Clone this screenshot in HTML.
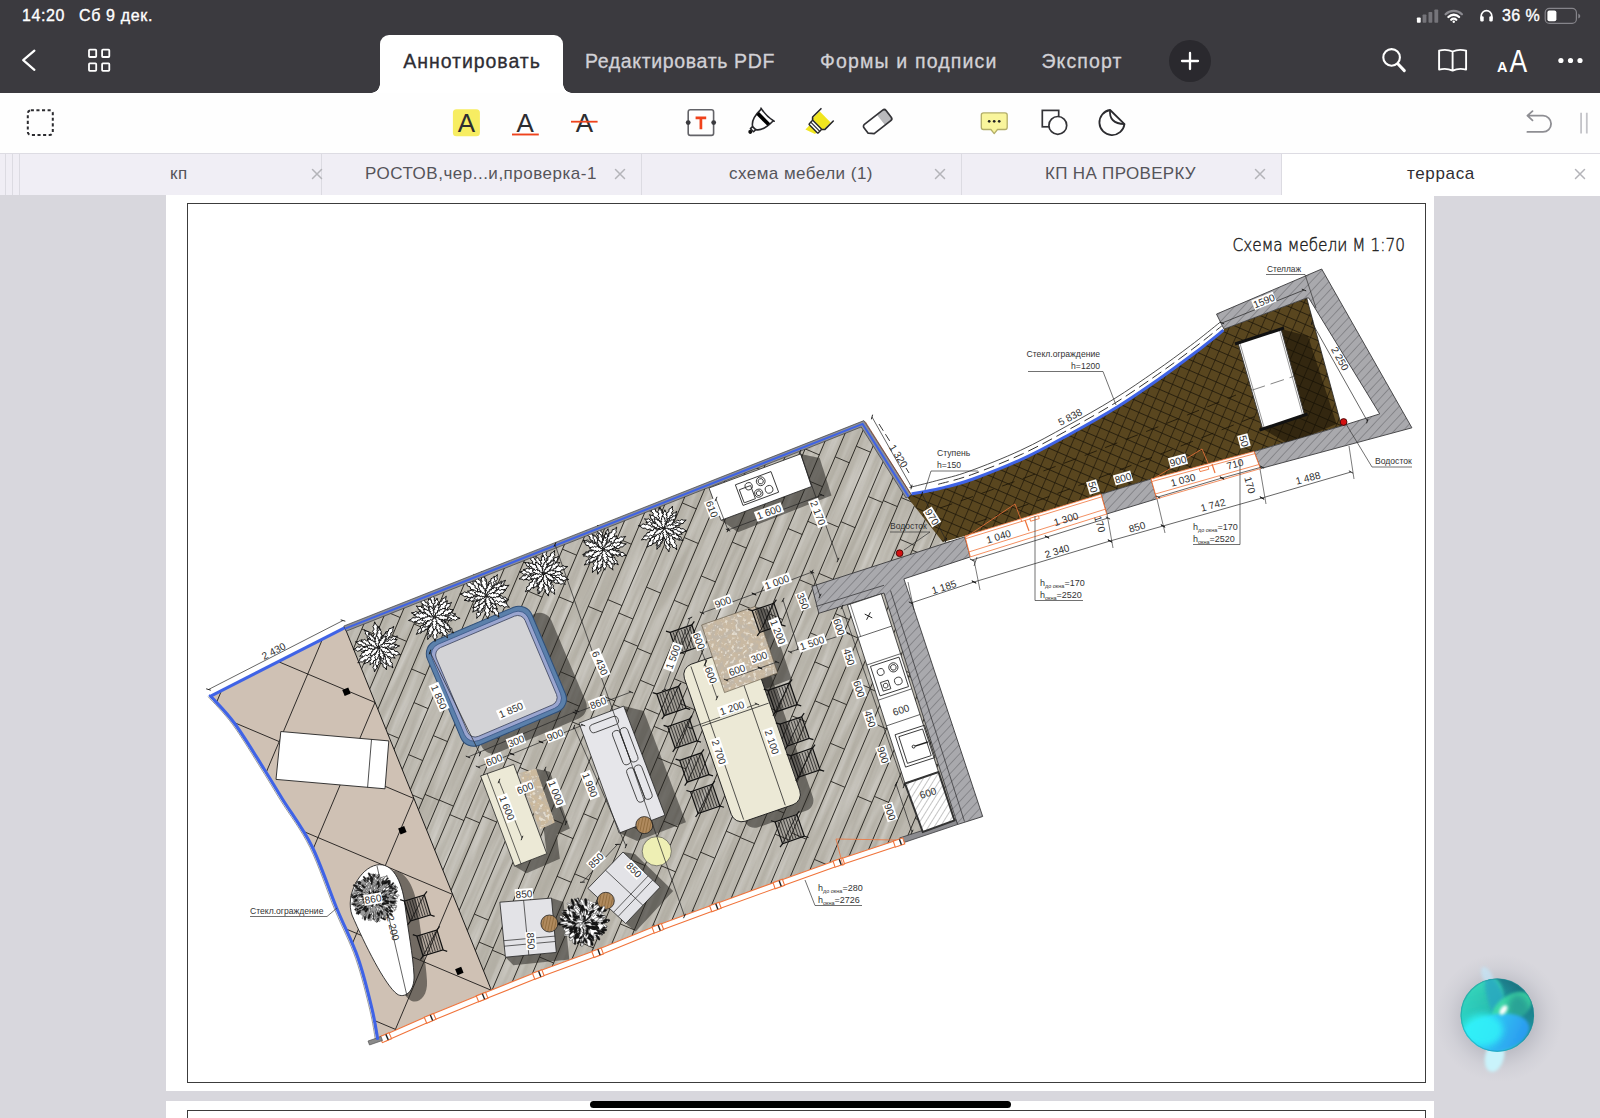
<!DOCTYPE html>
<html lang="ru">
<head>
<meta charset="utf-8">
<title>терраса</title>
<style>
html,body{margin:0;padding:0;}
body{width:1600px;height:1118px;overflow:hidden;position:relative;background:#d8d7dd;font-family:"Liberation Sans",sans-serif;}
.abs{position:absolute;}
#topbar{left:0;top:0;width:1600px;height:93px;background:#3b3a3f;}
#status{left:0;top:0;width:1600px;height:32px;color:#fff;font-size:16px;font-weight:400;}
#status span{-webkit-text-stroke:0.35px #fff;position:absolute;top:7px;white-space:nowrap}
.navt{-webkit-text-stroke:0.3px #d2d1d6;top:50px;font-size:19.5px;color:#d2d1d6;white-space:nowrap;line-height:22px}
#acttab{left:380px;top:35px;width:183px;height:58px;background:#fff;border-radius:9px 9px 0 0;}
#acttab:before,#acttab:after{content:"";position:absolute;bottom:0;width:9px;height:9px;}
#acttab:before{left:-9px;background:radial-gradient(circle at 0 0,rgba(255,255,255,0) 8.5px,#fff 9px);}
#acttab:after{right:-9px;background:radial-gradient(circle at 100% 0,rgba(255,255,255,0) 8.5px,#fff 9px);}
#acttab span{-webkit-text-stroke:0.3px #2e2d33;position:absolute;left:0;width:183px;text-align:center;top:15px;font-size:19.5px;line-height:22px;color:#2e2d33;letter-spacing:0.95px;text-indent:1px}
#toolbar{left:0;top:93px;width:1600px;height:60px;background:#fefefe;}
#tabs{left:0;top:153px;width:1600px;height:42px;background:#f0eef5;border-top:1px solid #dddce3;box-sizing:border-box;}
.tab{position:absolute;top:0;height:41px;border-right:1px solid #dcdbe2;box-sizing:border-box;}
.tab .t{position:absolute;top:10px;font-size:17px;line-height:20px;color:#55545a;white-space:nowrap;}
.tab .x{position:absolute;top:12px;width:14px;height:14px}
#page1{left:166px;top:195px;width:1268px;height:895.5px;background:#fff;}
#page2{left:166px;top:1100.5px;width:1268px;height:40px;background:#fff;}
.frame{position:absolute;border:1.3px solid #3c3c3c;box-sizing:border-box;}
#homebar{left:590px;top:1101px;width:421px;height:7px;border-radius:4px;background:#000;}
svg{position:absolute;left:0;top:0;overflow:visible}
</style>
</head>
<body>
<div id="page1" class="abs"><div class="frame" style="left:21px;top:7.5px;width:1239px;height:880.5px"></div></div>
<div id="page2" class="abs"><div class="frame" style="left:21px;top:9.5px;width:1239px;height:100px"></div></div>
<svg id="plan" width="1600" height="1118" viewBox="0 0 1600 1118" font-family="Liberation Sans, sans-serif">
<defs>
<clipPath id="cBeige"><polygon points="210.3,695.8 344.7,627.2 491.5,990.5 481.0,994.2 428.9,1015.5 384.5,1034.9 380.7,1036.5 377.5,1038.4 372.0,1009.0 358.0,958.0 337.0,909.0 312.0,846.5 283.0,800.0 264.0,769.0 235.0,724.0"/></clipPath>
<clipPath id="cWood"><polygon points="344.7,627.2 863.3,422.5 911.0,495.2 944.0,541.9 960.0,540.0 898.0,578.0 955.0,822.0 899.7,839.5 898.1,839.7 837.8,859.7 777.8,881.2 714.4,904.2 656.7,925.5 596.5,949.9 537.2,971.7 491.5,990.5"/></clipPath>
<clipPath id="cBrown"><polygon points="907.5,497.5 911.5,494.0 940.0,488.5 973.0,479.0 1024.2,458.1 1070.7,433.7 1117.2,407.0 1159.0,379.0 1194.0,353.5 1223.5,330.2 1224.0,329.1 1306.7,298.0 1341.5,426.0 1254.0,451.5 1151.0,479.0 1101.0,494.2 964.9,536.0 942.8,541.9"/></clipPath>
<pattern id="pBrown" width="9.8" height="9.8" patternUnits="userSpaceOnUse" patternTransform="rotate(23.5) translate(3 2)"><rect width="9.8" height="9.8" fill="#59461f"/><path d="M0 0H9.8M0 0V9.8" stroke="#1a1408" stroke-width="1.3" fill="none"/></pattern>
<pattern id="pWall" width="6.5" height="6.5" patternUnits="userSpaceOnUse" patternTransform="rotate(-47)"><rect width="6.5" height="6.5" fill="#a9a9ad"/><path d="M0 0H6.5" stroke="#5c5c60" stroke-width="0.9"/></pattern>
<pattern id="pCab" width="5" height="5" patternUnits="userSpaceOnUse" patternTransform="rotate(-58)"><rect width="5" height="5" fill="#fff"/><path d="M0 0H5" stroke="#555" stroke-width="0.7"/></pattern>
<filter id="grain" x="0" y="0" width="100%" height="100%"><feTurbulence type="fractalNoise" baseFrequency="0.01 0.16" numOctaves="3" seed="3" result="n"/><feColorMatrix type="matrix" values="0 0 0 0 1  0 0 0 0 1  0 0 0 0 1  1.5 0 0 0 -0.5"/></filter>
<filter id="grainD" x="0" y="0" width="100%" height="100%"><feTurbulence type="fractalNoise" baseFrequency="0.012 0.2" numOctaves="2" seed="9" result="n"/><feColorMatrix type="matrix" values="0 0 0 0 0.25  0 0 0 0 0.24  0 0 0 0 0.2  1.4 0 0 0 -0.55"/></filter>
<filter id="speck" x="0" y="0" width="100%" height="100%"><feTurbulence type="fractalNoise" baseFrequency="0.17" numOctaves="2" seed="5"/><feColorMatrix type="matrix" values="0 0 0 0 0.52  0 0 0 0 0.47  0 0 0 0 0.40  0 0 0 6 -2.7"/><feComposite operator="in" in2="SourceGraphic"/></filter>
<filter id="speck2" x="0" y="0" width="100%" height="100%"><feTurbulence type="fractalNoise" baseFrequency="0.28" numOctaves="2" seed="11"/><feColorMatrix type="matrix" values="0 0 0 0 0.86  0 0 0 0 0.82  0 0 0 0 0.74  0 6 0 0 -3.3"/><feComposite operator="in" in2="SourceGraphic"/></filter>
<filter id="blur1"><feGaussianBlur stdDeviation="0.8"/></filter>
</defs>
<polygon points="210.3,695.8 344.7,627.2 491.5,990.5 481.0,994.2 428.9,1015.5 384.5,1034.9 380.7,1036.5 377.5,1038.4 372.0,1009.0 358.0,958.0 337.0,909.0 312.0,846.5 283.0,800.0 264.0,769.0 235.0,724.0" fill="#cfc1b4" stroke="none" stroke-width="1" />
<polygon points="344.7,627.2 863.3,422.5 911.0,495.2 944.0,541.9 960.0,540.0 898.0,578.0 955.0,822.0 899.7,839.5 898.1,839.7 837.8,859.7 777.8,881.2 714.4,904.2 656.7,925.5 596.5,949.9 537.2,971.7 491.5,990.5" fill="#b7b3a9" stroke="none" stroke-width="1" />
<g clip-path="url(#cWood)"><g transform="rotate(-67 620 730)"><rect x="250" y="330" width="760" height="800" fill="#fff" filter="url(#grain)" opacity="0.42"/><rect x="250" y="330" width="760" height="800" fill="#000" filter="url(#grainD)" opacity="0.22"/></g>
<line x1="-104.6" y1="1060.0" x2="175.6" y2="400.0" stroke="#26241f" stroke-width="0.95" />
<line x1="-73.2" y1="986.1" x2="-59.1" y2="992.1" stroke="#26241f" stroke-width="0.9" />
<line x1="-28.9" y1="881.8" x2="-14.8" y2="887.8" stroke="#26241f" stroke-width="0.9" />
<line x1="-8.4" y1="833.4" x2="5.7" y2="839.3" stroke="#26241f" stroke-width="0.9" />
<line x1="31.2" y1="740.1" x2="45.3" y2="746.1" stroke="#26241f" stroke-width="0.9" />
<line x1="63.8" y1="663.4" x2="77.9" y2="669.4" stroke="#26241f" stroke-width="0.9" />
<line x1="83.7" y1="616.3" x2="97.9" y2="622.3" stroke="#26241f" stroke-width="0.9" />
<line x1="122.1" y1="525.9" x2="136.3" y2="531.9" stroke="#26241f" stroke-width="0.9" />
<line x1="141.3" y1="480.8" x2="155.4" y2="486.8" stroke="#26241f" stroke-width="0.9" />
<line x1="176.6" y1="397.5" x2="190.8" y2="403.5" stroke="#26241f" stroke-width="0.9" />
<line x1="-87.9" y1="1060.0" x2="192.2" y2="400.0" stroke="#26241f" stroke-width="0.95" />
<line x1="-65.0" y1="1006.0" x2="-50.8" y2="1011.9" stroke="#26241f" stroke-width="0.9" />
<line x1="-30.0" y1="923.5" x2="-15.8" y2="929.5" stroke="#26241f" stroke-width="0.9" />
<line x1="21.5" y1="802.2" x2="35.7" y2="808.2" stroke="#26241f" stroke-width="0.9" />
<line x1="44.2" y1="748.8" x2="58.3" y2="754.8" stroke="#26241f" stroke-width="0.9" />
<line x1="70.9" y1="685.8" x2="85.1" y2="691.8" stroke="#26241f" stroke-width="0.9" />
<line x1="114.3" y1="583.7" x2="128.4" y2="589.7" stroke="#26241f" stroke-width="0.9" />
<line x1="170.7" y1="450.7" x2="184.9" y2="456.7" stroke="#26241f" stroke-width="0.9" />
<line x1="212.0" y1="353.5" x2="226.1" y2="359.5" stroke="#26241f" stroke-width="0.9" />
<line x1="-71.2" y1="1060.0" x2="208.9" y2="400.0" stroke="#26241f" stroke-width="0.95" />
<line x1="-4.3" y1="902.3" x2="9.8" y2="908.3" stroke="#26241f" stroke-width="0.9" />
<line x1="15.2" y1="856.4" x2="29.3" y2="862.4" stroke="#26241f" stroke-width="0.9" />
<line x1="68.0" y1="732.0" x2="82.1" y2="738.0" stroke="#26241f" stroke-width="0.9" />
<line x1="97.5" y1="662.6" x2="111.6" y2="668.6" stroke="#26241f" stroke-width="0.9" />
<line x1="121.0" y1="607.2" x2="135.1" y2="613.2" stroke="#26241f" stroke-width="0.9" />
<line x1="143.4" y1="554.4" x2="157.5" y2="560.4" stroke="#26241f" stroke-width="0.9" />
<line x1="173.6" y1="483.2" x2="187.7" y2="489.2" stroke="#26241f" stroke-width="0.9" />
<line x1="224.7" y1="362.9" x2="238.8" y2="368.9" stroke="#26241f" stroke-width="0.9" />
<line x1="-54.6" y1="1060.0" x2="225.6" y2="400.0" stroke="#26241f" stroke-width="0.95" />
<line x1="-8.9" y1="952.4" x2="5.2" y2="958.4" stroke="#26241f" stroke-width="0.9" />
<line x1="34.9" y1="849.2" x2="49.0" y2="855.2" stroke="#26241f" stroke-width="0.9" />
<line x1="67.8" y1="771.8" x2="81.9" y2="777.8" stroke="#26241f" stroke-width="0.9" />
<line x1="107.8" y1="677.4" x2="122.0" y2="683.4" stroke="#26241f" stroke-width="0.9" />
<line x1="128.0" y1="629.9" x2="142.1" y2="635.9" stroke="#26241f" stroke-width="0.9" />
<line x1="148.0" y1="582.8" x2="162.1" y2="588.7" stroke="#26241f" stroke-width="0.9" />
<line x1="174.1" y1="521.4" x2="188.2" y2="527.4" stroke="#26241f" stroke-width="0.9" />
<line x1="219.5" y1="414.2" x2="233.7" y2="420.2" stroke="#26241f" stroke-width="0.9" />
<line x1="254.7" y1="331.5" x2="268.8" y2="337.5" stroke="#26241f" stroke-width="0.9" />
<line x1="-37.9" y1="1060.0" x2="242.3" y2="400.0" stroke="#26241f" stroke-width="0.95" />
<line x1="11.1" y1="944.6" x2="25.2" y2="950.6" stroke="#26241f" stroke-width="0.9" />
<line x1="47.3" y1="859.4" x2="61.4" y2="865.4" stroke="#26241f" stroke-width="0.9" />
<line x1="77.1" y1="789.0" x2="91.3" y2="795.0" stroke="#26241f" stroke-width="0.9" />
<line x1="127.3" y1="670.8" x2="141.4" y2="676.8" stroke="#26241f" stroke-width="0.9" />
<line x1="173.6" y1="561.8" x2="187.7" y2="567.8" stroke="#26241f" stroke-width="0.9" />
<line x1="201.2" y1="496.8" x2="215.3" y2="502.8" stroke="#26241f" stroke-width="0.9" />
<line x1="242.3" y1="399.9" x2="256.5" y2="405.9" stroke="#26241f" stroke-width="0.9" />
<line x1="-21.2" y1="1060.0" x2="258.9" y2="400.0" stroke="#26241f" stroke-width="0.95" />
<line x1="44.6" y1="905.0" x2="58.7" y2="911.0" stroke="#26241f" stroke-width="0.9" />
<line x1="92.1" y1="793.1" x2="106.2" y2="799.1" stroke="#26241f" stroke-width="0.9" />
<line x1="121.5" y1="723.8" x2="135.6" y2="729.8" stroke="#26241f" stroke-width="0.9" />
<line x1="179.3" y1="587.6" x2="193.4" y2="593.6" stroke="#26241f" stroke-width="0.9" />
<line x1="201.7" y1="534.8" x2="215.8" y2="540.8" stroke="#26241f" stroke-width="0.9" />
<line x1="236.5" y1="453.0" x2="250.6" y2="459.0" stroke="#26241f" stroke-width="0.9" />
<line x1="285.1" y1="338.4" x2="299.2" y2="344.4" stroke="#26241f" stroke-width="0.9" />
<line x1="-4.5" y1="1060.0" x2="275.6" y2="400.0" stroke="#26241f" stroke-width="0.95" />
<line x1="36.7" y1="962.9" x2="50.8" y2="968.9" stroke="#26241f" stroke-width="0.9" />
<line x1="55.9" y1="917.7" x2="70.0" y2="923.7" stroke="#26241f" stroke-width="0.9" />
<line x1="100.9" y1="811.7" x2="115.0" y2="817.7" stroke="#26241f" stroke-width="0.9" />
<line x1="149.8" y1="696.4" x2="163.9" y2="702.4" stroke="#26241f" stroke-width="0.9" />
<line x1="190.9" y1="599.6" x2="205.0" y2="605.6" stroke="#26241f" stroke-width="0.9" />
<line x1="244.4" y1="473.5" x2="258.5" y2="479.5" stroke="#26241f" stroke-width="0.9" />
<line x1="274.9" y1="401.8" x2="289.0" y2="407.8" stroke="#26241f" stroke-width="0.9" />
<line x1="321.0" y1="293.2" x2="335.1" y2="299.2" stroke="#26241f" stroke-width="0.9" />
<line x1="12.1" y1="1060.0" x2="292.3" y2="400.0" stroke="#26241f" stroke-width="0.95" />
<line x1="67.4" y1="929.7" x2="81.6" y2="935.7" stroke="#26241f" stroke-width="0.9" />
<line x1="103.7" y1="844.2" x2="117.9" y2="850.2" stroke="#26241f" stroke-width="0.9" />
<line x1="155.8" y1="721.6" x2="169.9" y2="727.6" stroke="#26241f" stroke-width="0.9" />
<line x1="212.1" y1="588.8" x2="226.3" y2="594.8" stroke="#26241f" stroke-width="0.9" />
<line x1="249.2" y1="501.6" x2="263.3" y2="507.6" stroke="#26241f" stroke-width="0.9" />
<line x1="294.0" y1="396.0" x2="308.1" y2="402.0" stroke="#26241f" stroke-width="0.9" />
<line x1="28.8" y1="1060.0" x2="309.0" y2="400.0" stroke="#26241f" stroke-width="0.95" />
<line x1="76.6" y1="947.4" x2="90.7" y2="953.4" stroke="#26241f" stroke-width="0.9" />
<line x1="120.7" y1="843.5" x2="134.9" y2="849.5" stroke="#26241f" stroke-width="0.9" />
<line x1="179.1" y1="706.0" x2="193.2" y2="712.0" stroke="#26241f" stroke-width="0.9" />
<line x1="230.4" y1="585.2" x2="244.5" y2="591.2" stroke="#26241f" stroke-width="0.9" />
<line x1="259.6" y1="516.3" x2="273.8" y2="522.3" stroke="#26241f" stroke-width="0.9" />
<line x1="293.0" y1="437.5" x2="307.2" y2="443.5" stroke="#26241f" stroke-width="0.9" />
<line x1="338.0" y1="331.5" x2="352.2" y2="337.5" stroke="#26241f" stroke-width="0.9" />
<line x1="45.5" y1="1060.0" x2="325.6" y2="400.0" stroke="#26241f" stroke-width="0.95" />
<line x1="82.5" y1="972.7" x2="96.7" y2="978.7" stroke="#26241f" stroke-width="0.9" />
<line x1="107.0" y1="915.0" x2="121.2" y2="921.0" stroke="#26241f" stroke-width="0.9" />
<line x1="129.4" y1="862.3" x2="143.5" y2="868.3" stroke="#26241f" stroke-width="0.9" />
<line x1="149.4" y1="815.2" x2="163.5" y2="821.2" stroke="#26241f" stroke-width="0.9" />
<line x1="198.5" y1="699.5" x2="212.6" y2="705.5" stroke="#26241f" stroke-width="0.9" />
<line x1="221.4" y1="645.6" x2="235.5" y2="651.6" stroke="#26241f" stroke-width="0.9" />
<line x1="249.1" y1="580.2" x2="263.3" y2="586.2" stroke="#26241f" stroke-width="0.9" />
<line x1="282.8" y1="501.0" x2="296.9" y2="507.0" stroke="#26241f" stroke-width="0.9" />
<line x1="336.1" y1="375.4" x2="350.2" y2="381.4" stroke="#26241f" stroke-width="0.9" />
<line x1="62.2" y1="1060.0" x2="342.3" y2="400.0" stroke="#26241f" stroke-width="0.95" />
<line x1="100.1" y1="970.7" x2="114.2" y2="976.7" stroke="#26241f" stroke-width="0.9" />
<line x1="140.2" y1="876.2" x2="154.3" y2="882.2" stroke="#26241f" stroke-width="0.9" />
<line x1="194.0" y1="749.4" x2="208.1" y2="755.4" stroke="#26241f" stroke-width="0.9" />
<line x1="245.2" y1="628.8" x2="259.3" y2="634.8" stroke="#26241f" stroke-width="0.9" />
<line x1="298.2" y1="503.8" x2="312.4" y2="509.8" stroke="#26241f" stroke-width="0.9" />
<line x1="327.2" y1="435.5" x2="341.4" y2="441.5" stroke="#26241f" stroke-width="0.9" />
<line x1="361.9" y1="353.9" x2="376.0" y2="359.9" stroke="#26241f" stroke-width="0.9" />
<line x1="78.8" y1="1060.0" x2="359.0" y2="400.0" stroke="#26241f" stroke-width="0.95" />
<line x1="141.1" y1="913.3" x2="155.2" y2="919.3" stroke="#26241f" stroke-width="0.9" />
<line x1="198.0" y1="779.3" x2="212.1" y2="785.3" stroke="#26241f" stroke-width="0.9" />
<line x1="221.8" y1="723.3" x2="235.9" y2="729.3" stroke="#26241f" stroke-width="0.9" />
<line x1="246.6" y1="664.8" x2="260.7" y2="670.8" stroke="#26241f" stroke-width="0.9" />
<line x1="273.7" y1="601.0" x2="287.8" y2="607.0" stroke="#26241f" stroke-width="0.9" />
<line x1="300.8" y1="537.0" x2="315.0" y2="543.0" stroke="#26241f" stroke-width="0.9" />
<line x1="338.3" y1="448.7" x2="352.4" y2="454.7" stroke="#26241f" stroke-width="0.9" />
<line x1="380.1" y1="350.4" x2="394.2" y2="356.4" stroke="#26241f" stroke-width="0.9" />
<line x1="95.5" y1="1060.0" x2="375.7" y2="400.0" stroke="#26241f" stroke-width="0.95" />
<line x1="119.4" y1="1003.7" x2="133.6" y2="1009.7" stroke="#26241f" stroke-width="0.9" />
<line x1="154.2" y1="921.8" x2="168.3" y2="927.8" stroke="#26241f" stroke-width="0.9" />
<line x1="186.9" y1="844.6" x2="201.1" y2="850.6" stroke="#26241f" stroke-width="0.9" />
<line x1="227.8" y1="748.5" x2="241.9" y2="754.5" stroke="#26241f" stroke-width="0.9" />
<line x1="284.4" y1="614.9" x2="298.6" y2="620.9" stroke="#26241f" stroke-width="0.9" />
<line x1="330.3" y1="506.8" x2="344.5" y2="512.8" stroke="#26241f" stroke-width="0.9" />
<line x1="369.1" y1="415.5" x2="383.2" y2="421.5" stroke="#26241f" stroke-width="0.9" />
<line x1="412.0" y1="314.4" x2="426.1" y2="320.4" stroke="#26241f" stroke-width="0.9" />
<line x1="112.2" y1="1060.0" x2="392.3" y2="400.0" stroke="#26241f" stroke-width="0.95" />
<line x1="147.8" y1="976.0" x2="162.0" y2="982.0" stroke="#26241f" stroke-width="0.9" />
<line x1="202.3" y1="847.6" x2="216.5" y2="853.6" stroke="#26241f" stroke-width="0.9" />
<line x1="251.9" y1="730.8" x2="266.0" y2="736.8" stroke="#26241f" stroke-width="0.9" />
<line x1="305.4" y1="604.9" x2="319.5" y2="610.9" stroke="#26241f" stroke-width="0.9" />
<line x1="355.7" y1="486.4" x2="369.8" y2="492.3" stroke="#26241f" stroke-width="0.9" />
<line x1="389.4" y1="407.0" x2="403.5" y2="413.0" stroke="#26241f" stroke-width="0.9" />
<line x1="423.3" y1="327.0" x2="437.5" y2="333.0" stroke="#26241f" stroke-width="0.9" />
<line x1="128.9" y1="1060.0" x2="409.0" y2="400.0" stroke="#26241f" stroke-width="0.95" />
<line x1="174.9" y1="951.6" x2="189.0" y2="957.6" stroke="#26241f" stroke-width="0.9" />
<line x1="195.0" y1="904.1" x2="209.2" y2="910.1" stroke="#26241f" stroke-width="0.9" />
<line x1="215.4" y1="856.2" x2="229.5" y2="862.2" stroke="#26241f" stroke-width="0.9" />
<line x1="241.5" y1="794.6" x2="255.7" y2="800.6" stroke="#26241f" stroke-width="0.9" />
<line x1="265.8" y1="737.5" x2="279.9" y2="743.5" stroke="#26241f" stroke-width="0.9" />
<line x1="297.3" y1="663.2" x2="311.4" y2="669.2" stroke="#26241f" stroke-width="0.9" />
<line x1="317.0" y1="616.7" x2="331.2" y2="622.7" stroke="#26241f" stroke-width="0.9" />
<line x1="334.6" y1="575.2" x2="348.8" y2="581.2" stroke="#26241f" stroke-width="0.9" />
<line x1="358.4" y1="519.2" x2="372.6" y2="525.2" stroke="#26241f" stroke-width="0.9" />
<line x1="380.2" y1="468.0" x2="394.3" y2="474.0" stroke="#26241f" stroke-width="0.9" />
<line x1="412.7" y1="391.4" x2="426.8" y2="397.4" stroke="#26241f" stroke-width="0.9" />
<line x1="145.5" y1="1060.0" x2="425.7" y2="400.0" stroke="#26241f" stroke-width="0.95" />
<line x1="199.6" y1="932.7" x2="213.7" y2="938.7" stroke="#26241f" stroke-width="0.9" />
<line x1="242.4" y1="831.9" x2="256.5" y2="837.9" stroke="#26241f" stroke-width="0.9" />
<line x1="266.1" y1="776.1" x2="280.2" y2="782.1" stroke="#26241f" stroke-width="0.9" />
<line x1="294.0" y1="710.3" x2="308.1" y2="716.3" stroke="#26241f" stroke-width="0.9" />
<line x1="325.8" y1="635.3" x2="339.9" y2="641.3" stroke="#26241f" stroke-width="0.9" />
<line x1="358.3" y1="558.7" x2="372.5" y2="564.7" stroke="#26241f" stroke-width="0.9" />
<line x1="381.0" y1="505.4" x2="395.1" y2="511.4" stroke="#26241f" stroke-width="0.9" />
<line x1="433.4" y1="381.9" x2="447.5" y2="387.9" stroke="#26241f" stroke-width="0.9" />
<line x1="162.2" y1="1060.0" x2="442.4" y2="400.0" stroke="#26241f" stroke-width="0.95" />
<line x1="222.2" y1="918.7" x2="236.3" y2="924.7" stroke="#26241f" stroke-width="0.9" />
<line x1="259.6" y1="830.5" x2="273.8" y2="836.5" stroke="#26241f" stroke-width="0.9" />
<line x1="280.7" y1="780.8" x2="294.9" y2="786.8" stroke="#26241f" stroke-width="0.9" />
<line x1="302.5" y1="729.5" x2="316.6" y2="735.5" stroke="#26241f" stroke-width="0.9" />
<line x1="334.2" y1="654.9" x2="348.3" y2="660.9" stroke="#26241f" stroke-width="0.9" />
<line x1="362.6" y1="587.9" x2="376.7" y2="593.9" stroke="#26241f" stroke-width="0.9" />
<line x1="414.2" y1="466.4" x2="428.3" y2="472.4" stroke="#26241f" stroke-width="0.9" />
<line x1="438.4" y1="409.4" x2="452.5" y2="415.4" stroke="#26241f" stroke-width="0.9" />
<line x1="456.9" y1="365.7" x2="471.1" y2="371.7" stroke="#26241f" stroke-width="0.9" />
<line x1="178.9" y1="1060.0" x2="459.0" y2="400.0" stroke="#26241f" stroke-width="0.95" />
<line x1="240.4" y1="915.0" x2="254.6" y2="921.0" stroke="#26241f" stroke-width="0.9" />
<line x1="264.0" y1="859.4" x2="278.2" y2="865.4" stroke="#26241f" stroke-width="0.9" />
<line x1="303.9" y1="765.5" x2="318.0" y2="771.5" stroke="#26241f" stroke-width="0.9" />
<line x1="322.6" y1="721.4" x2="336.7" y2="727.4" stroke="#26241f" stroke-width="0.9" />
<line x1="361.9" y1="629.0" x2="376.0" y2="635.0" stroke="#26241f" stroke-width="0.9" />
<line x1="419.6" y1="493.0" x2="433.7" y2="499.0" stroke="#26241f" stroke-width="0.9" />
<line x1="472.6" y1="368.1" x2="486.7" y2="374.1" stroke="#26241f" stroke-width="0.9" />
<line x1="195.6" y1="1060.0" x2="475.7" y2="400.0" stroke="#26241f" stroke-width="0.95" />
<line x1="240.2" y1="954.9" x2="254.3" y2="960.9" stroke="#26241f" stroke-width="0.9" />
<line x1="272.8" y1="878.0" x2="286.9" y2="884.0" stroke="#26241f" stroke-width="0.9" />
<line x1="297.3" y1="820.5" x2="311.4" y2="826.5" stroke="#26241f" stroke-width="0.9" />
<line x1="346.5" y1="704.4" x2="360.6" y2="710.4" stroke="#26241f" stroke-width="0.9" />
<line x1="385.9" y1="611.5" x2="400.1" y2="617.5" stroke="#26241f" stroke-width="0.9" />
<line x1="435.5" y1="494.8" x2="449.6" y2="500.8" stroke="#26241f" stroke-width="0.9" />
<line x1="466.6" y1="421.5" x2="480.7" y2="427.5" stroke="#26241f" stroke-width="0.9" />
<line x1="493.3" y1="358.5" x2="507.5" y2="364.5" stroke="#26241f" stroke-width="0.9" />
<line x1="212.2" y1="1060.0" x2="492.4" y2="400.0" stroke="#26241f" stroke-width="0.95" />
<line x1="289.3" y1="878.6" x2="303.4" y2="884.6" stroke="#26241f" stroke-width="0.9" />
<line x1="341.8" y1="754.7" x2="356.0" y2="760.7" stroke="#26241f" stroke-width="0.9" />
<line x1="392.5" y1="635.4" x2="406.6" y2="641.4" stroke="#26241f" stroke-width="0.9" />
<line x1="443.6" y1="514.9" x2="457.8" y2="520.9" stroke="#26241f" stroke-width="0.9" />
<line x1="491.6" y1="401.9" x2="505.7" y2="407.9" stroke="#26241f" stroke-width="0.9" />
<line x1="518.5" y1="338.6" x2="532.6" y2="344.6" stroke="#26241f" stroke-width="0.9" />
<line x1="228.9" y1="1060.0" x2="509.1" y2="400.0" stroke="#26241f" stroke-width="0.95" />
<line x1="273.2" y1="955.6" x2="287.4" y2="961.6" stroke="#26241f" stroke-width="0.9" />
<line x1="292.0" y1="911.4" x2="306.1" y2="917.4" stroke="#26241f" stroke-width="0.9" />
<line x1="310.7" y1="867.3" x2="324.9" y2="873.3" stroke="#26241f" stroke-width="0.9" />
<line x1="339.8" y1="798.8" x2="353.9" y2="804.8" stroke="#26241f" stroke-width="0.9" />
<line x1="368.0" y1="732.4" x2="382.1" y2="738.4" stroke="#26241f" stroke-width="0.9" />
<line x1="414.0" y1="624.0" x2="428.1" y2="630.0" stroke="#26241f" stroke-width="0.9" />
<line x1="470.8" y1="490.1" x2="484.9" y2="496.1" stroke="#26241f" stroke-width="0.9" />
<line x1="506.7" y1="405.5" x2="520.9" y2="411.5" stroke="#26241f" stroke-width="0.9" />
<line x1="562.8" y1="273.5" x2="576.9" y2="279.5" stroke="#26241f" stroke-width="0.9" />
<line x1="245.6" y1="1060.0" x2="525.8" y2="400.0" stroke="#26241f" stroke-width="0.95" />
<line x1="325.5" y1="871.7" x2="339.7" y2="877.7" stroke="#26241f" stroke-width="0.9" />
<line x1="358.1" y1="795.0" x2="372.2" y2="801.0" stroke="#26241f" stroke-width="0.9" />
<line x1="384.7" y1="732.3" x2="398.8" y2="738.3" stroke="#26241f" stroke-width="0.9" />
<line x1="411.6" y1="669.0" x2="425.7" y2="675.0" stroke="#26241f" stroke-width="0.9" />
<line x1="437.2" y1="608.5" x2="451.4" y2="614.5" stroke="#26241f" stroke-width="0.9" />
<line x1="463.2" y1="547.3" x2="477.3" y2="553.3" stroke="#26241f" stroke-width="0.9" />
<line x1="506.4" y1="445.6" x2="520.5" y2="451.6" stroke="#26241f" stroke-width="0.9" />
<line x1="560.9" y1="317.2" x2="575.0" y2="323.2" stroke="#26241f" stroke-width="0.9" />
<line x1="262.3" y1="1060.0" x2="542.4" y2="400.0" stroke="#26241f" stroke-width="0.95" />
<line x1="319.2" y1="925.8" x2="333.4" y2="931.8" stroke="#26241f" stroke-width="0.9" />
<line x1="363.6" y1="821.3" x2="377.7" y2="827.3" stroke="#26241f" stroke-width="0.9" />
<line x1="414.0" y1="702.6" x2="428.1" y2="708.6" stroke="#26241f" stroke-width="0.9" />
<line x1="435.1" y1="653.0" x2="449.2" y2="659.0" stroke="#26241f" stroke-width="0.9" />
<line x1="479.7" y1="547.7" x2="493.9" y2="553.7" stroke="#26241f" stroke-width="0.9" />
<line x1="534.6" y1="418.3" x2="548.8" y2="424.3" stroke="#26241f" stroke-width="0.9" />
<line x1="584.3" y1="301.3" x2="598.5" y2="307.3" stroke="#26241f" stroke-width="0.9" />
<line x1="279.0" y1="1060.0" x2="559.1" y2="400.0" stroke="#26241f" stroke-width="0.95" />
<line x1="333.7" y1="930.9" x2="347.9" y2="936.9" stroke="#26241f" stroke-width="0.9" />
<line x1="358.6" y1="872.3" x2="372.8" y2="878.3" stroke="#26241f" stroke-width="0.9" />
<line x1="408.6" y1="754.6" x2="422.7" y2="760.6" stroke="#26241f" stroke-width="0.9" />
<line x1="439.8" y1="681.0" x2="454.0" y2="687.0" stroke="#26241f" stroke-width="0.9" />
<line x1="490.3" y1="562.2" x2="504.4" y2="568.2" stroke="#26241f" stroke-width="0.9" />
<line x1="547.7" y1="426.8" x2="561.8" y2="432.8" stroke="#26241f" stroke-width="0.9" />
<line x1="581.5" y1="347.2" x2="595.7" y2="353.2" stroke="#26241f" stroke-width="0.9" />
<line x1="295.6" y1="1060.0" x2="575.8" y2="400.0" stroke="#26241f" stroke-width="0.95" />
<line x1="361.5" y1="904.9" x2="375.6" y2="910.9" stroke="#26241f" stroke-width="0.9" />
<line x1="408.8" y1="793.4" x2="422.9" y2="799.4" stroke="#26241f" stroke-width="0.9" />
<line x1="433.3" y1="735.6" x2="447.5" y2="741.6" stroke="#26241f" stroke-width="0.9" />
<line x1="456.1" y1="681.9" x2="470.3" y2="687.9" stroke="#26241f" stroke-width="0.9" />
<line x1="479.9" y1="625.8" x2="494.0" y2="631.8" stroke="#26241f" stroke-width="0.9" />
<line x1="534.6" y1="497.0" x2="548.8" y2="503.0" stroke="#26241f" stroke-width="0.9" />
<line x1="585.3" y1="377.6" x2="599.4" y2="383.6" stroke="#26241f" stroke-width="0.9" />
<line x1="312.3" y1="1060.0" x2="592.5" y2="400.0" stroke="#26241f" stroke-width="0.95" />
<line x1="367.2" y1="930.6" x2="381.4" y2="936.6" stroke="#26241f" stroke-width="0.9" />
<line x1="425.0" y1="794.4" x2="439.2" y2="800.4" stroke="#26241f" stroke-width="0.9" />
<line x1="469.6" y1="689.5" x2="483.7" y2="695.5" stroke="#26241f" stroke-width="0.9" />
<line x1="501.5" y1="614.2" x2="515.7" y2="620.2" stroke="#26241f" stroke-width="0.9" />
<line x1="541.6" y1="519.8" x2="555.8" y2="525.8" stroke="#26241f" stroke-width="0.9" />
<line x1="564.6" y1="465.7" x2="578.7" y2="471.7" stroke="#26241f" stroke-width="0.9" />
<line x1="582.7" y1="422.9" x2="596.9" y2="428.9" stroke="#26241f" stroke-width="0.9" />
<line x1="640.2" y1="287.6" x2="654.3" y2="293.6" stroke="#26241f" stroke-width="0.9" />
<line x1="329.0" y1="1060.0" x2="609.1" y2="400.0" stroke="#26241f" stroke-width="0.95" />
<line x1="383.4" y1="931.8" x2="397.5" y2="937.8" stroke="#26241f" stroke-width="0.9" />
<line x1="439.3" y1="800.1" x2="453.4" y2="806.1" stroke="#26241f" stroke-width="0.9" />
<line x1="474.7" y1="716.8" x2="488.8" y2="722.8" stroke="#26241f" stroke-width="0.9" />
<line x1="528.0" y1="591.1" x2="542.1" y2="597.1" stroke="#26241f" stroke-width="0.9" />
<line x1="579.5" y1="469.8" x2="593.6" y2="475.8" stroke="#26241f" stroke-width="0.9" />
<line x1="605.7" y1="408.0" x2="619.9" y2="414.0" stroke="#26241f" stroke-width="0.9" />
<line x1="633.6" y1="342.3" x2="647.8" y2="348.2" stroke="#26241f" stroke-width="0.9" />
<line x1="345.7" y1="1060.0" x2="625.8" y2="400.0" stroke="#26241f" stroke-width="0.95" />
<line x1="380.0" y1="979.1" x2="394.1" y2="985.1" stroke="#26241f" stroke-width="0.9" />
<line x1="421.6" y1="881.0" x2="435.7" y2="887.0" stroke="#26241f" stroke-width="0.9" />
<line x1="449.8" y1="814.6" x2="464.0" y2="820.6" stroke="#26241f" stroke-width="0.9" />
<line x1="484.6" y1="732.6" x2="498.7" y2="738.6" stroke="#26241f" stroke-width="0.9" />
<line x1="507.6" y1="678.5" x2="521.7" y2="684.5" stroke="#26241f" stroke-width="0.9" />
<line x1="562.5" y1="549.2" x2="576.6" y2="555.2" stroke="#26241f" stroke-width="0.9" />
<line x1="594.6" y1="473.5" x2="608.7" y2="479.5" stroke="#26241f" stroke-width="0.9" />
<line x1="631.0" y1="387.8" x2="645.1" y2="393.8" stroke="#26241f" stroke-width="0.9" />
<line x1="362.3" y1="1060.0" x2="642.5" y2="400.0" stroke="#26241f" stroke-width="0.95" />
<line x1="430.7" y1="899.0" x2="444.8" y2="905.0" stroke="#26241f" stroke-width="0.9" />
<line x1="465.5" y1="816.9" x2="479.7" y2="822.9" stroke="#26241f" stroke-width="0.9" />
<line x1="520.8" y1="686.8" x2="534.9" y2="692.8" stroke="#26241f" stroke-width="0.9" />
<line x1="558.9" y1="596.8" x2="573.1" y2="602.8" stroke="#26241f" stroke-width="0.9" />
<line x1="598.3" y1="504.0" x2="612.5" y2="510.0" stroke="#26241f" stroke-width="0.9" />
<line x1="637.4" y1="412.0" x2="651.5" y2="418.0" stroke="#26241f" stroke-width="0.9" />
<line x1="655.7" y1="368.8" x2="669.9" y2="374.8" stroke="#26241f" stroke-width="0.9" />
<line x1="379.0" y1="1060.0" x2="659.2" y2="400.0" stroke="#26241f" stroke-width="0.95" />
<line x1="414.4" y1="976.6" x2="428.5" y2="982.6" stroke="#26241f" stroke-width="0.9" />
<line x1="432.2" y1="934.8" x2="446.3" y2="940.8" stroke="#26241f" stroke-width="0.9" />
<line x1="482.5" y1="816.1" x2="496.7" y2="822.1" stroke="#26241f" stroke-width="0.9" />
<line x1="507.2" y1="758.0" x2="521.3" y2="764.0" stroke="#26241f" stroke-width="0.9" />
<line x1="544.2" y1="670.8" x2="558.3" y2="676.8" stroke="#26241f" stroke-width="0.9" />
<line x1="591.5" y1="559.3" x2="605.7" y2="565.3" stroke="#26241f" stroke-width="0.9" />
<line x1="631.9" y1="464.1" x2="646.1" y2="470.1" stroke="#26241f" stroke-width="0.9" />
<line x1="662.9" y1="391.2" x2="677.0" y2="397.2" stroke="#26241f" stroke-width="0.9" />
<line x1="395.7" y1="1060.0" x2="675.8" y2="400.0" stroke="#26241f" stroke-width="0.95" />
<line x1="448.2" y1="936.3" x2="462.3" y2="942.3" stroke="#26241f" stroke-width="0.9" />
<line x1="498.0" y1="819.0" x2="512.1" y2="825.0" stroke="#26241f" stroke-width="0.9" />
<line x1="519.9" y1="767.4" x2="534.0" y2="773.4" stroke="#26241f" stroke-width="0.9" />
<line x1="560.5" y1="671.8" x2="574.6" y2="677.8" stroke="#26241f" stroke-width="0.9" />
<line x1="588.2" y1="606.3" x2="602.4" y2="612.3" stroke="#26241f" stroke-width="0.9" />
<line x1="617.2" y1="538.2" x2="631.3" y2="544.2" stroke="#26241f" stroke-width="0.9" />
<line x1="666.5" y1="422.1" x2="680.6" y2="428.1" stroke="#26241f" stroke-width="0.9" />
<line x1="704.9" y1="331.6" x2="719.0" y2="337.6" stroke="#26241f" stroke-width="0.9" />
<line x1="412.4" y1="1060.0" x2="692.5" y2="400.0" stroke="#26241f" stroke-width="0.95" />
<line x1="474.3" y1="914.1" x2="488.4" y2="920.1" stroke="#26241f" stroke-width="0.9" />
<line x1="529.3" y1="784.5" x2="543.4" y2="790.5" stroke="#26241f" stroke-width="0.9" />
<line x1="565.1" y1="700.2" x2="579.2" y2="706.2" stroke="#26241f" stroke-width="0.9" />
<line x1="607.8" y1="599.6" x2="621.9" y2="605.6" stroke="#26241f" stroke-width="0.9" />
<line x1="646.1" y1="509.3" x2="660.2" y2="515.3" stroke="#26241f" stroke-width="0.9" />
<line x1="684.7" y1="418.4" x2="698.8" y2="424.4" stroke="#26241f" stroke-width="0.9" />
<line x1="730.7" y1="310.0" x2="744.8" y2="316.0" stroke="#26241f" stroke-width="0.9" />
<line x1="429.0" y1="1060.0" x2="709.2" y2="400.0" stroke="#26241f" stroke-width="0.95" />
<line x1="479.1" y1="942.1" x2="493.2" y2="948.0" stroke="#26241f" stroke-width="0.9" />
<line x1="516.3" y1="854.4" x2="530.4" y2="860.4" stroke="#26241f" stroke-width="0.9" />
<line x1="572.5" y1="722.0" x2="586.6" y2="728.0" stroke="#26241f" stroke-width="0.9" />
<line x1="618.8" y1="613.0" x2="632.9" y2="619.0" stroke="#26241f" stroke-width="0.9" />
<line x1="672.3" y1="486.9" x2="686.4" y2="492.9" stroke="#26241f" stroke-width="0.9" />
<line x1="728.6" y1="354.4" x2="742.7" y2="360.4" stroke="#26241f" stroke-width="0.9" />
<line x1="445.7" y1="1060.0" x2="725.9" y2="400.0" stroke="#26241f" stroke-width="0.95" />
<line x1="492.3" y1="950.2" x2="506.5" y2="956.2" stroke="#26241f" stroke-width="0.9" />
<line x1="548.6" y1="817.6" x2="562.7" y2="823.6" stroke="#26241f" stroke-width="0.9" />
<line x1="600.7" y1="695.0" x2="614.8" y2="701.0" stroke="#26241f" stroke-width="0.9" />
<line x1="623.9" y1="640.3" x2="638.0" y2="646.3" stroke="#26241f" stroke-width="0.9" />
<line x1="646.4" y1="587.1" x2="660.6" y2="593.1" stroke="#26241f" stroke-width="0.9" />
<line x1="682.2" y1="502.9" x2="696.3" y2="508.9" stroke="#26241f" stroke-width="0.9" />
<line x1="702.7" y1="454.5" x2="716.9" y2="460.5" stroke="#26241f" stroke-width="0.9" />
<line x1="730.2" y1="389.8" x2="744.3" y2="395.8" stroke="#26241f" stroke-width="0.9" />
<line x1="462.4" y1="1060.0" x2="742.5" y2="400.0" stroke="#26241f" stroke-width="0.95" />
<line x1="509.1" y1="949.8" x2="523.3" y2="955.8" stroke="#26241f" stroke-width="0.9" />
<line x1="558.9" y1="832.6" x2="573.0" y2="838.6" stroke="#26241f" stroke-width="0.9" />
<line x1="613.3" y1="704.5" x2="627.4" y2="710.5" stroke="#26241f" stroke-width="0.9" />
<line x1="637.2" y1="648.2" x2="651.3" y2="654.2" stroke="#26241f" stroke-width="0.9" />
<line x1="684.2" y1="537.5" x2="698.3" y2="543.5" stroke="#26241f" stroke-width="0.9" />
<line x1="728.8" y1="432.3" x2="743.0" y2="438.3" stroke="#26241f" stroke-width="0.9" />
<line x1="752.3" y1="377.0" x2="766.4" y2="383.0" stroke="#26241f" stroke-width="0.9" />
<line x1="479.1" y1="1060.0" x2="759.2" y2="400.0" stroke="#26241f" stroke-width="0.95" />
<line x1="557.0" y1="876.3" x2="571.2" y2="882.3" stroke="#26241f" stroke-width="0.9" />
<line x1="583.6" y1="813.7" x2="597.8" y2="819.7" stroke="#26241f" stroke-width="0.9" />
<line x1="640.3" y1="680.2" x2="654.4" y2="686.2" stroke="#26241f" stroke-width="0.9" />
<line x1="674.2" y1="600.3" x2="688.3" y2="606.3" stroke="#26241f" stroke-width="0.9" />
<line x1="711.8" y1="511.7" x2="725.9" y2="517.7" stroke="#26241f" stroke-width="0.9" />
<line x1="770.0" y1="374.6" x2="784.1" y2="380.6" stroke="#26241f" stroke-width="0.9" />
<line x1="495.7" y1="1060.0" x2="775.9" y2="400.0" stroke="#26241f" stroke-width="0.95" />
<line x1="539.5" y1="957.0" x2="553.6" y2="963.0" stroke="#26241f" stroke-width="0.9" />
<line x1="574.7" y1="873.9" x2="588.9" y2="879.9" stroke="#26241f" stroke-width="0.9" />
<line x1="613.5" y1="782.6" x2="627.6" y2="788.6" stroke="#26241f" stroke-width="0.9" />
<line x1="645.0" y1="708.4" x2="659.1" y2="714.4" stroke="#26241f" stroke-width="0.9" />
<line x1="670.6" y1="648.1" x2="684.7" y2="654.1" stroke="#26241f" stroke-width="0.9" />
<line x1="701.2" y1="575.9" x2="715.4" y2="581.9" stroke="#26241f" stroke-width="0.9" />
<line x1="748.5" y1="464.6" x2="762.6" y2="470.6" stroke="#26241f" stroke-width="0.9" />
<line x1="766.8" y1="421.3" x2="781.0" y2="427.3" stroke="#26241f" stroke-width="0.9" />
<line x1="807.1" y1="326.4" x2="821.3" y2="332.4" stroke="#26241f" stroke-width="0.9" />
<line x1="512.4" y1="1060.0" x2="792.6" y2="400.0" stroke="#26241f" stroke-width="0.95" />
<line x1="541.1" y1="992.5" x2="555.2" y2="998.5" stroke="#26241f" stroke-width="0.9" />
<line x1="572.2" y1="919.0" x2="586.4" y2="925.0" stroke="#26241f" stroke-width="0.9" />
<line x1="615.4" y1="817.3" x2="629.6" y2="823.3" stroke="#26241f" stroke-width="0.9" />
<line x1="654.0" y1="726.4" x2="668.2" y2="732.4" stroke="#26241f" stroke-width="0.9" />
<line x1="674.2" y1="678.7" x2="688.4" y2="684.7" stroke="#26241f" stroke-width="0.9" />
<line x1="732.2" y1="542.1" x2="746.4" y2="548.1" stroke="#26241f" stroke-width="0.9" />
<line x1="782.2" y1="424.5" x2="796.3" y2="430.5" stroke="#26241f" stroke-width="0.9" />
<line x1="839.6" y1="289.1" x2="853.7" y2="295.1" stroke="#26241f" stroke-width="0.9" />
<line x1="529.1" y1="1060.0" x2="809.2" y2="400.0" stroke="#26241f" stroke-width="0.95" />
<line x1="560.0" y1="987.1" x2="574.1" y2="993.1" stroke="#26241f" stroke-width="0.9" />
<line x1="579.2" y1="941.9" x2="593.4" y2="947.9" stroke="#26241f" stroke-width="0.9" />
<line x1="628.8" y1="825.2" x2="642.9" y2="831.2" stroke="#26241f" stroke-width="0.9" />
<line x1="657.4" y1="757.6" x2="671.6" y2="763.6" stroke="#26241f" stroke-width="0.9" />
<line x1="680.3" y1="703.7" x2="694.5" y2="709.6" stroke="#26241f" stroke-width="0.9" />
<line x1="715.3" y1="621.4" x2="729.4" y2="627.4" stroke="#26241f" stroke-width="0.9" />
<line x1="770.2" y1="491.9" x2="784.4" y2="497.9" stroke="#26241f" stroke-width="0.9" />
<line x1="821.4" y1="371.3" x2="835.5" y2="377.3" stroke="#26241f" stroke-width="0.9" />
<line x1="545.8" y1="1060.0" x2="825.9" y2="400.0" stroke="#26241f" stroke-width="0.95" />
<line x1="575.5" y1="989.9" x2="589.7" y2="995.9" stroke="#26241f" stroke-width="0.9" />
<line x1="630.8" y1="859.6" x2="645.0" y2="865.6" stroke="#26241f" stroke-width="0.9" />
<line x1="671.8" y1="763.0" x2="685.9" y2="769.0" stroke="#26241f" stroke-width="0.9" />
<line x1="718.1" y1="653.9" x2="732.3" y2="659.9" stroke="#26241f" stroke-width="0.9" />
<line x1="739.4" y1="603.8" x2="753.5" y2="609.8" stroke="#26241f" stroke-width="0.9" />
<line x1="759.3" y1="556.8" x2="773.5" y2="562.8" stroke="#26241f" stroke-width="0.9" />
<line x1="805.2" y1="448.9" x2="819.3" y2="454.9" stroke="#26241f" stroke-width="0.9" />
<line x1="840.2" y1="366.4" x2="854.3" y2="372.4" stroke="#26241f" stroke-width="0.9" />
<line x1="562.4" y1="1060.0" x2="842.6" y2="400.0" stroke="#26241f" stroke-width="0.95" />
<line x1="620.2" y1="923.9" x2="634.3" y2="929.9" stroke="#26241f" stroke-width="0.9" />
<line x1="663.8" y1="821.1" x2="678.0" y2="827.1" stroke="#26241f" stroke-width="0.9" />
<line x1="714.3" y1="702.2" x2="728.4" y2="708.2" stroke="#26241f" stroke-width="0.9" />
<line x1="735.3" y1="652.7" x2="749.4" y2="658.7" stroke="#26241f" stroke-width="0.9" />
<line x1="788.0" y1="528.5" x2="802.2" y2="534.5" stroke="#26241f" stroke-width="0.9" />
<line x1="808.3" y1="480.7" x2="822.5" y2="486.7" stroke="#26241f" stroke-width="0.9" />
<line x1="861.3" y1="355.9" x2="875.5" y2="361.9" stroke="#26241f" stroke-width="0.9" />
<line x1="579.1" y1="1060.0" x2="859.3" y2="400.0" stroke="#26241f" stroke-width="0.95" />
<line x1="621.2" y1="960.7" x2="635.4" y2="966.7" stroke="#26241f" stroke-width="0.9" />
<line x1="661.5" y1="865.9" x2="675.7" y2="871.9" stroke="#26241f" stroke-width="0.9" />
<line x1="717.1" y1="734.9" x2="731.3" y2="740.9" stroke="#26241f" stroke-width="0.9" />
<line x1="745.7" y1="667.6" x2="759.8" y2="673.6" stroke="#26241f" stroke-width="0.9" />
<line x1="768.6" y1="613.6" x2="782.7" y2="619.6" stroke="#26241f" stroke-width="0.9" />
<line x1="807.8" y1="521.3" x2="821.9" y2="527.3" stroke="#26241f" stroke-width="0.9" />
<line x1="835.1" y1="456.8" x2="849.3" y2="462.8" stroke="#26241f" stroke-width="0.9" />
<line x1="857.2" y1="404.8" x2="871.3" y2="410.8" stroke="#26241f" stroke-width="0.9" />
<line x1="881.4" y1="347.8" x2="895.6" y2="353.8" stroke="#26241f" stroke-width="0.9" />
<line x1="595.8" y1="1060.0" x2="875.9" y2="400.0" stroke="#26241f" stroke-width="0.95" />
<line x1="622.8" y1="996.3" x2="637.0" y2="1002.3" stroke="#26241f" stroke-width="0.9" />
<line x1="653.2" y1="924.7" x2="667.3" y2="930.7" stroke="#26241f" stroke-width="0.9" />
<line x1="683.3" y1="853.8" x2="697.4" y2="859.8" stroke="#26241f" stroke-width="0.9" />
<line x1="732.1" y1="739.0" x2="746.2" y2="745.0" stroke="#26241f" stroke-width="0.9" />
<line x1="761.5" y1="669.5" x2="775.7" y2="675.5" stroke="#26241f" stroke-width="0.9" />
<line x1="799.6" y1="579.8" x2="813.8" y2="585.8" stroke="#26241f" stroke-width="0.9" />
<line x1="824.5" y1="521.2" x2="838.6" y2="527.2" stroke="#26241f" stroke-width="0.9" />
<line x1="856.3" y1="446.2" x2="870.5" y2="452.2" stroke="#26241f" stroke-width="0.9" />
<line x1="874.7" y1="403.0" x2="888.8" y2="409.0" stroke="#26241f" stroke-width="0.9" />
<line x1="902.5" y1="337.4" x2="916.6" y2="343.4" stroke="#26241f" stroke-width="0.9" />
<line x1="612.5" y1="1060.0" x2="892.6" y2="400.0" stroke="#26241f" stroke-width="0.95" />
<line x1="660.5" y1="946.9" x2="674.6" y2="952.9" stroke="#26241f" stroke-width="0.9" />
<line x1="700.7" y1="852.2" x2="714.8" y2="858.2" stroke="#26241f" stroke-width="0.9" />
<line x1="726.0" y1="792.5" x2="740.2" y2="798.5" stroke="#26241f" stroke-width="0.9" />
<line x1="763.1" y1="705.1" x2="777.2" y2="711.1" stroke="#26241f" stroke-width="0.9" />
<line x1="819.0" y1="573.4" x2="833.1" y2="579.4" stroke="#26241f" stroke-width="0.9" />
<line x1="841.0" y1="521.7" x2="855.1" y2="527.7" stroke="#26241f" stroke-width="0.9" />
<line x1="892.1" y1="401.1" x2="906.3" y2="407.1" stroke="#26241f" stroke-width="0.9" />
<line x1="927.5" y1="317.9" x2="941.6" y2="323.9" stroke="#26241f" stroke-width="0.9" />
<line x1="629.1" y1="1060.0" x2="909.3" y2="400.0" stroke="#26241f" stroke-width="0.95" />
<line x1="692.6" y1="910.6" x2="706.7" y2="916.6" stroke="#26241f" stroke-width="0.9" />
<line x1="726.3" y1="831.2" x2="740.4" y2="837.2" stroke="#26241f" stroke-width="0.9" />
<line x1="764.6" y1="740.8" x2="778.8" y2="746.8" stroke="#26241f" stroke-width="0.9" />
<line x1="810.4" y1="632.9" x2="824.6" y2="638.9" stroke="#26241f" stroke-width="0.9" />
<line x1="868.3" y1="496.5" x2="882.5" y2="502.5" stroke="#26241f" stroke-width="0.9" />
<line x1="900.0" y1="421.9" x2="914.1" y2="427.9" stroke="#26241f" stroke-width="0.9" />
<line x1="951.7" y1="300.1" x2="965.8" y2="306.1" stroke="#26241f" stroke-width="0.9" />
<line x1="645.8" y1="1060.0" x2="926.0" y2="400.0" stroke="#26241f" stroke-width="0.95" />
<line x1="706.1" y1="918.1" x2="720.2" y2="924.1" stroke="#26241f" stroke-width="0.9" />
<line x1="740.2" y1="837.5" x2="754.4" y2="843.5" stroke="#26241f" stroke-width="0.9" />
<line x1="772.1" y1="762.5" x2="786.2" y2="768.5" stroke="#26241f" stroke-width="0.9" />
<line x1="791.9" y1="715.8" x2="806.0" y2="721.8" stroke="#26241f" stroke-width="0.9" />
<line x1="814.8" y1="661.9" x2="828.9" y2="667.9" stroke="#26241f" stroke-width="0.9" />
<line x1="835.3" y1="613.6" x2="849.4" y2="619.6" stroke="#26241f" stroke-width="0.9" />
<line x1="883.3" y1="500.6" x2="897.4" y2="506.6" stroke="#26241f" stroke-width="0.9" />
<line x1="911.3" y1="434.5" x2="925.5" y2="440.5" stroke="#26241f" stroke-width="0.9" />
<line x1="935.6" y1="377.3" x2="949.8" y2="383.3" stroke="#26241f" stroke-width="0.9" />
<line x1="662.5" y1="1060.0" x2="942.6" y2="400.0" stroke="#26241f" stroke-width="0.95" />
<line x1="716.6" y1="932.6" x2="730.7" y2="938.6" stroke="#26241f" stroke-width="0.9" />
<line x1="769.9" y1="807.0" x2="784.0" y2="813.0" stroke="#26241f" stroke-width="0.9" />
<line x1="815.0" y1="700.8" x2="829.1" y2="706.8" stroke="#26241f" stroke-width="0.9" />
<line x1="844.1" y1="632.1" x2="858.2" y2="638.1" stroke="#26241f" stroke-width="0.9" />
<line x1="871.6" y1="567.3" x2="885.8" y2="573.3" stroke="#26241f" stroke-width="0.9" />
<line x1="901.2" y1="497.6" x2="915.4" y2="503.5" stroke="#26241f" stroke-width="0.9" />
<line x1="937.7" y1="411.7" x2="951.8" y2="417.7" stroke="#26241f" stroke-width="0.9" />
<line x1="961.7" y1="355.1" x2="975.8" y2="361.1" stroke="#26241f" stroke-width="0.9" />
<line x1="679.2" y1="1060.0" x2="959.3" y2="400.0" stroke="#26241f" stroke-width="0.95" />
<line x1="718.0" y1="968.5" x2="732.1" y2="974.5" stroke="#26241f" stroke-width="0.9" />
<line x1="775.0" y1="834.1" x2="789.2" y2="840.1" stroke="#26241f" stroke-width="0.9" />
<line x1="832.5" y1="698.7" x2="846.7" y2="704.7" stroke="#26241f" stroke-width="0.9" />
<line x1="872.6" y1="604.4" x2="886.7" y2="610.4" stroke="#26241f" stroke-width="0.9" />
<line x1="900.2" y1="539.4" x2="914.3" y2="545.3" stroke="#26241f" stroke-width="0.9" />
<line x1="957.4" y1="404.6" x2="971.5" y2="410.6" stroke="#26241f" stroke-width="0.9" />
<line x1="987.7" y1="333.3" x2="1001.8" y2="339.2" stroke="#26241f" stroke-width="0.9" />
<line x1="695.8" y1="1060.0" x2="976.0" y2="400.0" stroke="#26241f" stroke-width="0.95" />
<line x1="721.8" y1="998.8" x2="736.0" y2="1004.8" stroke="#26241f" stroke-width="0.9" />
<line x1="755.1" y1="920.5" x2="769.2" y2="926.5" stroke="#26241f" stroke-width="0.9" />
<line x1="792.1" y1="833.2" x2="806.3" y2="839.2" stroke="#26241f" stroke-width="0.9" />
<line x1="830.3" y1="743.2" x2="844.5" y2="749.2" stroke="#26241f" stroke-width="0.9" />
<line x1="856.2" y1="682.3" x2="870.3" y2="688.3" stroke="#26241f" stroke-width="0.9" />
<line x1="894.5" y1="592.1" x2="908.6" y2="598.1" stroke="#26241f" stroke-width="0.9" />
<line x1="912.2" y1="550.2" x2="926.4" y2="556.2" stroke="#26241f" stroke-width="0.9" />
<line x1="940.7" y1="483.2" x2="954.8" y2="489.2" stroke="#26241f" stroke-width="0.9" />
<line x1="961.9" y1="433.1" x2="976.1" y2="439.1" stroke="#26241f" stroke-width="0.9" />
<line x1="995.9" y1="353.1" x2="1010.0" y2="359.1" stroke="#26241f" stroke-width="0.9" />
<line x1="712.5" y1="1060.0" x2="992.7" y2="400.0" stroke="#26241f" stroke-width="0.95" />
<line x1="732.0" y1="1014.1" x2="746.1" y2="1020.1" stroke="#26241f" stroke-width="0.9" />
<line x1="762.1" y1="943.3" x2="776.2" y2="949.3" stroke="#26241f" stroke-width="0.9" />
<line x1="789.2" y1="879.3" x2="803.3" y2="885.3" stroke="#26241f" stroke-width="0.9" />
<line x1="830.8" y1="781.3" x2="844.9" y2="787.3" stroke="#26241f" stroke-width="0.9" />
<line x1="870.1" y1="688.8" x2="884.2" y2="694.8" stroke="#26241f" stroke-width="0.9" />
<line x1="918.5" y1="574.8" x2="932.6" y2="580.8" stroke="#26241f" stroke-width="0.9" />
<line x1="963.0" y1="469.8" x2="977.2" y2="475.8" stroke="#26241f" stroke-width="0.9" />
<line x1="1010.0" y1="359.2" x2="1024.1" y2="365.2" stroke="#26241f" stroke-width="0.9" />
<line x1="729.2" y1="1060.0" x2="1009.3" y2="400.0" stroke="#26241f" stroke-width="0.95" />
<line x1="783.4" y1="932.4" x2="797.5" y2="938.4" stroke="#26241f" stroke-width="0.9" />
<line x1="814.3" y1="859.4" x2="828.5" y2="865.4" stroke="#26241f" stroke-width="0.9" />
<line x1="872.3" y1="722.8" x2="886.4" y2="728.8" stroke="#26241f" stroke-width="0.9" />
<line x1="896.0" y1="667.0" x2="910.2" y2="673.0" stroke="#26241f" stroke-width="0.9" />
<line x1="943.3" y1="555.5" x2="957.4" y2="561.5" stroke="#26241f" stroke-width="0.9" />
<line x1="987.3" y1="452.0" x2="1001.4" y2="458.0" stroke="#26241f" stroke-width="0.9" />
<line x1="1006.7" y1="406.3" x2="1020.8" y2="412.3" stroke="#26241f" stroke-width="0.9" />
<line x1="1058.5" y1="284.1" x2="1072.7" y2="290.1" stroke="#26241f" stroke-width="0.9" />
<line x1="745.9" y1="1060.0" x2="1026.0" y2="400.0" stroke="#26241f" stroke-width="0.95" />
<line x1="810.1" y1="908.7" x2="824.2" y2="914.7" stroke="#26241f" stroke-width="0.9" />
<line x1="857.8" y1="796.3" x2="871.9" y2="802.3" stroke="#26241f" stroke-width="0.9" />
<line x1="908.7" y1="676.4" x2="922.8" y2="682.4" stroke="#26241f" stroke-width="0.9" />
<line x1="932.0" y1="621.5" x2="946.1" y2="627.5" stroke="#26241f" stroke-width="0.9" />
<line x1="971.1" y1="529.5" x2="985.2" y2="535.5" stroke="#26241f" stroke-width="0.9" />
<line x1="1009.3" y1="439.3" x2="1023.5" y2="445.3" stroke="#26241f" stroke-width="0.9" />
<line x1="1061.2" y1="317.2" x2="1075.3" y2="323.2" stroke="#26241f" stroke-width="0.9" />
<line x1="762.5" y1="1060.0" x2="1042.7" y2="400.0" stroke="#26241f" stroke-width="0.95" />
<line x1="832.9" y1="894.3" x2="847.0" y2="900.3" stroke="#26241f" stroke-width="0.9" />
<line x1="874.4" y1="796.4" x2="888.6" y2="802.4" stroke="#26241f" stroke-width="0.9" />
<line x1="928.7" y1="668.7" x2="942.8" y2="674.7" stroke="#26241f" stroke-width="0.9" />
<line x1="974.3" y1="561.2" x2="988.4" y2="567.2" stroke="#26241f" stroke-width="0.9" />
<line x1="1020.3" y1="452.8" x2="1034.4" y2="458.8" stroke="#26241f" stroke-width="0.9" />
<line x1="1047.3" y1="389.2" x2="1061.4" y2="395.2" stroke="#26241f" stroke-width="0.9" />
<line x1="779.2" y1="1060.0" x2="1059.4" y2="400.0" stroke="#26241f" stroke-width="0.95" />
<line x1="803.0" y1="1004.0" x2="817.1" y2="1010.0" stroke="#26241f" stroke-width="0.9" />
<line x1="835.4" y1="927.7" x2="849.5" y2="933.7" stroke="#26241f" stroke-width="0.9" />
<line x1="857.3" y1="876.1" x2="871.4" y2="882.1" stroke="#26241f" stroke-width="0.9" />
<line x1="909.1" y1="753.9" x2="923.3" y2="759.9" stroke="#26241f" stroke-width="0.9" />
<line x1="949.6" y1="658.5" x2="963.8" y2="664.5" stroke="#26241f" stroke-width="0.9" />
<line x1="993.0" y1="556.4" x2="1007.1" y2="562.4" stroke="#26241f" stroke-width="0.9" />
<line x1="1036.2" y1="454.5" x2="1050.4" y2="460.5" stroke="#26241f" stroke-width="0.9" />
<line x1="1081.8" y1="347.3" x2="1095.9" y2="353.3" stroke="#26241f" stroke-width="0.9" />
<line x1="795.9" y1="1060.0" x2="1076.0" y2="400.0" stroke="#26241f" stroke-width="0.95" />
<line x1="825.1" y1="991.2" x2="839.2" y2="997.2" stroke="#26241f" stroke-width="0.9" />
<line x1="875.4" y1="872.7" x2="889.5" y2="878.7" stroke="#26241f" stroke-width="0.9" />
<line x1="923.7" y1="759.0" x2="937.8" y2="765.0" stroke="#26241f" stroke-width="0.9" />
<line x1="961.9" y1="668.9" x2="976.0" y2="674.9" stroke="#26241f" stroke-width="0.9" />
<line x1="1001.4" y1="575.8" x2="1015.6" y2="581.8" stroke="#26241f" stroke-width="0.9" />
<line x1="1046.1" y1="470.6" x2="1060.2" y2="476.6" stroke="#26241f" stroke-width="0.9" />
<line x1="1066.4" y1="422.8" x2="1080.5" y2="428.8" stroke="#26241f" stroke-width="0.9" />
<line x1="1114.2" y1="310.2" x2="1128.3" y2="316.2" stroke="#26241f" stroke-width="0.9" />
<line x1="812.6" y1="1060.0" x2="1092.7" y2="400.0" stroke="#26241f" stroke-width="0.95" />
<line x1="839.1" y1="997.5" x2="853.2" y2="1003.5" stroke="#26241f" stroke-width="0.9" />
<line x1="867.6" y1="930.4" x2="881.7" y2="936.4" stroke="#26241f" stroke-width="0.9" />
<line x1="915.1" y1="818.4" x2="929.2" y2="824.4" stroke="#26241f" stroke-width="0.9" />
<line x1="941.1" y1="757.2" x2="955.2" y2="763.2" stroke="#26241f" stroke-width="0.9" />
<line x1="989.0" y1="644.3" x2="1003.2" y2="650.3" stroke="#26241f" stroke-width="0.9" />
<line x1="1046.7" y1="508.5" x2="1060.8" y2="514.5" stroke="#26241f" stroke-width="0.9" />
<line x1="1084.5" y1="419.4" x2="1098.6" y2="425.4" stroke="#26241f" stroke-width="0.9" />
<line x1="1117.8" y1="341.0" x2="1131.9" y2="347.0" stroke="#26241f" stroke-width="0.9" />
<line x1="829.2" y1="1060.0" x2="1109.4" y2="400.0" stroke="#26241f" stroke-width="0.95" />
<line x1="886.1" y1="926.0" x2="900.2" y2="932.0" stroke="#26241f" stroke-width="0.9" />
<line x1="935.2" y1="810.5" x2="949.3" y2="816.5" stroke="#26241f" stroke-width="0.9" />
<line x1="978.1" y1="709.4" x2="992.2" y2="715.4" stroke="#26241f" stroke-width="0.9" />
<line x1="1022.0" y1="605.9" x2="1036.1" y2="611.9" stroke="#26241f" stroke-width="0.9" />
<line x1="1042.8" y1="557.0" x2="1056.9" y2="563.0" stroke="#26241f" stroke-width="0.9" />
<line x1="1066.4" y1="501.3" x2="1080.5" y2="507.3" stroke="#26241f" stroke-width="0.9" />
<line x1="1094.4" y1="435.3" x2="1108.5" y2="441.3" stroke="#26241f" stroke-width="0.9" />
<line x1="1142.5" y1="322.1" x2="1156.6" y2="328.1" stroke="#26241f" stroke-width="0.9" />
<line x1="845.9" y1="1060.0" x2="1126.1" y2="400.0" stroke="#26241f" stroke-width="0.95" />
<line x1="893.9" y1="946.9" x2="908.1" y2="952.9" stroke="#26241f" stroke-width="0.9" />
<line x1="912.0" y1="904.3" x2="926.2" y2="910.3" stroke="#26241f" stroke-width="0.9" />
<line x1="932.1" y1="857.0" x2="946.2" y2="863.0" stroke="#26241f" stroke-width="0.9" />
<line x1="960.7" y1="789.6" x2="974.8" y2="795.6" stroke="#26241f" stroke-width="0.9" />
<line x1="1005.9" y1="683.2" x2="1020.0" y2="689.2" stroke="#26241f" stroke-width="0.9" />
<line x1="1051.8" y1="574.9" x2="1066.0" y2="580.9" stroke="#26241f" stroke-width="0.9" />
<line x1="1097.1" y1="468.1" x2="1111.3" y2="474.1" stroke="#26241f" stroke-width="0.9" />
<line x1="1126.7" y1="398.6" x2="1140.8" y2="404.6" stroke="#26241f" stroke-width="0.9" />
</g>
<g clip-path="url(#cBeige)" stroke="#1c1a18" stroke-width="0.9">
<line x1="150.0" y1="448.3" x2="560.0" y2="621.5" stroke="#1c1a18" stroke-width="0.9" />
<line x1="150.0" y1="527.9" x2="560.0" y2="701.1" stroke="#1c1a18" stroke-width="0.9" />
<line x1="150.0" y1="607.4" x2="560.0" y2="780.6" stroke="#1c1a18" stroke-width="0.9" />
<line x1="150.0" y1="687.0" x2="560.0" y2="860.2" stroke="#1c1a18" stroke-width="0.9" />
<line x1="150.0" y1="766.6" x2="560.0" y2="939.8" stroke="#1c1a18" stroke-width="0.9" />
<line x1="150.0" y1="846.2" x2="560.0" y2="1019.3" stroke="#1c1a18" stroke-width="0.9" />
<line x1="150.0" y1="925.7" x2="560.0" y2="1098.9" stroke="#1c1a18" stroke-width="0.9" />
<line x1="150.0" y1="1005.3" x2="560.0" y2="1178.5" stroke="#1c1a18" stroke-width="0.9" />
<line x1="150.0" y1="1084.9" x2="560.0" y2="1258.1" stroke="#1c1a18" stroke-width="0.9" />
<line x1="150.0" y1="1164.4" x2="560.0" y2="1337.6" stroke="#1c1a18" stroke-width="0.9" />
<line x1="101.3" y1="600.0" x2="-93.0" y2="1060.0" stroke="#1c1a18" stroke-width="0.9" />
<line x1="180.6" y1="600.0" x2="-13.8" y2="1060.0" stroke="#1c1a18" stroke-width="0.9" />
<line x1="259.8" y1="600.0" x2="65.5" y2="1060.0" stroke="#1c1a18" stroke-width="0.9" />
<line x1="339.0" y1="600.0" x2="144.7" y2="1060.0" stroke="#1c1a18" stroke-width="0.9" />
<line x1="418.3" y1="600.0" x2="224.0" y2="1060.0" stroke="#1c1a18" stroke-width="0.9" />
<line x1="497.5" y1="600.0" x2="303.2" y2="1060.0" stroke="#1c1a18" stroke-width="0.9" />
<line x1="576.8" y1="600.0" x2="382.5" y2="1060.0" stroke="#1c1a18" stroke-width="0.9" />
<line x1="656.0" y1="600.0" x2="461.7" y2="1060.0" stroke="#1c1a18" stroke-width="0.9" />
<line x1="735.3" y1="600.0" x2="541.0" y2="1060.0" stroke="#1c1a18" stroke-width="0.9" />
</g>
<line x1="344.7" y1="627.2" x2="491.5" y2="990.5" stroke="#1c1a18" stroke-width="1" />
<polygon points="907.5,497.5 911.5,494.0 940.0,488.5 973.0,479.0 1024.2,458.1 1070.7,433.7 1117.2,407.0 1159.0,379.0 1194.0,353.5 1223.5,330.2 1224.0,329.1 1306.7,298.0 1341.5,426.0 1254.0,451.5 1151.0,479.0 1101.0,494.2 964.9,536.0 942.8,541.9" fill="url(#pBrown)" stroke="none" stroke-width="1" />
<g clip-path="url(#cBrown)" fill="none" stroke="#1a1408" stroke-width="0.8" stroke-dasharray="13 9"><path d="M940 508 Q1085 458 1236 395"/><path d="M975 523 Q1100 480 1300 398"/></g>
<polygon points="811.9,586.4 964.7,536.9 970.3,556.9 903.9,578.9 982.7,816.5 957.5,824.5 884.0,593.0 818.8,613.3" fill="url(#pWall)" stroke="#3a3a3c" stroke-width="0.9" />
<line x1="816.3" y1="606.4" x2="884.0" y2="585.3" stroke="#3a3a3c" stroke-width="0.8" />
<line x1="890.5" y1="590.5" x2="964.5" y2="821.5" stroke="#3a3a3c" stroke-width="0.8" />
<polygon points="899.5,838.0 956.0,819.5 957.5,824.5 901.0,843.5" fill="#8c8c90" stroke="#3a3a3c" stroke-width="0.8" />
<polygon points="1101.0,494.2 1151.0,479.0 1156.7,498.8 1106.7,514.0" fill="url(#pWall)" stroke="#3a3a3c" stroke-width="0.9" />
<polygon points="1216.5,314.1 1321.7,269.0 1411.9,427.8 1260.5,468.6 1254.0,451.5 1341.5,426.0 1379.7,413.9 1308.8,298.0 1306.7,298.0 1224.0,329.1" fill="url(#pWall)" stroke="#3a3a3c" stroke-width="0.9" />
<polyline points="1306.7,298.0 1341.5,426.0" fill="none" stroke="#222" stroke-width="0.8" />
<polygon points="964.9,536.0 1101.0,494.2 1106.7,514.0 970.3,556.9" fill="#fff" stroke="none" stroke-width="1" />
<line x1="964.9" y1="536.0" x2="1101.0" y2="494.2" stroke="#f0733a" stroke-width="0.8" />
<line x1="965.6" y1="538.7" x2="1101.7" y2="496.8" stroke="#f0733a" stroke-width="0.8" />
<line x1="969.0" y1="551.9" x2="1105.3" y2="509.2" stroke="#f0733a" stroke-width="0.8" />
<line x1="970.3" y1="556.9" x2="1106.7" y2="514.0" stroke="#f0733a" stroke-width="0.8" />
<line x1="964.9" y1="536.0" x2="970.3" y2="556.9" stroke="#f0733a" stroke-width="1" />
<line x1="1101.0" y1="494.2" x2="1106.7" y2="514.0" stroke="#f0733a" stroke-width="1" />
<polygon points="1151.0,479.0 1254.0,451.5 1260.5,468.6 1156.7,498.8" fill="#fff" stroke="none" stroke-width="1" />
<line x1="1151.0" y1="479.0" x2="1254.0" y2="451.5" stroke="#f0733a" stroke-width="0.8" />
<line x1="1151.7" y1="481.6" x2="1254.8" y2="453.7" stroke="#f0733a" stroke-width="0.8" />
<line x1="1155.3" y1="494.0" x2="1258.9" y2="464.5" stroke="#f0733a" stroke-width="0.8" />
<line x1="1156.7" y1="498.8" x2="1260.5" y2="468.6" stroke="#f0733a" stroke-width="0.8" />
<line x1="1151.0" y1="479.0" x2="1156.7" y2="498.8" stroke="#f0733a" stroke-width="1" />
<line x1="1254.0" y1="451.5" x2="1260.5" y2="468.6" stroke="#f0733a" stroke-width="1" />
<rect x="-4.5" y="-1.5" width="9" height="3" fill="#fff" stroke="#f0733a" stroke-width="0.8" transform="translate(1034.5 518.5) rotate(-17)"/>
<rect x="-4.5" y="-1.5" width="9" height="3" fill="#fff" stroke="#f0733a" stroke-width="0.8" transform="translate(1204 469) rotate(-15)"/>
<line x1="1025.0" y1="520.0" x2="1029.0" y2="531.0" stroke="#f0733a" stroke-width="1.2" />
<line x1="1212.0" y1="464.0" x2="1215.0" y2="473.0" stroke="#f0733a" stroke-width="1.2" />
<polygon points="380.7,1036.5 384.5,1034.9 428.9,1015.5 481.0,994.2 537.2,971.7 596.5,949.9 656.7,925.5 714.4,904.2 777.8,881.2 837.8,859.7 898.1,839.7 899.9,845.3 839.8,865.3 779.8,886.8 716.4,909.8 658.9,931.1 598.7,955.5 539.4,977.3 483.2,999.8 431.3,1021.1 386.9,1040.5 383.1,1042.1" fill="#fff" stroke="none" stroke-width="1" />
<polyline points="380.7,1036.5 384.5,1034.9 428.9,1015.5 481.0,994.2 537.2,971.7 596.5,949.9 656.7,925.5 714.4,904.2 777.8,881.2 837.8,859.7 898.1,839.7" fill="none" stroke="#f0733a" stroke-width="1.1" />
<polyline points="383.1,1042.1 386.9,1040.5 431.3,1021.1 483.2,999.8 539.4,977.3 598.7,955.5 658.9,931.1 716.4,909.8 779.8,886.8 839.8,865.3 899.9,845.3" fill="none" stroke="#f0733a" stroke-width="1.1" />
<g transform="translate(385.7 1037.7) rotate(-23.5)"><rect x="-5" y="-3.2" width="10" height="6.4" fill="#fff" stroke="#f0733a" stroke-width="1.1"/><line x1="1.5" y1="-3" x2="1.5" y2="3" stroke="#222" stroke-width="1.4"/></g>
<g transform="translate(430.1 1018.3) rotate(-22.9)"><rect x="-5" y="-3.2" width="10" height="6.4" fill="#fff" stroke="#f0733a" stroke-width="1.1"/><line x1="1.5" y1="-3" x2="1.5" y2="3" stroke="#222" stroke-width="1.4"/></g>
<g transform="translate(482.1 997.0) rotate(-22.0)"><rect x="-5" y="-3.2" width="10" height="6.4" fill="#fff" stroke="#f0733a" stroke-width="1.1"/><line x1="1.5" y1="-3" x2="1.5" y2="3" stroke="#222" stroke-width="1.4"/></g>
<g transform="translate(538.3 974.5) rotate(-21.0)"><rect x="-5" y="-3.2" width="10" height="6.4" fill="#fff" stroke="#f0733a" stroke-width="1.1"/><line x1="1.5" y1="-3" x2="1.5" y2="3" stroke="#222" stroke-width="1.4"/></g>
<g transform="translate(597.6 952.7) rotate(-21.1)"><rect x="-5" y="-3.2" width="10" height="6.4" fill="#fff" stroke="#f0733a" stroke-width="1.1"/><line x1="1.5" y1="-3" x2="1.5" y2="3" stroke="#222" stroke-width="1.4"/></g>
<g transform="translate(657.8 928.3) rotate(-21.2)"><rect x="-5" y="-3.2" width="10" height="6.4" fill="#fff" stroke="#f0733a" stroke-width="1.1"/><line x1="1.5" y1="-3" x2="1.5" y2="3" stroke="#222" stroke-width="1.4"/></g>
<g transform="translate(715.4 907.0) rotate(-20.1)"><rect x="-5" y="-3.2" width="10" height="6.4" fill="#fff" stroke="#f0733a" stroke-width="1.1"/><line x1="1.5" y1="-3" x2="1.5" y2="3" stroke="#222" stroke-width="1.4"/></g>
<g transform="translate(778.8 884.0) rotate(-19.8)"><rect x="-5" y="-3.2" width="10" height="6.4" fill="#fff" stroke="#f0733a" stroke-width="1.1"/><line x1="1.5" y1="-3" x2="1.5" y2="3" stroke="#222" stroke-width="1.4"/></g>
<g transform="translate(838.8 862.5) rotate(-19.0)"><rect x="-5" y="-3.2" width="10" height="6.4" fill="#fff" stroke="#f0733a" stroke-width="1.1"/><line x1="1.5" y1="-3" x2="1.5" y2="3" stroke="#222" stroke-width="1.4"/></g>
<g transform="translate(899.0 842.5) rotate(-19.0)"><rect x="-5" y="-3.2" width="10" height="6.4" fill="#fff" stroke="#f0733a" stroke-width="1.1"/><line x1="1.5" y1="-3" x2="1.5" y2="3" stroke="#222" stroke-width="1.4"/></g>
<polygon points="368.0,1041.0 381.0,1036.5 382.5,1040.5 369.5,1045.0" fill="#8a8a8a" stroke="#444" stroke-width="0.6" />
<polyline points="836.0,839.0 843.0,866.0" fill="none" stroke="#f0733a" stroke-width="0.8" />
<polyline points="836.0,839.0 896.0,840.0" fill="none" stroke="#f0733a" stroke-width="0.8" />
<polyline points="966.0,537.0 1015.0,504.0 1022.0,522.0" fill="none" stroke="#f0733a" stroke-width="0.8" />
<polyline points="1153.0,479.0 1202.0,449.0 1208.0,463.0" fill="none" stroke="#f0733a" stroke-width="0.8" />
<rect x="459.6" y="626.5" width="113.5" height="113.5" rx="13" fill="rgba(38,36,32,0.55)" transform="rotate(-23.0 516.4 683.2)"/>
<polygon points="623.7,706.1 643.7,711.1 685.9,822.2 637.2,841.1 619.2,833.1" fill="rgba(38,36,32,0.55)" stroke="none" stroke-width="1" />
<polygon points="800.7,453.9 819.7,457.9 831.5,495.5 738.0,532.3 721.0,520.3" fill="rgba(38,36,32,0.55)" stroke="none" stroke-width="1" />
<polygon points="536.0,768.7 550.0,771.7 569.8,828.4 556.8,834.4 559.8,858.7 526.6,873.2 514.6,866.2 546.8,853.7" fill="rgba(38,36,32,0.55)" stroke="none" stroke-width="1" />
<rect x="0" y="0" width="72.5" height="166" rx="11" fill="rgba(38,36,32,0.55)" transform="translate(693.8 673.8) rotate(-19.0)"/>
<polygon points="755.2,606.4 768.2,609.4 791.6,679.0 734.5,700.6 724.5,692.6" fill="rgba(38,36,32,0.55)" stroke="none" stroke-width="1" />
<polygon points="551.5,898.1 563.5,902.1 569.3,959.4 513.4,965.2 505.4,957.2" fill="rgba(38,36,32,0.55)" stroke="none" stroke-width="1" />
<polygon points="623.0,852.0 635.0,854.0 673.1,891.1 635.7,931.5 625.7,923.5 660.1,887.1" fill="rgba(38,36,32,0.55)" stroke="none" stroke-width="1" />
<path d="M376.7 865 C392 862 402 880 405 905 C408 930 413 955 414 975 C415 992 404 999 397 994 C385 985 365 945 352 915 C345 895 360 868 376.7 865 Z" fill="rgba(38,36,32,0.55)" transform="translate(13 6)"/>
<polygon points="1281.0,329.0 1308.0,336.0 1336.5,424.0 1288.7,444.0 1262.7,429.0 1304.5,415.0" fill="rgba(20,14,4,0.55)" stroke="none" stroke-width="1" clip-path="url(#cBrown)"/>
<polygon points="280.8,731.5 388.8,740.9 385.0,788.8 276.0,779.4" fill="#fff" stroke="#222" stroke-width="0.9" />
<line x1="371.5" y1="739.4" x2="367.6" y2="787.3" stroke="#222" stroke-width="0.8" />
<rect x="343.2" y="688.5" width="6.5" height="6.5" rx="0.0" fill="#000" stroke="none" stroke-width="1" transform="rotate(-22.00 346.5 691.7)" />
<rect x="399.1" y="827.0" width="6.5" height="6.5" rx="0.0" fill="#000" stroke="none" stroke-width="1" transform="rotate(-22.00 402.3 830.2)" />
<rect x="456.1" y="967.8" width="6.5" height="6.5" rx="0.0" fill="#000" stroke="none" stroke-width="1" transform="rotate(-22.00 459.3 971.0)" />
<path d="M376.7 865 C392 862 402 880 405 905 C408 930 413 955 414 975 C415 992 404 999 397 994 C385 985 365 945 352 915 C345 895 360 868 376.7 865 Z" fill="#fff" stroke="#222" stroke-width="0.9"/>
<line x1="377.0" y1="866.0" x2="407.0" y2="996.0" stroke="#222" stroke-width="0.7" />
<rect x="439.6" y="619.5" width="113.5" height="113.5" rx="14.0" fill="#5b80ab" stroke="#2f4f78" stroke-width="1" transform="rotate(-23.00 496.4 676.2)" />
<rect x="444.1" y="624.0" width="104.5" height="104.5" rx="11.0" fill="#9aa5cf" stroke="#3d5a8a" stroke-width="0.8" transform="rotate(-23.00 496.4 676.2)" />
<rect x="448.1" y="628.0" width="96.5" height="96.5" rx="8.0" fill="#d3d3d6" stroke="#444c66" stroke-width="0.8" transform="rotate(-23.00 496.4 676.2)" />
<polygon points="709.0,488.0 800.7,453.9 811.5,486.5 721.0,520.3" fill="#fff" stroke="#222" stroke-width="0.8" />
<g transform="translate(757 488.5) rotate(-20.4)" fill="none" stroke="#222" stroke-width="0.8"><rect x="-19" y="-11" width="38" height="22"/><rect x="-17" y="-5" width="12" height="14"/><circle cx="-7" cy="-5" r="3.6"/><circle cx="6" cy="-5.5" r="4.4"/><circle cx="6" cy="-5.5" r="2.6"/><circle cx="0" cy="5" r="4"/><circle cx="0" cy="5" r="2.4"/><circle cx="11" cy="5" r="3.8"/></g>
<polygon points="579.0,723.1 623.7,706.1 664.9,815.2 619.2,833.1" fill="#e6e6ea" stroke="#222" stroke-width="0.8" stroke-linejoin="round"/>
<g transform="translate(579 723.1) rotate(-20.8)" fill="none" stroke="#333" stroke-width="0.8"><rect x="8" y="6" width="30" height="8.5" rx="4"/><rect x="27" y="20" width="8" height="36" rx="4"/><rect x="35" y="20" width="8" height="36" rx="4"/><rect x="27" y="60" width="8" height="36" rx="4"/><rect x="35" y="60" width="8" height="36" rx="4"/></g>
<polygon points="519.0,773.2 536.0,768.7 554.8,822.4 539.6,829.6" fill="#cbb99d" stroke="none" stroke-width="1" />
<polygon points="519.0,773.2 536.0,768.7 554.8,822.4 539.6,829.6" fill="#fff" stroke="none" stroke-width="1" filter="url(#speck)" opacity="0.75"/>
<polygon points="519.0,773.2 536.0,768.7 554.8,822.4 539.6,829.6" fill="#fff" stroke="none" stroke-width="1" filter="url(#speck2)" opacity="0.7"/>
<polygon points="480.6,775.9 513.7,764.3 546.8,853.7 514.6,866.2" fill="#ece9d6" stroke="#222" stroke-width="0.8" />
<line x1="487.2" y1="773.6" x2="521.0" y2="863.7" stroke="#222" stroke-width="0.7" />
<rect x="0" y="0" width="72.5" height="166" rx="11" fill="#ece9d6" stroke="#222" stroke-width="0.9" transform="translate(680.8 667.8) rotate(-19.0)"/>
<g transform="translate(680.8 667.8) rotate(-19.0)" stroke="#222" stroke-width="0.7"><line x1="10" y1="2" x2="10" y2="164"/><line x1="54" y1="20" x2="54" y2="164"/><line x1="1" y1="62" x2="71.5" y2="62"/></g>
<polygon points="701.6,625.0 755.2,606.4 777.6,673.0 724.5,692.6" fill="#c9b9a2" stroke="none" stroke-width="1" />
<polygon points="701.6,625.0 755.2,606.4 777.6,673.0 724.5,692.6" fill="#fff" stroke="none" stroke-width="1" filter="url(#speck)" opacity="0.75"/>
<polygon points="701.6,625.0 755.2,606.4 777.6,673.0 724.5,692.6" fill="#fff" stroke="none" stroke-width="1" filter="url(#speck2)" opacity="0.7"/>
<polygon points="701.6,625.0 755.2,606.4 777.6,673.0 724.5,692.6" fill="none" stroke="#5a5040" stroke-width="0.6" />
<polygon points="499.9,902.2 551.5,898.1 556.3,952.4 505.4,957.2" fill="#e3e3e7" stroke="#222" stroke-width="0.8" />
<polygon points="623.0,852.0 660.1,887.1 625.7,923.5 587.9,888.4" fill="#e3e3e7" stroke="#222" stroke-width="0.8" />
<line x1="503.8" y1="940.7" x2="554.9" y2="936.1" stroke="#222" stroke-width="0.7" />
<line x1="504.3" y1="946.2" x2="555.3" y2="941.5" stroke="#222" stroke-width="0.7" />
<line x1="523.6" y1="900.3" x2="528.8" y2="955.0" stroke="#222" stroke-width="0.7" />
<line x1="648.2" y1="875.9" x2="613.6" y2="912.3" stroke="#222" stroke-width="0.7" />
<line x1="652.7" y1="880.1" x2="618.1" y2="916.5" stroke="#222" stroke-width="0.7" />
<line x1="605.5" y1="870.2" x2="642.9" y2="905.3" stroke="#222" stroke-width="0.7" />
<circle cx="656.8" cy="851.2" r="14.6" fill="#eeefb4" stroke="#555" stroke-width="0.7"/>
<g><circle cx="644.3" cy="825.1" r="8.5" fill="#b08a5e" stroke="#222" stroke-width="0.8"/>
<line x1="638.3" y1="819.9" x2="638.3" y2="830.3" stroke="#8a6638" stroke-width="0.7" transform="rotate(12 644.3 825.1)"/>
<line x1="641.3" y1="817.9" x2="641.3" y2="832.3" stroke="#8a6638" stroke-width="0.7" transform="rotate(12 644.3 825.1)"/>
<line x1="644.3" y1="817.4" x2="644.3" y2="832.8" stroke="#8a6638" stroke-width="0.7" transform="rotate(12 644.3 825.1)"/>
<line x1="647.3" y1="817.9" x2="647.3" y2="832.3" stroke="#8a6638" stroke-width="0.7" transform="rotate(12 644.3 825.1)"/>
<line x1="650.3" y1="819.9" x2="650.3" y2="830.3" stroke="#8a6638" stroke-width="0.7" transform="rotate(12 644.3 825.1)"/>
</g>
<g><circle cx="549.4" cy="923.5" r="8.5" fill="#b08a5e" stroke="#222" stroke-width="0.8"/>
<line x1="543.4" y1="918.3" x2="543.4" y2="928.7" stroke="#8a6638" stroke-width="0.7" transform="rotate(12 549.4 923.5)"/>
<line x1="546.4" y1="916.3" x2="546.4" y2="930.7" stroke="#8a6638" stroke-width="0.7" transform="rotate(12 549.4 923.5)"/>
<line x1="549.4" y1="915.8" x2="549.4" y2="931.2" stroke="#8a6638" stroke-width="0.7" transform="rotate(12 549.4 923.5)"/>
<line x1="552.4" y1="916.3" x2="552.4" y2="930.7" stroke="#8a6638" stroke-width="0.7" transform="rotate(12 549.4 923.5)"/>
<line x1="555.4" y1="918.3" x2="555.4" y2="928.7" stroke="#8a6638" stroke-width="0.7" transform="rotate(12 549.4 923.5)"/>
</g>
<g><circle cx="605.8" cy="900.8" r="8.5" fill="#b08a5e" stroke="#222" stroke-width="0.8"/>
<line x1="599.8" y1="895.6" x2="599.8" y2="906.0" stroke="#8a6638" stroke-width="0.7" transform="rotate(12 605.8 900.8)"/>
<line x1="602.8" y1="893.6" x2="602.8" y2="908.0" stroke="#8a6638" stroke-width="0.7" transform="rotate(12 605.8 900.8)"/>
<line x1="605.8" y1="893.1" x2="605.8" y2="908.5" stroke="#8a6638" stroke-width="0.7" transform="rotate(12 605.8 900.8)"/>
<line x1="608.8" y1="893.6" x2="608.8" y2="908.0" stroke="#8a6638" stroke-width="0.7" transform="rotate(12 605.8 900.8)"/>
<line x1="611.8" y1="895.6" x2="611.8" y2="906.0" stroke="#8a6638" stroke-width="0.7" transform="rotate(12 605.8 900.8)"/>
</g>
<g transform="translate(684.7 639.5) rotate(-19.0)" stroke="#111" fill="none">
<rect x="-11.5" y="-11.5" width="23.0" height="23.0" fill="rgba(60,58,54,0.18)" stroke-width="1.2"/>
<line x1="-8.6" y1="-10.5" x2="-8.6" y2="10.5" stroke-width="0.65"/>
<line x1="-5.8" y1="-10.5" x2="-5.8" y2="10.5" stroke-width="0.65"/>
<line x1="-2.9" y1="-10.5" x2="-2.9" y2="10.5" stroke-width="0.65"/>
<line x1="0.0" y1="-10.5" x2="0.0" y2="10.5" stroke-width="0.65"/>
<line x1="2.9" y1="-10.5" x2="2.9" y2="10.5" stroke-width="0.65"/>
<line x1="5.8" y1="-10.5" x2="5.8" y2="10.5" stroke-width="0.65"/>
<line x1="8.6" y1="-10.5" x2="8.6" y2="10.5" stroke-width="0.65"/>
<line x1="-11.5" y1="11.5" x2="11.5" y2="-11.5" stroke-width="0.7"/>
<line x1="-11.5" y1="-11.5" x2="-15.0" y2="-14.0" stroke-width="1.2"/>
<line x1="11.5" y1="-11.5" x2="15.0" y2="-14.0" stroke-width="1.2"/>
<line x1="-11.5" y1="11.5" x2="-15.0" y2="14.0" stroke-width="1.2"/>
<line x1="11.5" y1="11.5" x2="15.0" y2="14.0" stroke-width="1.2"/>
</g>
<g transform="translate(671.4 701.0) rotate(-19.0)" stroke="#111" fill="none">
<rect x="-11.5" y="-11.5" width="23.0" height="23.0" fill="rgba(60,58,54,0.18)" stroke-width="1.2"/>
<line x1="-8.6" y1="-10.5" x2="-8.6" y2="10.5" stroke-width="0.65"/>
<line x1="-5.8" y1="-10.5" x2="-5.8" y2="10.5" stroke-width="0.65"/>
<line x1="-2.9" y1="-10.5" x2="-2.9" y2="10.5" stroke-width="0.65"/>
<line x1="0.0" y1="-10.5" x2="0.0" y2="10.5" stroke-width="0.65"/>
<line x1="2.9" y1="-10.5" x2="2.9" y2="10.5" stroke-width="0.65"/>
<line x1="5.8" y1="-10.5" x2="5.8" y2="10.5" stroke-width="0.65"/>
<line x1="8.6" y1="-10.5" x2="8.6" y2="10.5" stroke-width="0.65"/>
<line x1="-11.5" y1="11.5" x2="11.5" y2="-11.5" stroke-width="0.7"/>
<line x1="-11.5" y1="-11.5" x2="-15.0" y2="-14.0" stroke-width="1.2"/>
<line x1="11.5" y1="-11.5" x2="15.0" y2="-14.0" stroke-width="1.2"/>
<line x1="-11.5" y1="11.5" x2="-15.0" y2="14.0" stroke-width="1.2"/>
<line x1="11.5" y1="11.5" x2="15.0" y2="14.0" stroke-width="1.2"/>
</g>
<g transform="translate(682.3 733.7) rotate(-19.0)" stroke="#111" fill="none">
<rect x="-11.5" y="-11.5" width="23.0" height="23.0" fill="rgba(60,58,54,0.18)" stroke-width="1.2"/>
<line x1="-8.6" y1="-10.5" x2="-8.6" y2="10.5" stroke-width="0.65"/>
<line x1="-5.8" y1="-10.5" x2="-5.8" y2="10.5" stroke-width="0.65"/>
<line x1="-2.9" y1="-10.5" x2="-2.9" y2="10.5" stroke-width="0.65"/>
<line x1="0.0" y1="-10.5" x2="0.0" y2="10.5" stroke-width="0.65"/>
<line x1="2.9" y1="-10.5" x2="2.9" y2="10.5" stroke-width="0.65"/>
<line x1="5.8" y1="-10.5" x2="5.8" y2="10.5" stroke-width="0.65"/>
<line x1="8.6" y1="-10.5" x2="8.6" y2="10.5" stroke-width="0.65"/>
<line x1="-11.5" y1="11.5" x2="11.5" y2="-11.5" stroke-width="0.7"/>
<line x1="-11.5" y1="-11.5" x2="-15.0" y2="-14.0" stroke-width="1.2"/>
<line x1="11.5" y1="-11.5" x2="15.0" y2="-14.0" stroke-width="1.2"/>
<line x1="-11.5" y1="11.5" x2="-15.0" y2="14.0" stroke-width="1.2"/>
<line x1="11.5" y1="11.5" x2="15.0" y2="14.0" stroke-width="1.2"/>
</g>
<g transform="translate(694.3 767.5) rotate(-19.0)" stroke="#111" fill="none">
<rect x="-11.5" y="-11.5" width="23.0" height="23.0" fill="rgba(60,58,54,0.18)" stroke-width="1.2"/>
<line x1="-8.6" y1="-10.5" x2="-8.6" y2="10.5" stroke-width="0.65"/>
<line x1="-5.8" y1="-10.5" x2="-5.8" y2="10.5" stroke-width="0.65"/>
<line x1="-2.9" y1="-10.5" x2="-2.9" y2="10.5" stroke-width="0.65"/>
<line x1="0.0" y1="-10.5" x2="0.0" y2="10.5" stroke-width="0.65"/>
<line x1="2.9" y1="-10.5" x2="2.9" y2="10.5" stroke-width="0.65"/>
<line x1="5.8" y1="-10.5" x2="5.8" y2="10.5" stroke-width="0.65"/>
<line x1="8.6" y1="-10.5" x2="8.6" y2="10.5" stroke-width="0.65"/>
<line x1="-11.5" y1="11.5" x2="11.5" y2="-11.5" stroke-width="0.7"/>
<line x1="-11.5" y1="-11.5" x2="-15.0" y2="-14.0" stroke-width="1.2"/>
<line x1="11.5" y1="-11.5" x2="15.0" y2="-14.0" stroke-width="1.2"/>
<line x1="-11.5" y1="11.5" x2="-15.0" y2="14.0" stroke-width="1.2"/>
<line x1="11.5" y1="11.5" x2="15.0" y2="14.0" stroke-width="1.2"/>
</g>
<g transform="translate(705.2 798.9) rotate(-19.0)" stroke="#111" fill="none">
<rect x="-11.5" y="-11.5" width="23.0" height="23.0" fill="rgba(60,58,54,0.18)" stroke-width="1.2"/>
<line x1="-8.6" y1="-10.5" x2="-8.6" y2="10.5" stroke-width="0.65"/>
<line x1="-5.8" y1="-10.5" x2="-5.8" y2="10.5" stroke-width="0.65"/>
<line x1="-2.9" y1="-10.5" x2="-2.9" y2="10.5" stroke-width="0.65"/>
<line x1="0.0" y1="-10.5" x2="0.0" y2="10.5" stroke-width="0.65"/>
<line x1="2.9" y1="-10.5" x2="2.9" y2="10.5" stroke-width="0.65"/>
<line x1="5.8" y1="-10.5" x2="5.8" y2="10.5" stroke-width="0.65"/>
<line x1="8.6" y1="-10.5" x2="8.6" y2="10.5" stroke-width="0.65"/>
<line x1="-11.5" y1="11.5" x2="11.5" y2="-11.5" stroke-width="0.7"/>
<line x1="-11.5" y1="-11.5" x2="-15.0" y2="-14.0" stroke-width="1.2"/>
<line x1="11.5" y1="-11.5" x2="15.0" y2="-14.0" stroke-width="1.2"/>
<line x1="-11.5" y1="11.5" x2="-15.0" y2="14.0" stroke-width="1.2"/>
<line x1="11.5" y1="11.5" x2="15.0" y2="14.0" stroke-width="1.2"/>
</g>
<g transform="translate(766.8 617.8) rotate(-19.0)" stroke="#111" fill="none">
<rect x="-11.5" y="-11.5" width="23.0" height="23.0" fill="rgba(60,58,54,0.18)" stroke-width="1.2"/>
<line x1="-8.6" y1="-10.5" x2="-8.6" y2="10.5" stroke-width="0.65"/>
<line x1="-5.8" y1="-10.5" x2="-5.8" y2="10.5" stroke-width="0.65"/>
<line x1="-2.9" y1="-10.5" x2="-2.9" y2="10.5" stroke-width="0.65"/>
<line x1="0.0" y1="-10.5" x2="0.0" y2="10.5" stroke-width="0.65"/>
<line x1="2.9" y1="-10.5" x2="2.9" y2="10.5" stroke-width="0.65"/>
<line x1="5.8" y1="-10.5" x2="5.8" y2="10.5" stroke-width="0.65"/>
<line x1="8.6" y1="-10.5" x2="8.6" y2="10.5" stroke-width="0.65"/>
<line x1="-11.5" y1="11.5" x2="11.5" y2="-11.5" stroke-width="0.7"/>
<line x1="-11.5" y1="-11.5" x2="-15.0" y2="-14.0" stroke-width="1.2"/>
<line x1="11.5" y1="-11.5" x2="15.0" y2="-14.0" stroke-width="1.2"/>
<line x1="-11.5" y1="11.5" x2="-15.0" y2="14.0" stroke-width="1.2"/>
<line x1="11.5" y1="11.5" x2="15.0" y2="14.0" stroke-width="1.2"/>
</g>
<g transform="translate(782.5 697.5) rotate(-19.0)" stroke="#111" fill="none">
<rect x="-11.5" y="-11.5" width="23.0" height="23.0" fill="rgba(60,58,54,0.18)" stroke-width="1.2"/>
<line x1="-8.6" y1="-10.5" x2="-8.6" y2="10.5" stroke-width="0.65"/>
<line x1="-5.8" y1="-10.5" x2="-5.8" y2="10.5" stroke-width="0.65"/>
<line x1="-2.9" y1="-10.5" x2="-2.9" y2="10.5" stroke-width="0.65"/>
<line x1="0.0" y1="-10.5" x2="0.0" y2="10.5" stroke-width="0.65"/>
<line x1="2.9" y1="-10.5" x2="2.9" y2="10.5" stroke-width="0.65"/>
<line x1="5.8" y1="-10.5" x2="5.8" y2="10.5" stroke-width="0.65"/>
<line x1="8.6" y1="-10.5" x2="8.6" y2="10.5" stroke-width="0.65"/>
<line x1="-11.5" y1="11.5" x2="11.5" y2="-11.5" stroke-width="0.7"/>
<line x1="-11.5" y1="-11.5" x2="-15.0" y2="-14.0" stroke-width="1.2"/>
<line x1="11.5" y1="-11.5" x2="15.0" y2="-14.0" stroke-width="1.2"/>
<line x1="-11.5" y1="11.5" x2="-15.0" y2="14.0" stroke-width="1.2"/>
<line x1="11.5" y1="11.5" x2="15.0" y2="14.0" stroke-width="1.2"/>
</g>
<g transform="translate(794.6 731.3) rotate(-19.0)" stroke="#111" fill="none">
<rect x="-11.5" y="-11.5" width="23.0" height="23.0" fill="rgba(60,58,54,0.18)" stroke-width="1.2"/>
<line x1="-8.6" y1="-10.5" x2="-8.6" y2="10.5" stroke-width="0.65"/>
<line x1="-5.8" y1="-10.5" x2="-5.8" y2="10.5" stroke-width="0.65"/>
<line x1="-2.9" y1="-10.5" x2="-2.9" y2="10.5" stroke-width="0.65"/>
<line x1="0.0" y1="-10.5" x2="0.0" y2="10.5" stroke-width="0.65"/>
<line x1="2.9" y1="-10.5" x2="2.9" y2="10.5" stroke-width="0.65"/>
<line x1="5.8" y1="-10.5" x2="5.8" y2="10.5" stroke-width="0.65"/>
<line x1="8.6" y1="-10.5" x2="8.6" y2="10.5" stroke-width="0.65"/>
<line x1="-11.5" y1="11.5" x2="11.5" y2="-11.5" stroke-width="0.7"/>
<line x1="-11.5" y1="-11.5" x2="-15.0" y2="-14.0" stroke-width="1.2"/>
<line x1="11.5" y1="-11.5" x2="15.0" y2="-14.0" stroke-width="1.2"/>
<line x1="-11.5" y1="11.5" x2="-15.0" y2="14.0" stroke-width="1.2"/>
<line x1="11.5" y1="11.5" x2="15.0" y2="14.0" stroke-width="1.2"/>
</g>
<g transform="translate(805.4 762.7) rotate(-19.0)" stroke="#111" fill="none">
<rect x="-11.5" y="-11.5" width="23.0" height="23.0" fill="rgba(60,58,54,0.18)" stroke-width="1.2"/>
<line x1="-8.6" y1="-10.5" x2="-8.6" y2="10.5" stroke-width="0.65"/>
<line x1="-5.8" y1="-10.5" x2="-5.8" y2="10.5" stroke-width="0.65"/>
<line x1="-2.9" y1="-10.5" x2="-2.9" y2="10.5" stroke-width="0.65"/>
<line x1="0.0" y1="-10.5" x2="0.0" y2="10.5" stroke-width="0.65"/>
<line x1="2.9" y1="-10.5" x2="2.9" y2="10.5" stroke-width="0.65"/>
<line x1="5.8" y1="-10.5" x2="5.8" y2="10.5" stroke-width="0.65"/>
<line x1="8.6" y1="-10.5" x2="8.6" y2="10.5" stroke-width="0.65"/>
<line x1="-11.5" y1="11.5" x2="11.5" y2="-11.5" stroke-width="0.7"/>
<line x1="-11.5" y1="-11.5" x2="-15.0" y2="-14.0" stroke-width="1.2"/>
<line x1="11.5" y1="-11.5" x2="15.0" y2="-14.0" stroke-width="1.2"/>
<line x1="-11.5" y1="11.5" x2="-15.0" y2="14.0" stroke-width="1.2"/>
<line x1="11.5" y1="11.5" x2="15.0" y2="14.0" stroke-width="1.2"/>
</g>
<g transform="translate(789.7 829.1) rotate(-19.0)" stroke="#111" fill="none">
<rect x="-11.5" y="-11.5" width="23.0" height="23.0" fill="rgba(60,58,54,0.18)" stroke-width="1.2"/>
<line x1="-8.6" y1="-10.5" x2="-8.6" y2="10.5" stroke-width="0.65"/>
<line x1="-5.8" y1="-10.5" x2="-5.8" y2="10.5" stroke-width="0.65"/>
<line x1="-2.9" y1="-10.5" x2="-2.9" y2="10.5" stroke-width="0.65"/>
<line x1="0.0" y1="-10.5" x2="0.0" y2="10.5" stroke-width="0.65"/>
<line x1="2.9" y1="-10.5" x2="2.9" y2="10.5" stroke-width="0.65"/>
<line x1="5.8" y1="-10.5" x2="5.8" y2="10.5" stroke-width="0.65"/>
<line x1="8.6" y1="-10.5" x2="8.6" y2="10.5" stroke-width="0.65"/>
<line x1="-11.5" y1="11.5" x2="11.5" y2="-11.5" stroke-width="0.7"/>
<line x1="-11.5" y1="-11.5" x2="-15.0" y2="-14.0" stroke-width="1.2"/>
<line x1="11.5" y1="-11.5" x2="15.0" y2="-14.0" stroke-width="1.2"/>
<line x1="-11.5" y1="11.5" x2="-15.0" y2="14.0" stroke-width="1.2"/>
<line x1="11.5" y1="11.5" x2="15.0" y2="14.0" stroke-width="1.2"/>
</g>
<g transform="translate(417.4 908.0) rotate(-17.0)" stroke="#111" fill="none">
<rect x="-10.5" y="-10.5" width="21.0" height="21.0" fill="rgba(60,58,54,0.18)" stroke-width="1.2"/>
<line x1="-7.9" y1="-9.5" x2="-7.9" y2="9.5" stroke-width="0.65"/>
<line x1="-5.2" y1="-9.5" x2="-5.2" y2="9.5" stroke-width="0.65"/>
<line x1="-2.6" y1="-9.5" x2="-2.6" y2="9.5" stroke-width="0.65"/>
<line x1="0.0" y1="-9.5" x2="0.0" y2="9.5" stroke-width="0.65"/>
<line x1="2.6" y1="-9.5" x2="2.6" y2="9.5" stroke-width="0.65"/>
<line x1="5.2" y1="-9.5" x2="5.2" y2="9.5" stroke-width="0.65"/>
<line x1="7.9" y1="-9.5" x2="7.9" y2="9.5" stroke-width="0.65"/>
<line x1="-10.5" y1="10.5" x2="10.5" y2="-10.5" stroke-width="0.7"/>
<line x1="-10.5" y1="-10.5" x2="-14.0" y2="-13.0" stroke-width="1.2"/>
<line x1="10.5" y1="-10.5" x2="14.0" y2="-13.0" stroke-width="1.2"/>
<line x1="-10.5" y1="10.5" x2="-14.0" y2="13.0" stroke-width="1.2"/>
<line x1="10.5" y1="10.5" x2="14.0" y2="13.0" stroke-width="1.2"/>
</g>
<g transform="translate(430.0 943.0) rotate(-17.0)" stroke="#111" fill="none">
<rect x="-10.5" y="-10.5" width="21.0" height="21.0" fill="rgba(60,58,54,0.18)" stroke-width="1.2"/>
<line x1="-7.9" y1="-9.5" x2="-7.9" y2="9.5" stroke-width="0.65"/>
<line x1="-5.2" y1="-9.5" x2="-5.2" y2="9.5" stroke-width="0.65"/>
<line x1="-2.6" y1="-9.5" x2="-2.6" y2="9.5" stroke-width="0.65"/>
<line x1="0.0" y1="-9.5" x2="0.0" y2="9.5" stroke-width="0.65"/>
<line x1="2.6" y1="-9.5" x2="2.6" y2="9.5" stroke-width="0.65"/>
<line x1="5.2" y1="-9.5" x2="5.2" y2="9.5" stroke-width="0.65"/>
<line x1="7.9" y1="-9.5" x2="7.9" y2="9.5" stroke-width="0.65"/>
<line x1="-10.5" y1="10.5" x2="10.5" y2="-10.5" stroke-width="0.7"/>
<line x1="-10.5" y1="-10.5" x2="-14.0" y2="-13.0" stroke-width="1.2"/>
<line x1="10.5" y1="-10.5" x2="14.0" y2="-13.0" stroke-width="1.2"/>
<line x1="-10.5" y1="10.5" x2="-14.0" y2="13.0" stroke-width="1.2"/>
<line x1="10.5" y1="10.5" x2="14.0" y2="13.0" stroke-width="1.2"/>
</g>
<g stroke="#111" stroke-width="1" fill="#fff" stroke-linejoin="miter">
<circle cx="378.3" cy="647.5" r="12.5" stroke="none"/>
<polygon points="379.0,648.5 379.5,654.4 381.8,655.3 381.9,658.9 384.6,659.5 385.3,662.7 387.7,663.2 388.7,665.9 390.5,666.1 393.0,668.0 392.0,665.0 392.4,663.2 390.1,661.4 390.5,659.0 387.6,657.3 388.0,654.5 384.5,653.3 384.4,650.9"/>
<polygon points="378.7,648.6 377.7,654.1 379.5,655.4 378.6,658.8 381.0,660.0 380.8,663.1 382.9,664.1 383.1,666.8 384.7,667.5 386.5,669.9 386.4,666.9 387.1,665.3 385.6,663.1 386.5,661.0 384.3,658.8 385.4,656.3 382.5,654.3 383.0,652.1"/>
<polygon points="378.1,648.7 374.4,653.1 375.4,655.3 372.9,657.9 374.4,660.1 372.7,662.9 374.1,664.8 372.9,667.4 374.0,668.8 374.5,671.9 375.9,669.1 377.3,668.1 377.0,665.3 378.9,663.8 378.1,660.7 380.2,659.0 378.7,655.8 380.3,654.1"/>
<polygon points="377.6,648.3 372.8,649.9 372.5,652.0 369.5,652.8 369.6,655.2 367.0,656.5 367.2,658.6 365.1,660.0 365.3,661.5 364.2,664.0 366.5,662.6 368.1,662.5 369.1,660.3 371.2,660.1 372.1,657.3 374.4,657.1 374.8,653.9 376.8,653.3"/>
<polygon points="377.3,648.3 371.3,648.9 370.5,651.2 366.8,651.4 366.3,654.1 363.0,654.9 362.6,657.4 359.9,658.4 359.7,660.3 357.8,662.9 360.8,661.8 362.7,662.1 364.5,659.8 366.9,660.1 368.6,657.2 371.4,657.5 372.6,654.0 375.0,653.8"/>
<polygon points="377.0,647.6 371.8,644.9 369.9,646.4 366.7,644.6 364.8,646.6 361.7,645.5 360.1,647.3 357.2,646.8 356.1,648.2 353.1,649.4 356.2,650.1 357.6,651.3 360.3,650.4 362.2,651.9 365.1,650.4 367.2,652.1 370.1,649.8 372.2,651.0"/>
<polygon points="377.2,647.2 373.3,643.3 371.1,644.1 368.9,641.5 366.6,642.7 364.2,640.9 362.2,642.0 359.8,640.7 358.4,641.6 355.4,641.8 358.0,643.3 358.8,644.8 361.5,644.7 362.7,646.7 365.7,646.2 367.1,648.4 370.4,647.2 371.9,648.8"/>
<polygon points="377.6,646.6 377.0,641.4 375.0,640.7 374.8,637.5 372.3,637.1 371.6,634.2 369.4,633.9 368.5,631.5 366.8,631.4 364.5,629.8 365.5,632.4 365.3,634.0 367.3,635.6 367.1,637.7 369.7,639.1 369.4,641.6 372.6,642.6 372.7,644.7"/>
<polygon points="378.1,646.2 380.4,640.6 378.8,638.8 380.5,635.4 378.2,633.6 379.1,630.3 377.1,628.8 377.5,625.8 376.0,624.7 374.6,621.8 374.0,625.0 372.9,626.5 374.1,629.2 372.6,631.3 374.4,634.2 372.8,636.5 375.3,639.3 374.3,641.5"/>
<polygon points="378.3,646.4 381.0,642.2 380.0,640.5 381.8,638.0 380.2,636.2 381.4,633.7 380.0,632.1 380.8,629.8 379.7,628.7 378.9,626.1 378.1,628.7 376.9,629.7 377.5,632.1 376.0,633.5 377.0,636.1 375.4,637.8 377.1,640.4 375.9,642.1"/>
<polygon points="379.1,646.4 384.7,644.1 384.8,641.6 388.4,640.3 388.1,637.5 391.0,635.7 390.7,633.2 393.0,631.4 392.7,629.5 393.8,626.4 391.1,628.3 389.2,628.6 388.2,631.4 385.7,631.8 384.9,635.1 382.1,635.7 382.0,639.5 379.6,640.4"/>
<polygon points="379.3,646.9 384.5,646.9 385.4,645.0 388.7,645.2 389.3,642.9 392.3,642.5 392.8,640.4 395.3,639.7 395.6,638.1 397.5,636.0 394.8,636.7 393.2,636.2 391.5,638.1 389.3,637.6 387.6,640.0 385.2,639.5 383.9,642.4 381.7,642.3"/>
<polygon points="379.4,647.4 383.8,649.6 385.5,648.4 388.1,650.0 389.7,648.2 392.4,649.1 393.8,647.6 396.2,648.1 397.1,646.8 399.6,645.9 397.0,645.2 395.9,644.2 393.6,645.0 392.0,643.7 389.5,645.0 387.7,643.6 385.2,645.5 383.4,644.5"/>
<polygon points="379.4,647.9 383.0,652.0 385.2,651.4 387.3,654.1 389.6,653.0 391.9,655.0 394.0,654.0 396.3,655.5 397.8,654.7 400.7,654.7 398.3,653.0 397.6,651.5 394.9,651.4 393.8,649.3 390.7,649.6 389.5,647.4 386.2,648.4 384.8,646.6"/>
<polygon points="377.4,647.6 373.6,645.6 372.3,646.8 369.9,645.3 368.7,647.0 366.4,646.2 365.3,647.7 363.3,647.3 362.5,648.4 360.4,649.4 362.7,650.0 363.7,650.9 365.6,650.1 367.0,651.3 369.0,650.0 370.6,651.4 372.6,649.5 374.1,650.4"/>
<polygon points="377.4,647.1 375.0,643.2 373.2,643.7 371.8,641.1 369.7,642.0 368.1,640.1 366.3,640.9 364.7,639.4 363.4,640.1 360.9,639.9 362.7,641.6 363.1,643.0 365.3,643.2 365.9,645.1 368.5,645.0 369.2,647.0 372.0,646.3 372.9,648.0"/>
<polygon points="377.8,646.8 377.7,642.7 376.1,642.1 376.2,639.5 374.3,639.3 373.9,637.0 372.2,636.8 371.5,634.9 370.2,634.8 368.4,633.5 369.0,635.6 368.7,636.9 370.3,638.1 369.9,639.8 371.9,640.9 371.5,642.9 374.0,643.6 373.9,645.3"/>
<polygon points="378.4,646.5 381.3,642.9 380.2,641.2 382.2,639.1 380.7,637.4 382.0,635.2 380.6,633.7 381.4,631.6 380.4,630.6 379.7,628.2 378.7,630.5 377.5,631.3 378.0,633.5 376.4,634.8 377.4,637.2 375.7,638.6 377.3,641.0 376.0,642.5"/>
<polygon points="378.8,646.7 382.7,644.9 382.5,643.2 385.0,642.2 384.4,640.2 386.4,638.9 385.9,637.1 387.4,635.8 387.0,634.5 387.4,632.2 385.7,633.7 384.3,633.9 383.8,635.9 382.0,636.3 381.8,638.6 379.8,639.1 380.1,641.8 378.5,642.4"/>
<polygon points="379.2,647.1 384.1,648.1 385.2,646.3 388.2,647.1 389.0,644.8 391.8,645.0 392.5,643.0 394.9,642.7 395.3,641.2 397.3,639.4 394.6,639.6 393.2,638.8 391.4,640.4 389.5,639.5 387.7,641.6 385.5,640.6 383.9,643.4 381.9,642.9"/>
<polygon points="379.2,647.4 383.2,649.3 384.5,648.0 386.9,649.4 388.2,647.7 390.5,648.4 391.6,646.9 393.7,647.2 394.4,646.0 396.5,644.9 394.2,644.4 393.2,643.5 391.2,644.4 389.8,643.2 387.7,644.6 386.1,643.2 384.1,645.2 382.5,644.4"/>
<polygon points="379.1,648.0 381.1,652.5 383.1,652.3 384.1,655.2 386.4,654.6 387.8,656.9 389.8,656.3 391.2,658.1 392.7,657.6 395.2,658.2 393.6,656.2 393.4,654.6 391.2,654.0 390.8,652.0 388.2,651.7 387.7,649.4 384.7,649.7 384.0,647.9"/>
<polygon points="378.7,648.4 377.9,652.8 379.5,653.7 378.8,656.5 380.9,657.2 380.8,659.7 382.7,660.4 382.9,662.5 384.3,662.9 386.0,664.6 385.8,662.3 386.4,660.9 385.0,659.3 385.8,657.5 383.8,655.9 384.7,653.9 382.1,652.6 382.5,650.7"/>
<polygon points="378.2,648.5 375.3,652.2 376.3,653.9 374.3,656.2 375.9,657.9 374.5,660.1 375.9,661.6 375.1,663.8 376.2,664.8 376.9,667.3 377.9,665.0 379.1,664.0 378.6,661.8 380.2,660.6 379.2,658.1 381.0,656.6 379.3,654.1 380.6,652.6"/>
<polygon points="377.9,648.4 373.8,650.8 374.2,652.7 371.6,654.0 372.4,656.1 370.4,657.8 371.2,659.6 369.7,661.3 370.3,662.7 370.1,665.1 371.8,663.4 373.3,663.0 373.6,660.8 375.5,660.2 375.4,657.5 377.6,656.8 376.9,654.0 378.6,653.0"/>
<polygon points="377.4,647.9 372.5,647.1 371.5,648.9 368.4,648.2 367.7,650.5 364.9,650.5 364.3,652.5 362.0,652.8 361.5,654.4 359.7,656.2 362.3,655.9 363.7,656.6 365.5,655.0 367.5,655.8 369.2,653.7 371.4,654.6 372.8,651.8 374.8,652.2"/>
<polygon points="377.7,647.5 375.5,645.3 374.5,646.1 373.2,644.6 372.1,645.8 370.8,644.9 369.9,646.0 368.6,645.4 368.0,646.2 366.5,646.8 367.9,647.5 368.4,648.5 369.8,648.0 370.5,649.3 372.0,648.4 372.9,649.8 374.3,648.4 375.2,649.4"/>
<polygon points="377.7,647.1 377.0,643.4 375.5,643.6 375.2,641.2 373.3,641.8 372.7,639.9 371.0,640.4 370.2,639.0 369.0,639.4 367.2,639.0 368.1,640.6 368.0,641.9 369.5,642.4 369.5,644.1 371.5,644.2 371.4,646.1 373.8,645.8 374.0,647.3"/>
<polygon points="378.2,646.9 379.9,644.1 378.8,643.3 380.0,641.6 378.5,640.9 379.2,639.3 377.9,638.7 378.2,637.3 377.2,636.8 376.3,635.5 375.8,637.0 375.0,637.8 375.8,639.0 374.7,640.1 375.9,641.4 374.7,642.5 376.4,643.7 375.7,644.9"/>
<polygon points="378.7,646.9 382.2,645.9 381.9,644.4 384.2,643.9 383.5,642.2 385.3,641.4 384.6,639.8 386.0,638.9 385.4,637.7 385.7,635.9 384.2,636.9 382.9,636.9 382.6,638.5 381.0,638.6 381.0,640.6 379.1,640.7 379.6,643.0 378.1,643.3"/>
<polygon points="378.9,647.3 382.0,648.8 382.7,647.6 384.6,648.7 385.2,647.1 386.9,647.6 387.5,646.2 389.0,646.3 389.3,645.2 390.6,644.2 389.0,643.9 388.1,643.1 386.9,644.0 385.7,643.0 384.5,644.4 383.1,643.3 382.0,645.2 380.8,644.5"/>
<polygon points="378.9,647.7 380.6,650.8 381.9,650.3 382.8,652.3 384.3,651.3 385.4,652.8 386.7,651.9 387.9,653.0 388.9,652.3 390.6,652.2 389.4,650.9 389.1,649.7 387.6,649.8 387.2,648.2 385.3,648.6 384.9,646.9 382.8,647.8 382.2,646.5"/>
<polygon points="378.6,648.1 377.5,651.4 378.8,652.0 378.0,654.1 379.7,654.5 379.4,656.3 381.0,656.7 381.1,658.2 382.2,658.4 383.5,659.6 383.6,657.9 384.2,656.9 383.1,655.8 384.0,654.4 382.4,653.3 383.3,651.8 381.2,651.0 381.7,649.6"/>
<polygon points="378.2,648.1 375.5,650.3 376.3,651.5 374.4,652.8 375.7,654.1 374.4,655.5 375.5,656.6 374.7,657.9 375.6,658.7 376.0,660.4 377.0,659.0 378.1,658.5 377.8,657.0 379.2,656.3 378.5,654.6 380.1,653.8 378.8,652.0 380.0,651.1"/>
<polygon points="377.9,647.9 374.8,648.2 374.8,649.5 372.7,649.5 373.0,651.1 371.4,651.5 371.7,652.9 370.4,653.5 370.6,654.6 370.1,656.0 371.6,655.5 372.6,655.7 373.2,654.4 374.6,654.6 374.9,652.9 376.5,653.1 376.5,651.1 377.8,651.1"/>
</g>
<g stroke="#111" stroke-width="1" fill="#fff" stroke-linejoin="miter">
<circle cx="434.5" cy="617.1" r="12.5" stroke="none"/>
<polygon points="435.6,616.9 440.2,618.9 441.7,617.5 444.6,618.9 446.0,617.0 448.8,617.8 450.0,616.1 452.5,616.4 453.4,615.2 455.8,614.0 453.1,613.6 451.9,612.6 449.7,613.6 448.0,612.4 445.6,613.9 443.6,612.5 441.3,614.6 439.5,613.8"/>
<polygon points="435.8,617.2 440.8,620.5 442.9,619.2 445.9,621.5 448.0,619.6 451.0,621.1 452.9,619.5 455.7,620.4 457.0,619.1 460.1,618.3 457.1,617.2 455.9,615.8 453.0,616.4 451.3,614.6 448.2,615.8 446.2,613.8 443.0,615.8 441.0,614.3"/>
<polygon points="435.5,617.9 437.4,623.3 439.7,623.6 440.7,627.1 443.4,626.9 444.9,629.8 447.3,629.6 448.9,631.9 450.7,631.7 453.6,632.8 451.9,630.2 451.8,628.4 449.2,627.3 448.9,624.9 445.8,624.0 445.5,621.3 441.9,621.0 441.2,618.7"/>
<polygon points="435.2,618.1 435.3,623.8 437.4,624.8 437.2,628.4 439.8,629.0 440.3,632.2 442.6,632.8 443.4,635.4 445.2,635.8 447.5,637.8 446.7,634.8 447.2,633.1 445.1,631.2 445.6,628.9 442.9,627.1 443.5,624.5 440.2,623.0 440.2,620.7"/>
<polygon points="434.5,618.3 431.7,623.2 433.0,625.2 431.1,628.1 433.0,630.0 431.8,633.0 433.4,634.6 432.8,637.3 434.1,638.5 435.1,641.4 435.9,638.5 437.1,637.2 436.4,634.6 438.0,632.8 436.6,629.9 438.4,627.9 436.3,625.1 437.6,623.1"/>
<polygon points="434.2,618.2 430.1,621.9 430.8,624.1 428.1,626.2 429.2,628.5 427.2,630.9 428.3,632.9 426.9,635.2 427.7,636.7 427.7,639.6 429.4,637.2 430.9,636.4 431.0,633.7 433.0,632.6 432.6,629.5 434.8,628.2 433.8,625.0 435.5,623.5"/>
<polygon points="433.6,618.0 427.9,619.2 427.3,621.6 423.7,622.1 423.6,624.9 420.5,626.0 420.4,628.4 417.9,629.8 417.9,631.6 416.3,634.4 419.2,633.0 421.0,633.1 422.5,630.6 424.9,630.6 426.2,627.6 428.9,627.6 429.7,624.0 432.0,623.6"/>
<polygon points="433.2,617.3 427.6,614.8 425.7,616.5 422.3,614.7 420.5,617.0 417.2,616.0 415.6,618.0 412.6,617.6 411.5,619.1 408.5,620.5 411.7,621.1 413.2,622.3 416.0,621.1 418.0,622.6 421.0,620.9 423.3,622.5 426.1,620.0 428.4,621.1"/>
<polygon points="433.3,616.9 429.2,613.2 427.1,614.1 424.7,611.7 422.5,613.1 420.0,611.4 418.1,612.6 415.6,611.5 414.3,612.5 411.3,612.8 413.9,614.2 414.9,615.6 417.5,615.4 418.9,617.3 421.9,616.6 423.4,618.6 426.6,617.3 428.2,618.8"/>
<polygon points="433.6,616.5 431.3,612.1 429.2,612.2 427.9,609.3 425.6,609.8 424.0,607.5 422.0,608.0 420.3,606.2 418.8,606.6 416.2,605.9 418.0,607.9 418.3,609.5 420.7,610.1 421.2,612.2 424.0,612.5 424.6,614.8 427.7,614.6 428.6,616.5"/>
<polygon points="433.8,616.2 433.2,610.7 431.1,609.9 430.9,606.4 428.4,606.0 427.6,603.0 425.4,602.6 424.4,600.1 422.7,599.9 420.2,598.2 421.2,601.0 421.0,602.7 423.1,604.3 422.8,606.6 425.5,608.1 425.2,610.7 428.5,611.8 428.7,614.1"/>
<polygon points="434.4,615.9 436.6,611.0 435.2,609.3 436.8,606.3 434.9,604.7 435.8,601.8 434.1,600.3 434.5,597.7 433.1,596.7 432.0,594.0 431.4,596.9 430.3,598.2 431.3,600.6 429.9,602.4 431.4,605.0 429.9,607.1 432.1,609.6 431.1,611.6"/>
<polygon points="435.1,616.1 440.0,613.3 439.8,611.0 442.9,609.4 442.3,606.9 444.8,605.0 444.2,602.7 446.1,600.8 445.6,599.1 446.3,596.2 444.1,598.2 442.4,598.7 441.7,601.3 439.5,602.0 439.2,605.1 436.6,605.9 437.0,609.4 434.9,610.5"/>
<polygon points="435.4,616.4 440.5,615.5 441.1,613.4 444.4,613.1 444.6,610.6 447.5,609.7 447.7,607.6 450.0,606.5 450.1,604.8 451.6,602.4 449.0,603.6 447.3,603.4 445.9,605.5 443.7,605.4 442.4,608.1 440.0,607.9 439.1,611.1 437.0,611.4"/>
<polygon points="435.4,617.2 438.6,619.9 440.1,619.0 442.1,620.8 443.6,619.5 445.6,620.7 447.0,619.5 448.8,620.3 449.8,619.3 452.0,618.8 450.0,617.9 449.2,616.7 447.2,617.1 446.1,615.7 443.9,616.5 442.7,614.9 440.4,616.3 439.1,615.1"/>
<polygon points="435.3,617.8 436.8,622.7 438.9,622.7 439.7,625.9 442.1,625.5 443.3,628.1 445.5,627.8 446.9,629.8 448.5,629.5 451.0,630.4 449.6,628.1 449.6,626.4 447.3,625.5 447.2,623.3 444.4,622.7 444.2,620.3 441.0,620.2 440.4,618.2"/>
<polygon points="434.8,617.9 433.6,622.1 435.1,623.1 434.2,625.6 436.0,626.5 435.7,628.9 437.4,629.6 437.4,631.7 438.7,632.2 440.1,634.0 440.2,631.7 440.9,630.5 439.7,628.9 440.6,627.2 438.9,625.6 439.9,623.7 437.6,622.2 438.2,620.6"/>
<polygon points="434.2,618.1 430.5,621.3 431.2,623.2 428.7,625.0 430.0,627.0 428.2,629.1 429.3,630.9 428.0,632.8 428.9,634.1 429.1,636.7 430.6,634.6 432.0,633.9 432.0,631.6 433.8,630.6 433.3,628.0 435.4,626.8 434.2,624.0 435.8,622.7"/>
<polygon points="433.8,617.9 428.9,619.0 428.7,621.1 425.6,621.6 425.7,624.0 423.1,625.0 423.3,627.2 421.2,628.4 421.5,630.0 420.4,632.4 422.8,631.2 424.4,631.2 425.4,629.1 427.6,629.1 428.3,626.4 430.8,626.4 431.0,623.2 433.1,622.8"/>
<polygon points="433.5,617.4 428.8,615.9 427.6,617.6 424.7,616.5 423.7,618.6 421.0,618.1 420.1,620.0 417.8,620.0 417.1,621.5 415.1,623.0 417.6,623.1 419.0,624.0 420.9,622.7 422.7,623.7 424.7,621.9 426.8,623.1 428.5,620.5 430.4,621.2"/>
<polygon points="433.4,617.0 429.6,613.7 427.7,614.8 425.4,612.5 423.6,614.1 421.2,612.6 419.5,614.1 417.3,613.1 416.1,614.2 413.5,614.9 415.9,616.0 416.8,617.4 419.2,616.9 420.5,618.7 423.2,617.7 424.7,619.7 427.4,618.0 428.9,619.4"/>
<polygon points="433.9,616.5 433.2,612.2 431.5,611.9 431.2,609.3 429.1,609.3 428.4,607.0 426.6,607.0 425.7,605.2 424.3,605.3 422.3,604.3 423.3,606.3 423.1,607.7 424.9,608.7 424.7,610.5 427.0,611.3 426.8,613.4 429.5,613.8 429.7,615.5"/>
<polygon points="434.2,616.1 435.6,611.5 434.0,610.3 435.1,607.5 433.0,606.5 433.5,603.8 431.6,602.9 431.6,600.6 430.2,600.0 428.6,598.0 428.5,600.5 427.7,601.8 429.0,603.7 427.9,605.5 429.8,607.5 428.6,609.5 431.1,611.2 430.4,613.1"/>
<polygon points="434.6,616.1 437.8,612.7 436.8,611.0 438.9,609.0 437.5,607.2 439.0,605.1 437.7,603.6 438.6,601.6 437.6,600.5 437.1,598.1 436.0,600.2 434.8,601.0 435.1,603.2 433.5,604.3 434.3,606.8 432.5,608.1 433.9,610.6 432.6,612.0"/>
<polygon points="435.1,616.3 440.0,614.8 440.0,612.7 443.1,611.9 442.8,609.5 445.3,608.3 445.0,606.2 446.9,604.8 446.6,603.3 447.5,600.7 445.2,602.1 443.6,602.2 442.7,604.4 440.6,604.6 440.0,607.3 437.6,607.5 437.5,610.7 435.5,611.2"/>
<polygon points="435.5,616.7 440.3,617.8 441.4,616.1 444.4,617.0 445.2,614.8 448.0,615.0 448.7,613.0 451.1,612.8 451.6,611.3 453.6,609.6 451.0,609.7 449.6,608.9 447.7,610.4 445.8,609.5 444.0,611.5 441.8,610.5 440.2,613.2 438.3,612.6"/>
<polygon points="434.0,617.6 430.2,617.9 430.2,619.5 427.8,619.5 428.1,621.5 426.1,621.9 426.5,623.6 424.9,624.3 425.2,625.6 424.6,627.4 426.3,626.7 427.6,626.9 428.3,625.4 430.0,625.6 430.4,623.6 432.3,623.9 432.2,621.5 433.8,621.4"/>
<polygon points="433.9,617.3 430.7,615.6 429.9,616.8 428.0,615.6 427.3,617.3 425.5,616.7 424.9,618.2 423.3,617.9 422.9,619.1 421.5,620.2 423.3,620.5 424.1,621.4 425.4,620.5 426.6,621.5 428.0,620.2 429.3,621.3 430.5,619.4 431.8,620.2"/>
<polygon points="433.9,616.7 433.0,613.1 431.5,613.4 431.1,611.1 429.3,611.7 428.6,609.9 427.0,610.5 426.1,609.1 424.9,609.6 423.2,609.3 424.1,610.8 424.1,612.1 425.6,612.5 425.7,614.1 427.6,614.2 427.7,616.1 430.0,615.6 430.3,617.1"/>
<polygon points="434.3,616.5 435.3,613.4 434.0,612.9 434.8,610.9 433.2,610.6 433.5,608.8 432.0,608.5 432.0,607.0 430.9,606.8 429.7,605.7 429.7,607.4 429.0,608.3 430.0,609.3 429.3,610.6 430.7,611.6 429.8,613.0 431.8,613.8 431.3,615.1"/>
<polygon points="434.7,616.4 437.7,614.4 436.9,613.1 438.9,611.9 437.8,610.4 439.2,609.1 438.1,607.8 439.1,606.5 438.2,605.6 437.9,603.8 436.8,605.2 435.6,605.6 435.8,607.2 434.2,607.8 434.8,609.7 433.1,610.4 434.3,612.4 433.0,613.2"/>
<polygon points="435.1,616.7 438.9,616.9 439.1,615.3 441.5,615.6 441.4,613.6 443.5,613.4 443.4,611.7 445.0,611.2 444.9,609.9 445.7,608.2 443.9,608.7 442.6,608.2 441.8,609.7 440.1,609.2 439.5,611.2 437.6,610.6 437.3,613.1 435.7,612.9"/>
<polygon points="435.2,617.1 437.9,619.8 439.1,618.8 440.7,620.6 442.0,619.1 443.6,620.3 444.7,619.0 446.3,619.7 447.0,618.6 448.8,617.9 447.1,617.1 446.5,615.9 444.9,616.4 443.9,615.0 442.2,616.0 441.1,614.3 439.3,616.0 438.2,614.8"/>
<polygon points="435.0,617.6 435.3,621.4 436.9,621.4 437.0,623.9 438.9,623.6 439.4,625.6 441.1,625.3 441.8,626.8 443.1,626.5 444.9,627.2 444.2,625.4 444.4,624.1 442.9,623.4 443.1,621.7 441.1,621.3 441.4,619.3 438.9,619.4 438.9,617.8"/>
<polygon points="434.5,617.8 432.1,620.3 433.1,621.4 431.5,623.0 432.9,624.0 431.9,625.6 433.2,626.5 432.6,628.0 433.6,628.7 434.3,630.2 435.0,628.7 436.1,628.0 435.5,626.6 436.8,625.7 435.8,624.1 437.3,623.1 435.7,621.5 436.8,620.4"/>
</g>
<g stroke="#111" stroke-width="1" fill="#fff" stroke-linejoin="miter">
<circle cx="486.3" cy="595.8" r="12.5" stroke="none"/>
<polygon points="486.4,597.0 483.9,601.8 485.2,603.5 483.5,606.4 485.3,608.2 484.3,611.0 486.0,612.6 485.4,615.1 486.7,616.2 487.8,618.9 488.5,616.1 489.6,614.9 488.7,612.4 490.2,610.7 488.8,608.0 490.4,606.0 488.3,603.3 489.4,601.4"/>
<polygon points="485.8,596.9 481.2,600.3 481.6,602.6 478.6,604.5 479.5,607.0 477.2,609.2 478.0,611.5 476.3,613.7 477.0,615.3 476.7,618.4 478.7,616.0 480.3,615.4 480.7,612.6 482.9,611.7 482.9,608.5 485.3,607.4 484.6,603.9 486.6,602.6"/>
<polygon points="485.6,596.6 480.9,598.3 480.7,600.3 477.7,601.2 477.9,603.5 475.4,604.7 475.5,606.8 473.5,608.2 473.7,609.7 472.7,612.2 475.0,610.8 476.5,610.7 477.5,608.4 479.6,608.2 480.3,605.5 482.7,605.2 482.9,602.1 484.9,601.5"/>
<polygon points="485.2,596.0 480.2,594.3 478.7,595.8 475.7,594.5 474.2,596.5 471.3,595.9 470.1,597.7 467.5,597.5 466.6,598.9 464.1,600.3 467.0,600.6 468.3,601.5 470.6,600.4 472.5,601.5 474.9,599.8 477.0,601.1 479.3,598.8 481.3,599.6"/>
<polygon points="485.0,595.7 479.9,592.2 477.7,593.4 474.7,591.0 472.4,592.9 469.4,591.3 467.4,592.9 464.5,591.9 463.1,593.2 459.9,594.0 463.0,595.2 464.2,596.7 467.2,596.1 468.9,598.0 472.2,596.8 474.1,598.9 477.5,597.0 479.5,598.5"/>
<polygon points="485.2,595.1 482.7,589.7 480.2,589.7 478.8,586.2 476.1,586.7 474.2,583.8 471.8,584.3 469.9,582.1 468.1,582.5 465.0,581.6 467.0,584.1 467.3,585.9 470.1,586.8 470.6,589.3 473.9,589.9 474.6,592.6 478.3,592.5 479.3,594.8"/>
<polygon points="485.7,594.7 485.7,589.0 483.6,588.0 483.9,584.4 481.3,583.6 480.9,580.4 478.6,579.8 477.8,577.1 476.1,576.7 473.8,574.6 474.5,577.6 474.0,579.3 476.0,581.3 475.5,583.6 478.1,585.5 477.5,588.1 480.7,589.6 480.6,592.0"/>
<polygon points="486.1,594.6 488.1,589.2 486.5,587.5 487.9,584.3 485.8,582.7 486.5,579.5 484.6,578.1 484.8,575.3 483.3,574.4 481.9,571.6 481.5,574.7 480.4,576.1 481.7,578.7 480.3,580.6 482.1,583.3 480.7,585.6 483.2,588.1 482.3,590.3"/>
<polygon points="486.9,594.7 491.6,591.8 491.4,589.5 494.5,587.9 493.8,585.4 496.3,583.4 495.6,581.2 497.5,579.2 496.9,577.5 497.4,574.5 495.3,576.7 493.6,577.2 493.0,579.8 490.8,580.6 490.6,583.7 488.1,584.6 488.5,588.0 486.5,589.1"/>
<polygon points="487.3,595.0 493.0,594.2 493.7,592.0 497.3,591.7 497.7,589.0 500.8,588.2 501.1,585.8 503.7,584.7 503.9,582.9 505.6,580.3 502.7,581.4 500.9,581.2 499.3,583.5 496.9,583.2 495.4,586.1 492.7,585.9 491.6,589.4 489.3,589.6"/>
<polygon points="487.4,595.3 493.3,595.9 494.6,593.9 498.2,594.5 499.2,591.9 502.5,591.9 503.4,589.6 506.3,589.1 506.9,587.4 509.2,585.2 506.1,585.7 504.4,585.0 502.2,586.8 499.9,586.0 497.7,588.5 495.0,587.6 493.2,590.8 490.8,590.4"/>
<polygon points="487.4,596.0 491.4,599.5 493.5,598.6 495.8,601.0 497.9,599.6 500.4,601.3 502.2,600.0 504.6,601.1 505.9,600.1 508.8,599.8 506.2,598.5 505.3,597.1 502.7,597.3 501.4,595.5 498.5,596.2 497.0,594.2 494.0,595.6 492.4,594.1"/>
<polygon points="487.5,596.4 490.7,601.4 493.2,601.1 495.0,604.4 497.7,603.6 499.9,606.1 502.3,605.4 504.5,607.3 506.3,606.7 509.5,607.2 507.1,604.9 506.5,603.1 503.7,602.6 502.8,600.2 499.4,600.1 498.4,597.4 494.7,598.0 493.5,595.9"/>
<polygon points="486.9,596.9 486.9,602.7 489.0,603.8 488.8,607.4 491.4,608.2 491.8,611.4 494.2,612.1 494.9,614.8 496.7,615.2 499.0,617.3 498.3,614.3 498.8,612.5 496.8,610.6 497.3,608.2 494.7,606.3 495.3,603.6 492.0,602.1 492.1,599.7"/>
<polygon points="487.1,595.1 492.1,594.6 492.6,592.6 495.8,592.5 495.9,590.0 498.6,589.4 498.7,587.2 500.9,586.3 500.9,584.6 502.3,582.4 499.8,583.3 498.2,583.0 496.9,585.0 494.7,584.8 493.6,587.3 491.2,587.0 490.5,590.1 488.5,590.3"/>
<polygon points="487.3,595.5 491.9,597.1 493.2,595.5 496.1,596.7 497.2,594.6 499.8,595.1 500.8,593.2 503.1,593.3 503.8,591.8 505.9,590.3 503.3,590.1 502.0,589.3 500.1,590.5 498.3,589.4 496.2,591.2 494.2,590.0 492.4,592.5 490.5,591.8"/>
<polygon points="487.3,596.1 490.6,599.9 492.5,599.2 494.4,601.7 496.5,600.4 498.6,602.3 500.5,601.1 502.5,602.4 503.8,601.5 506.5,601.3 504.3,599.8 503.6,598.3 501.2,598.4 500.2,596.5 497.5,597.0 496.3,594.8 493.4,596.1 492.1,594.4"/>
<polygon points="486.8,596.5 487.1,600.7 488.7,601.2 488.7,603.8 490.7,604.0 491.2,606.3 492.9,606.5 493.6,608.4 495.0,608.4 496.8,609.7 496.2,607.5 496.5,606.2 494.8,605.1 495.2,603.3 493.1,602.2 493.4,600.2 490.8,599.6 490.8,597.8"/>
<polygon points="486.6,596.6 485.5,600.8 487.0,601.8 486.2,604.4 488.1,605.2 487.9,607.6 489.6,608.3 489.7,610.4 491.0,610.9 492.4,612.6 492.4,610.3 493.1,609.1 491.9,607.5 492.7,605.8 491.0,604.2 491.9,602.3 489.6,600.9 490.1,599.2"/>
<polygon points="485.9,596.7 482.0,599.0 482.4,600.9 479.9,602.2 480.7,604.2 478.8,605.8 479.6,607.6 478.1,609.3 478.8,610.6 478.6,613.0 480.2,611.2 481.6,610.8 481.9,608.7 483.8,608.1 483.7,605.6 485.7,604.8 485.1,602.1 486.7,601.1"/>
<polygon points="485.6,596.4 481.2,597.0 480.9,598.8 478.1,598.9 478.0,601.1 475.7,601.7 475.6,603.6 473.7,604.5 473.8,605.9 472.6,607.9 474.8,607.1 476.2,607.3 477.3,605.5 479.2,605.7 480.1,603.4 482.2,603.6 482.7,600.8 484.5,600.7"/>
<polygon points="485.4,596.0 481.2,594.4 480.0,595.9 477.4,594.7 476.3,596.6 473.9,596.0 473.0,597.7 470.8,597.6 470.2,598.9 468.2,600.2 470.6,600.4 471.7,601.3 473.6,600.2 475.2,601.3 477.1,599.7 478.9,600.9 480.7,598.6 482.4,599.4"/>
<polygon points="485.4,595.6 482.2,592.1 480.4,592.8 478.6,590.5 476.7,591.8 474.7,590.1 473.0,591.2 471.1,590.1 469.9,591.0 467.4,591.2 469.5,592.6 470.1,593.9 472.4,593.8 473.3,595.5 475.9,595.0 477.0,596.9 479.7,595.7 480.9,597.2"/>
<polygon points="485.6,595.0 484.9,590.1 482.9,589.7 482.6,586.5 480.2,586.5 479.4,583.8 477.3,583.8 476.2,581.6 474.6,581.7 472.3,580.4 473.3,582.9 473.1,584.5 475.2,585.7 475.0,587.8 477.6,588.8 477.4,591.3 480.5,591.8 480.7,593.9"/>
<polygon points="486.1,594.8 488.1,590.1 486.6,588.7 488.1,585.9 486.0,584.6 486.8,581.9 484.9,580.7 485.2,578.4 483.8,577.6 482.4,575.3 482.0,577.9 481.0,579.1 482.1,581.3 480.8,583.0 482.5,585.2 481.1,587.2 483.5,589.3 482.5,591.2"/>
<polygon points="486.7,594.8 491.0,592.0 490.5,590.0 493.2,588.4 492.2,586.1 494.4,584.2 493.4,582.3 495.0,580.4 494.2,578.9 494.3,576.2 492.5,578.2 491.0,578.7 490.8,581.2 488.7,581.9 488.9,584.7 486.6,585.6 487.5,588.7 485.6,589.8"/>
<polygon points="485.9,595.2 486.4,591.5 484.8,591.1 485.3,588.8 483.4,588.7 483.3,586.7 481.6,586.7 481.2,585.0 479.9,585.1 478.3,584.1 478.6,585.9 478.1,587.1 479.5,588.1 478.9,589.7 480.8,590.5 480.1,592.3 482.5,592.7 482.2,594.3"/>
<polygon points="486.5,595.1 489.9,593.3 489.2,591.8 491.4,590.8 490.3,589.2 491.9,587.9 490.9,586.5 492.0,585.2 491.2,584.2 491.1,582.3 489.8,583.7 488.5,584.0 488.6,585.7 486.9,586.1 487.4,588.1 485.5,588.7 486.5,590.9 485.1,591.6"/>
<polygon points="486.8,595.4 490.5,595.6 490.7,594.1 493.1,594.5 493.0,592.6 495.0,592.4 494.9,590.8 496.5,590.3 496.4,589.1 497.2,587.5 495.5,587.9 494.3,587.4 493.4,588.8 491.9,588.3 491.2,590.2 489.4,589.6 489.1,592.0 487.6,591.8"/>
<polygon points="487.0,595.8 490.0,598.1 491.0,596.9 492.8,598.5 493.8,596.9 495.6,597.9 496.5,596.4 498.1,597.0 498.7,595.8 500.4,595.0 498.6,594.3 497.9,593.2 496.4,594.0 495.3,592.6 493.7,593.8 492.4,592.3 490.9,594.1 489.7,593.1"/>
<polygon points="486.8,596.2 487.1,599.5 488.5,599.5 488.6,601.6 490.2,601.3 490.7,603.0 492.2,602.7 492.8,604.1 493.9,603.8 495.5,604.3 494.8,602.8 495.0,601.6 493.7,601.1 493.9,599.6 492.1,599.3 492.3,597.6 490.2,597.7 490.1,596.3"/>
<polygon points="486.5,596.5 484.9,599.9 486.2,600.7 485.1,602.8 486.9,603.4 486.3,605.4 487.9,605.9 487.7,607.6 489.0,608.0 490.2,609.4 490.5,607.6 491.3,606.6 490.3,605.3 491.4,603.9 489.9,602.6 491.0,601.1 488.9,599.9 489.7,598.5"/>
<polygon points="485.9,596.3 482.8,596.7 482.9,598.1 480.8,598.2 481.2,599.8 479.6,600.3 480.0,601.7 478.7,602.4 479.0,603.4 478.6,605.0 480.1,604.3 481.1,604.4 481.6,603.1 483.0,603.2 483.2,601.5 484.9,601.6 484.7,599.6 486.0,599.4"/>
<polygon points="485.7,595.9 482.6,594.3 481.9,595.5 480.0,594.4 479.3,596.0 477.6,595.4 477.0,596.8 475.5,596.6 475.1,597.7 473.8,598.8 475.4,599.1 476.3,599.9 477.5,599.0 478.7,600.1 480.0,598.7 481.3,599.9 482.5,598.0 483.7,598.7"/>
<polygon points="485.7,595.6 483.9,592.8 482.6,593.5 481.6,591.6 480.3,592.7 479.1,591.4 477.9,592.3 476.7,591.4 475.9,592.2 474.2,592.4 475.5,593.5 475.8,594.6 477.3,594.4 477.8,595.9 479.5,595.3 480.1,596.9 482.0,595.9 482.7,597.1"/>
</g>
<g stroke="#111" stroke-width="1" fill="#fff" stroke-linejoin="miter">
<circle cx="543.6" cy="573.3" r="12.5" stroke="none"/>
<polygon points="543.8,574.4 542.1,579.6 543.6,581.2 542.3,584.3 544.4,585.8 543.8,588.8 545.7,590.0 545.5,592.7 547.0,593.6 548.4,596.1 548.7,593.2 549.6,591.8 548.4,589.4 549.6,587.5 547.9,585.0 549.2,582.9 546.7,580.5 547.5,578.4"/>
<polygon points="543.3,574.3 539.7,577.9 540.4,579.8 538.0,581.9 539.1,584.0 537.4,586.2 538.4,588.0 537.2,590.1 538.0,591.5 538.1,594.2 539.6,591.9 540.9,591.1 540.9,588.7 542.7,587.6 542.3,584.8 544.3,583.5 543.2,580.6 544.7,579.2"/>
<polygon points="542.7,574.2 536.8,575.7 536.3,578.2 532.6,578.9 532.5,581.8 529.3,583.0 529.3,585.5 526.7,587.0 526.8,588.9 525.3,591.8 528.2,590.3 530.1,590.3 531.5,587.7 534.1,587.7 535.3,584.5 538.1,584.4 538.8,580.7 541.2,580.1"/>
<polygon points="542.4,573.6 536.8,571.7 535.1,573.5 531.7,572.1 530.1,574.4 526.9,573.8 525.5,575.8 522.6,575.7 521.7,577.3 519.0,578.9 522.1,579.1 523.6,580.1 526.2,578.8 528.3,580.1 531.0,578.1 533.3,579.5 535.8,576.8 538.1,577.7"/>
<polygon points="542.4,573.2 537.7,570.1 535.8,571.3 533.0,569.1 531.0,570.8 528.1,569.4 526.4,570.9 523.8,570.1 522.5,571.3 519.6,572.0 522.4,573.1 523.5,574.4 526.2,573.8 527.8,575.5 530.8,574.4 532.6,576.3 535.6,574.5 537.4,575.9"/>
<polygon points="542.6,572.8 540.1,568.2 538.0,568.4 536.6,565.5 534.2,566.0 532.5,563.7 530.4,564.2 528.6,562.5 527.1,562.9 524.3,562.3 526.2,564.4 526.6,565.9 529.1,566.6 529.7,568.6 532.6,568.9 533.3,571.3 536.5,571.0 537.5,572.9"/>
<polygon points="542.9,572.4 542.3,567.2 540.3,566.5 540.1,563.3 537.7,562.9 537.0,560.0 534.8,559.7 533.9,557.3 532.3,557.2 530.0,555.6 530.9,558.2 530.7,559.8 532.7,561.3 532.5,563.5 535.0,564.9 534.8,567.4 537.9,568.4 538.1,570.5"/>
<polygon points="543.7,572.0 546.9,567.0 545.7,564.9 547.9,561.9 546.1,559.8 547.5,556.8 545.9,554.9 546.7,552.2 545.5,550.8 544.6,547.7 543.5,550.8 542.1,552.0 542.8,554.8 541.0,556.5 542.2,559.7 540.2,561.6 542.2,564.8 540.8,566.8"/>
<polygon points="544.2,572.2 549.1,568.9 548.8,566.5 552.0,564.7 551.2,562.0 553.8,559.8 553.0,557.5 554.9,555.3 554.2,553.6 554.7,550.4 552.5,552.7 550.8,553.3 550.2,556.2 547.9,557.0 547.8,560.3 545.2,561.3 545.7,565.0 543.6,566.2"/>
<polygon points="544.4,572.4 549.4,570.8 549.7,568.6 553.0,567.8 552.9,565.3 555.6,564.0 555.5,561.8 557.6,560.3 557.5,558.7 558.6,556.1 556.2,557.6 554.5,557.6 553.4,560.0 551.2,560.2 550.3,563.0 547.8,563.3 547.4,566.6 545.3,567.2"/>
<polygon points="544.8,573.0 550.5,574.5 552.0,572.7 555.5,573.9 556.9,571.5 560.2,572.0 561.4,569.8 564.3,569.8 565.1,568.2 567.8,566.5 564.6,566.4 563.0,565.5 560.6,566.9 558.4,565.8 555.9,567.9 553.4,566.6 551.1,569.4 548.8,568.7"/>
<polygon points="544.9,573.6 549.1,577.9 551.5,577.0 554.0,579.9 556.4,578.5 559.1,580.5 561.3,579.3 563.9,580.7 565.5,579.7 568.7,579.5 565.9,577.8 565.0,576.2 562.1,576.3 560.7,574.1 557.4,574.7 555.8,572.3 552.3,573.7 550.6,571.8"/>
<polygon points="544.7,573.8 547.8,578.6 550.1,578.4 551.8,581.5 554.4,580.7 556.4,583.2 558.7,582.4 560.8,584.3 562.4,583.7 565.5,584.2 563.3,582.0 562.7,580.3 560.0,579.8 559.2,577.6 556.0,577.4 555.1,574.9 551.6,575.4 550.4,573.4"/>
<polygon points="544.2,574.4 543.9,579.9 545.9,581.0 545.5,584.5 547.9,585.3 548.2,588.5 550.4,589.2 551.0,591.9 552.6,592.3 554.8,594.4 554.2,591.5 554.8,589.8 552.9,587.9 553.5,585.6 551.1,583.7 551.8,581.1 548.7,579.5 548.9,577.2"/>
<polygon points="544.0,574.1 543.4,578.2 545.0,579.0 544.4,581.6 546.4,582.2 546.4,584.5 548.1,585.0 548.4,587.0 549.8,587.3 551.3,588.9 551.1,586.7 551.6,585.4 550.2,584.0 550.9,582.3 549.0,580.9 549.7,579.0 547.3,577.8 547.7,576.1"/>
<polygon points="543.4,574.3 539.8,577.8 540.7,579.7 538.3,581.7 539.7,583.7 538.0,585.9 539.3,587.6 538.1,589.7 539.1,590.9 539.5,593.5 540.9,591.3 542.3,590.5 542.0,588.1 543.9,587.0 543.1,584.4 545.2,583.1 543.8,580.3 545.3,578.9"/>
<polygon points="543.1,574.0 539.0,575.6 539.0,577.5 536.4,578.3 536.8,580.4 534.7,581.5 535.1,583.4 533.4,584.7 533.8,586.1 533.2,588.3 535.1,586.9 536.5,586.8 537.1,584.8 539.0,584.6 539.4,582.1 541.5,581.8 541.3,579.0 543.0,578.5"/>
<polygon points="542.7,573.6 538.2,572.4 537.1,574.0 534.3,573.0 533.3,575.1 530.8,574.8 530.0,576.6 527.7,576.7 527.2,578.1 525.3,579.6 527.7,579.6 529.0,580.4 530.8,579.1 532.6,580.1 534.4,578.2 536.4,579.3 538.0,576.8 539.9,577.4"/>
<polygon points="542.6,573.1 539.1,569.6 537.2,570.5 535.1,568.2 533.2,569.6 531.0,567.9 529.3,569.2 527.2,568.1 526.0,569.1 523.4,569.5 525.7,570.8 526.4,572.2 528.8,572.0 529.9,573.8 532.6,573.0 533.9,575.0 536.6,573.6 538.0,575.1"/>
<polygon points="542.8,572.8 541.2,568.6 539.3,568.6 538.4,565.9 536.3,566.4 535.0,564.2 533.1,564.7 531.8,563.0 530.4,563.4 528.1,562.8 529.5,564.7 529.7,566.2 531.7,566.8 532.0,568.7 534.5,569.0 534.8,571.2 537.7,571.0 538.3,572.8"/>
<polygon points="543.2,572.4 544.0,568.0 542.4,567.1 543.0,564.3 540.9,563.6 541.0,561.0 539.2,560.4 538.9,558.3 537.5,557.9 535.9,556.2 536.1,558.5 535.4,559.9 536.9,561.5 536.1,563.3 538.0,564.9 537.2,566.9 539.7,568.2 539.3,570.1"/>
<polygon points="543.6,572.4 545.9,568.7 544.8,567.2 546.4,565.0 544.8,563.6 545.9,561.3 544.4,560.1 545.0,558.1 543.9,557.2 543.0,555.0 542.3,557.2 541.2,558.2 541.9,560.2 540.6,561.5 541.7,563.7 540.2,565.2 542.0,567.3 541.0,568.8"/>
<polygon points="544.1,572.6 548.1,571.5 548.2,569.7 550.8,569.2 550.5,567.2 552.6,566.2 552.3,564.5 554.0,563.4 553.8,562.1 554.5,560.0 552.6,561.1 551.3,561.2 550.5,563.0 548.8,563.1 548.2,565.3 546.2,565.5 546.2,568.1 544.5,568.5"/>
<polygon points="544.4,572.8 549.2,572.8 549.8,570.9 552.8,571.2 553.2,568.9 555.8,568.6 556.1,566.5 558.3,565.9 558.4,564.4 559.9,562.4 557.5,563.0 556.0,562.6 554.6,564.3 552.6,563.8 551.3,566.1 549.1,565.6 548.1,568.4 546.2,568.4"/>
<polygon points="544.6,573.3 548.4,575.9 549.9,574.8 552.2,576.6 553.8,575.0 556.1,576.1 557.5,574.7 559.6,575.3 560.5,574.2 562.8,573.4 560.5,572.5 559.6,571.4 557.5,572.0 556.1,570.6 553.8,571.7 552.3,570.1 550.0,571.8 548.4,570.7"/>
<polygon points="544.4,573.8 546.1,577.9 547.9,577.8 548.8,580.5 550.9,580.0 552.1,582.1 554.0,581.7 555.3,583.3 556.7,582.9 559.0,583.5 557.6,581.6 557.4,580.2 555.4,579.6 555.1,577.7 552.6,577.4 552.3,575.3 549.5,575.5 548.8,573.8"/>
<polygon points="544.2,573.2 547.1,575.2 548.0,574.1 549.7,575.5 550.5,573.9 552.2,574.8 552.9,573.4 554.4,573.8 554.9,572.7 556.4,571.9 554.8,571.3 554.0,570.4 552.7,571.1 551.7,570.0 550.2,571.1 549.0,569.8 547.7,571.6 546.5,570.7"/>
<polygon points="544.2,573.7 545.1,577.2 546.6,576.9 547.0,579.1 548.7,578.5 549.5,580.3 551.0,579.7 551.9,581.0 553.1,580.5 554.8,580.8 553.9,579.3 553.9,578.0 552.4,577.7 552.3,576.1 550.4,576.0 550.3,574.2 548.1,574.7 547.7,573.2"/>
<polygon points="543.8,573.9 542.3,576.9 543.5,577.7 542.4,579.6 544.0,580.2 543.4,581.9 544.9,582.4 544.7,583.9 545.8,584.3 546.9,585.6 547.2,583.9 548.0,583.1 547.1,581.9 548.0,580.7 546.7,579.4 547.8,578.1 545.9,577.0 546.6,575.8"/>
<polygon points="543.3,573.8 540.0,574.7 540.3,576.1 538.2,576.5 538.8,578.1 537.1,578.9 537.7,580.3 536.5,581.2 537.0,582.2 536.7,583.9 538.1,583.0 539.3,583.0 539.6,581.5 541.1,581.5 541.1,579.7 542.8,579.6 542.4,577.5 543.7,577.2"/>
<polygon points="542.9,573.5 539.4,572.2 538.7,573.6 536.5,572.6 535.9,574.4 534.0,574.0 533.5,575.7 531.8,575.6 531.5,576.9 530.2,578.2 532.1,578.4 533.1,579.2 534.4,578.0 535.8,579.0 537.0,577.4 538.6,578.5 539.7,576.3 541.1,576.9"/>
<polygon points="543.0,573.2 541.1,570.6 540.0,571.3 538.9,569.6 537.7,570.7 536.5,569.5 535.5,570.5 534.3,569.7 533.5,570.5 532.0,570.8 533.3,571.8 533.6,572.8 535.0,572.5 535.6,573.9 537.2,573.3 537.8,574.7 539.5,573.6 540.3,574.7"/>
<polygon points="543.2,572.7 543.5,569.1 542.0,568.8 542.4,566.4 540.5,566.4 540.4,564.5 538.7,564.5 538.3,562.9 537.1,562.9 535.5,562.0 535.8,563.8 535.4,565.0 536.8,565.9 536.2,567.5 538.0,568.2 537.5,570.0 539.8,570.4 539.6,571.9"/>
<polygon points="543.7,572.7 546.3,570.7 545.6,569.5 547.3,568.3 546.2,567.1 547.4,565.8 546.3,564.8 547.1,563.5 546.3,562.7 545.9,561.1 545.0,562.5 543.9,562.9 544.2,564.3 542.8,565.0 543.5,566.6 542.0,567.3 543.2,569.1 542.0,569.9"/>
<polygon points="544.0,572.9 547.3,572.7 547.3,571.4 549.4,571.4 549.2,569.8 550.9,569.4 550.7,568.0 552.0,567.4 551.8,566.3 552.4,564.8 550.8,565.4 549.8,565.1 549.2,566.4 547.7,566.1 547.3,567.8 545.7,567.6 545.7,569.6 544.3,569.6"/>
</g>
<g stroke="#111" stroke-width="1" fill="#fff" stroke-linejoin="miter">
<circle cx="603.3" cy="549.6" r="12.5" stroke="none"/>
<polygon points="602.5,548.7 601.3,542.8 599.0,542.2 598.5,538.5 595.8,538.3 594.7,535.1 592.3,534.9 591.0,532.3 589.1,532.3 586.4,530.6 587.7,533.5 587.6,535.4 590.0,537.0 589.9,539.4 592.9,540.8 592.8,543.6 596.4,544.5 596.8,546.9"/>
<polygon points="603.0,548.4 604.9,542.8 603.2,541.1 604.5,537.7 602.2,536.2 602.9,533.0 600.8,531.6 601.0,528.7 599.4,527.8 597.8,525.1 597.6,528.2 596.6,529.7 597.9,532.3 596.6,534.3 598.6,537.0 597.2,539.4 599.8,541.9 599.0,544.1"/>
<polygon points="603.5,548.6 607.0,545.0 606.3,543.0 608.6,540.9 607.4,538.9 609.0,536.6 608.0,534.9 609.1,532.7 608.3,531.4 608.0,528.7 606.7,531.1 605.4,531.9 605.5,534.3 603.7,535.4 604.3,538.2 602.3,539.5 603.5,542.4 602.0,543.8"/>
<polygon points="604.0,548.5 609.3,545.6 609.2,543.1 612.7,541.5 612.1,538.7 614.9,536.7 614.3,534.2 616.4,532.1 615.9,530.3 616.7,527.1 614.2,529.3 612.4,529.7 611.6,532.6 609.1,533.2 608.7,536.7 605.9,537.5 606.2,541.3 603.9,542.4"/>
<polygon points="604.4,548.9 610.5,549.0 611.6,546.8 615.4,547.0 616.2,544.3 619.5,543.9 620.2,541.5 623.1,540.7 623.5,538.9 625.7,536.4 622.5,537.2 620.7,536.7 618.6,538.8 616.2,538.2 614.2,540.9 611.4,540.3 609.8,543.7 607.3,543.6"/>
<polygon points="604.5,549.3 609.7,550.9 611.3,549.3 614.5,550.5 615.9,548.3 619.0,548.8 620.2,546.9 622.9,546.9 623.8,545.4 626.3,543.9 623.3,543.7 621.9,542.8 619.5,544.1 617.5,543.0 615.1,544.8 612.8,543.6 610.5,546.2 608.4,545.4"/>
<polygon points="604.5,549.9 608.4,553.9 610.6,553.1 612.9,555.7 615.3,554.5 617.8,556.4 619.8,555.2 622.2,556.6 623.7,555.6 626.7,555.5 624.1,553.9 623.2,552.4 620.5,552.4 619.2,550.4 616.1,551.0 614.7,548.7 611.4,550.0 609.8,548.3"/>
<polygon points="604.0,550.4 605.2,555.2 607.2,555.6 607.8,558.7 610.1,558.8 611.1,561.4 613.2,561.4 614.4,563.5 615.9,563.5 618.3,564.8 617.0,562.4 617.1,560.9 615.0,559.6 615.0,557.6 612.4,556.5 612.3,554.2 609.3,553.6 608.9,551.6"/>
<polygon points="603.8,550.6 603.2,555.9 605.1,557.0 604.5,560.3 606.8,561.2 606.9,564.2 609.0,565.0 609.4,567.6 611.0,568.1 612.9,570.2 612.5,567.4 613.1,565.8 611.5,563.8 612.2,561.8 609.9,559.8 610.7,557.4 607.9,555.7 608.2,553.6"/>
<polygon points="603.0,550.8 599.0,555.1 599.8,557.4 597.1,559.9 598.5,562.2 596.5,564.9 597.8,567.0 596.5,569.6 597.5,571.1 597.7,574.3 599.3,571.5 600.9,570.6 600.8,567.7 602.8,566.3 602.2,563.1 604.5,561.5 603.1,558.1 604.9,556.4"/>
<polygon points="602.8,550.7 597.8,554.0 598.1,556.4 594.9,558.3 595.8,561.0 593.3,563.1 594.1,565.5 592.2,567.7 592.8,569.4 592.4,572.6 594.6,570.2 596.3,569.6 596.8,566.8 599.1,565.9 599.2,562.6 601.8,561.6 601.2,557.9 603.3,556.7"/>
<polygon points="602.4,550.4 596.7,551.2 596.0,553.4 592.4,553.7 592.1,556.4 589.0,557.2 588.7,559.6 586.2,560.7 586.0,562.5 584.3,565.1 587.2,563.9 588.9,564.2 590.6,561.9 592.9,562.1 594.4,559.2 597.1,559.4 598.1,556.0 600.4,555.7"/>
<polygon points="602.3,549.9 597.5,548.4 596.1,549.9 593.3,548.8 592.0,550.7 589.2,550.2 588.1,552.0 585.7,551.9 584.9,553.3 582.6,554.6 585.3,554.8 586.6,555.6 588.7,554.5 590.5,555.5 592.7,553.8 594.8,555.0 596.8,552.7 598.7,553.3"/>
<polygon points="602.3,549.1 599.4,544.8 597.2,545.1 595.6,542.3 593.3,543.1 591.3,540.9 589.3,541.6 587.3,540.0 585.8,540.6 583.0,540.2 585.1,542.1 585.6,543.6 588.1,544.1 588.9,546.1 591.8,546.2 592.8,548.4 596.0,547.9 597.1,549.7"/>
<polygon points="603.4,550.6 600.9,555.0 602.2,556.5 600.5,559.1 602.3,560.7 601.3,563.2 603.0,564.5 602.4,566.9 603.7,567.8 604.8,570.2 605.5,567.7 606.7,566.6 605.8,564.3 607.3,562.8 605.8,560.4 607.5,558.6 605.4,556.3 606.5,554.5"/>
<polygon points="603.0,550.6 599.3,554.0 600.1,556.0 597.6,557.9 598.9,560.0 597.1,562.1 598.3,564.0 597.0,566.0 598.0,567.4 598.2,570.0 599.7,567.8 601.2,567.1 601.0,564.6 603.0,563.6 602.4,560.9 604.5,559.6 603.2,556.7 604.8,555.4"/>
<polygon points="602.6,550.3 597.8,550.9 597.4,552.8 594.4,553.0 594.3,555.4 591.8,556.1 591.7,558.1 589.7,559.1 589.7,560.6 588.5,562.8 590.8,561.9 592.4,562.1 593.5,560.1 595.6,560.3 596.6,557.9 598.9,558.1 599.4,555.1 601.4,554.9"/>
<polygon points="602.3,549.9 597.4,548.5 596.2,550.2 593.2,549.0 592.2,551.2 589.4,550.8 588.5,552.8 586.1,552.8 585.5,554.3 583.3,555.9 586.0,556.0 587.4,556.9 589.3,555.5 591.2,556.6 593.2,554.6 595.4,555.8 597.2,553.2 599.2,553.9"/>
<polygon points="602.3,549.2 599.4,545.1 597.4,545.6 595.7,542.9 593.5,544.0 591.6,541.9 589.6,542.9 587.7,541.4 586.3,542.2 583.6,542.1 585.7,543.9 586.2,545.4 588.6,545.6 589.4,547.6 592.2,547.3 593.2,549.6 596.2,548.6 597.4,550.4"/>
<polygon points="602.8,548.9 602.7,544.4 600.9,543.9 601.0,541.1 598.9,540.8 598.5,538.4 596.6,538.2 596.0,536.2 594.6,536.1 592.6,534.8 593.3,537.0 592.9,538.4 594.6,539.7 594.2,541.5 596.4,542.6 596.0,544.7 598.7,545.5 598.6,547.3"/>
<polygon points="603.1,548.7 604.5,544.7 603.1,543.6 604.2,541.1 602.3,540.1 602.8,537.8 601.2,537.0 601.3,534.9 600.0,534.4 598.8,532.5 598.6,534.7 597.8,535.9 598.9,537.6 597.9,539.1 599.4,540.9 598.4,542.7 600.5,544.3 599.8,545.9"/>
<polygon points="603.5,548.8 606.5,545.8 605.7,544.3 607.7,542.6 606.6,540.9 608.0,539.1 606.9,537.6 607.9,535.9 607.0,534.8 606.7,532.7 605.6,534.6 604.4,535.2 604.6,537.2 603.1,538.1 603.7,540.3 602.0,541.4 603.1,543.8 601.9,544.9"/>
<polygon points="604.0,548.9 608.6,547.9 608.9,546.0 611.8,545.6 611.7,543.3 614.2,542.5 614.0,540.4 616.0,539.3 615.9,537.8 616.9,535.6 614.7,536.7 613.2,536.6 612.1,538.6 610.1,538.5 609.3,541.0 607.0,541.0 606.7,543.9 604.8,544.2"/>
<polygon points="604.2,549.2 608.9,550.3 610.0,548.7 612.8,549.5 613.7,547.4 616.4,547.7 617.1,545.7 619.4,545.6 619.9,544.1 621.8,542.5 619.3,542.6 618.0,541.8 616.2,543.2 614.3,542.3 612.5,544.3 610.4,543.2 608.9,545.8 607.0,545.3"/>
<polygon points="604.2,549.8 607.1,553.2 608.8,552.5 610.5,554.7 612.3,553.6 614.1,555.2 615.7,554.2 617.5,555.3 618.7,554.5 621.0,554.3 619.1,552.9 618.5,551.7 616.4,551.8 615.5,550.1 613.1,550.6 612.1,548.7 609.5,549.8 608.4,548.4"/>
<polygon points="603.9,550.4 604.1,555.0 605.9,555.5 605.9,558.4 608.1,558.6 608.5,561.1 610.5,561.3 611.2,563.4 612.7,563.5 614.7,564.8 614.0,562.5 614.3,561.0 612.6,559.8 612.9,557.8 610.7,556.7 611.0,554.5 608.2,553.7 608.2,551.8"/>
<polygon points="603.0,550.2 599.7,551.8 600.3,553.2 598.1,554.1 599.0,555.7 597.4,556.8 598.3,558.2 597.1,559.3 597.8,560.4 597.9,562.2 599.2,561.0 600.5,560.8 600.5,559.2 602.1,558.8 601.8,556.9 603.6,556.5 602.8,554.3 604.2,553.7"/>
<polygon points="602.7,550.0 598.9,549.5 598.5,551.1 596.1,550.6 596.0,552.6 594.0,552.6 593.9,554.4 592.2,554.7 592.3,556.1 591.3,557.7 593.2,557.4 594.4,557.9 595.4,556.5 597.0,557.1 597.8,555.2 599.7,555.9 600.1,553.5 601.7,553.7"/>
<polygon points="602.6,549.5 600.1,546.8 598.9,547.8 597.4,546.0 596.1,547.4 594.6,546.2 593.5,547.4 592.0,546.7 591.2,547.7 589.5,548.3 591.1,549.2 591.7,550.3 593.3,549.9 594.1,551.3 595.8,550.4 596.8,552.0 598.6,550.5 599.6,551.7"/>
<polygon points="603.0,549.1 603.6,546.0 602.3,545.7 602.8,543.7 601.3,543.6 601.3,541.9 599.9,541.8 599.7,540.4 598.6,540.4 597.4,539.5 597.5,541.0 597.0,542.0 598.1,542.8 597.5,544.1 599.0,544.9 598.4,546.4 600.3,546.8 600.0,548.1"/>
<polygon points="603.4,549.0 606.0,546.8 605.2,545.6 606.9,544.3 605.7,543.1 606.9,541.8 605.8,540.7 606.5,539.4 605.7,538.6 605.2,537.0 604.3,538.4 603.2,538.9 603.6,540.4 602.2,541.1 602.9,542.7 601.4,543.5 602.7,545.3 601.6,546.1"/>
<polygon points="603.7,549.2 606.8,549.0 606.9,547.7 608.8,547.7 608.6,546.1 610.2,545.8 610.0,544.4 611.3,543.8 611.0,542.8 611.6,541.3 610.1,541.9 609.1,541.6 608.5,542.9 607.1,542.7 606.8,544.3 605.2,544.0 605.2,546.0 603.9,546.1"/>
<polygon points="603.9,549.5 606.8,550.9 607.5,549.8 609.3,550.9 609.9,549.3 611.6,549.9 612.1,548.5 613.5,548.7 613.9,547.6 615.1,546.6 613.6,546.3 612.7,545.6 611.6,546.4 610.4,545.4 609.2,546.7 608.0,545.7 606.9,547.4 605.7,546.8"/>
<polygon points="603.8,550.0 604.2,553.2 605.5,553.2 605.6,555.3 607.3,554.9 607.8,556.6 609.2,556.2 609.9,557.5 610.9,557.2 612.5,557.7 611.8,556.2 612.0,555.1 610.6,554.6 610.8,553.2 609.1,552.9 609.2,551.2 607.1,551.4 607.0,550.0"/>
<polygon points="603.4,550.3 601.6,553.6 602.9,554.5 601.5,556.6 603.3,557.4 602.6,559.3 604.2,560.0 603.9,561.7 605.2,562.1 606.3,563.7 606.7,561.8 607.6,560.9 606.7,559.5 607.9,558.2 606.4,556.7 607.7,555.3 605.7,553.9 606.5,552.6"/>
</g>
<g stroke="#111" stroke-width="1" fill="#fff" stroke-linejoin="miter">
<circle cx="664.0" cy="528.3" r="12.5" stroke="none"/>
<polygon points="664.4,527.2 668.8,523.8 668.3,521.5 671.2,519.6 670.2,517.2 672.4,514.9 671.5,512.8 673.1,510.6 672.3,509.1 672.5,506.1 670.7,508.4 669.1,509.1 668.8,511.8 666.7,512.8 666.9,515.9 664.5,517.0 665.3,520.4 663.5,521.7"/>
<polygon points="664.6,527.5 669.2,525.6 669.4,523.6 672.3,522.6 672.1,520.3 674.5,518.9 674.2,516.9 676.2,515.4 675.9,513.9 676.8,511.3 674.6,512.9 673.1,513.1 672.2,515.3 670.2,515.6 669.5,518.4 667.2,518.7 667.1,521.8 665.2,522.5"/>
<polygon points="665.1,527.9 670.5,528.9 671.9,527.1 675.2,527.9 676.4,525.6 679.5,525.8 680.5,523.7 683.2,523.5 683.9,521.9 686.2,520.1 683.3,520.2 681.7,519.5 679.5,521.0 677.4,520.1 675.2,522.3 672.8,521.3 670.8,524.1 668.6,523.6"/>
<polygon points="665.2,528.4 669.4,531.8 671.4,530.8 673.9,533.0 676.0,531.5 678.6,533.1 680.4,531.7 682.9,532.7 684.2,531.7 687.0,531.2 684.4,529.9 683.4,528.6 680.8,529.0 679.3,527.2 676.4,528.1 674.8,526.1 671.8,527.7 670.1,526.2"/>
<polygon points="665.0,528.9 667.3,533.7 669.4,533.7 670.7,536.7 673.2,536.3 674.8,538.7 677.0,538.3 678.7,540.3 680.3,539.9 683.0,540.6 681.2,538.4 680.9,536.8 678.4,536.0 677.9,533.9 675.0,533.4 674.4,531.0 671.1,531.1 670.2,529.1"/>
<polygon points="664.6,529.4 664.6,535.2 666.8,536.3 666.5,539.9 669.2,540.7 669.6,543.9 671.9,544.6 672.7,547.3 674.5,547.7 676.8,549.8 676.1,546.8 676.6,545.0 674.5,543.0 675.1,540.7 672.4,538.8 673.0,536.1 669.7,534.5 669.8,532.1"/>
<polygon points="664.2,529.5 662.4,534.8 664.0,536.4 662.7,539.6 664.8,541.2 664.2,544.2 666.1,545.6 665.9,548.3 667.4,549.2 668.9,551.9 669.2,548.9 670.2,547.4 668.9,545.0 670.2,543.0 668.4,540.4 669.7,538.2 667.2,535.7 668.1,533.6"/>
<polygon points="663.6,529.4 659.7,532.7 660.2,534.8 657.6,536.7 658.7,539.0 656.7,541.1 657.6,543.1 656.2,545.2 657.0,546.6 656.9,549.4 658.5,547.1 660.0,546.5 660.2,543.9 662.1,542.9 661.8,540.0 664.0,538.9 663.1,535.7 664.8,534.4"/>
<polygon points="663.1,529.2 657.5,531.0 657.1,533.4 653.5,534.2 653.5,537.0 650.5,538.4 650.6,540.9 648.1,542.5 648.3,544.3 646.9,547.2 649.7,545.6 651.5,545.5 652.8,542.9 655.3,542.8 656.4,539.6 659.2,539.4 659.6,535.7 662.0,535.1"/>
<polygon points="662.9,528.9 656.9,528.5 655.7,530.6 652.1,530.1 651.1,532.8 647.8,533.0 647.0,535.3 644.1,535.9 643.6,537.7 641.3,539.9 644.5,539.4 646.2,540.0 648.4,538.0 650.8,538.7 652.9,536.2 655.5,536.9 657.3,533.7 659.7,533.9"/>
<polygon points="662.7,528.2 657.9,524.6 655.7,525.7 652.9,523.3 650.7,525.0 647.7,523.4 645.8,524.9 643.0,523.8 641.6,525.1 638.4,525.7 641.4,527.0 642.6,528.4 645.4,528.0 647.1,529.9 650.3,528.8 652.1,531.0 655.4,529.2 657.3,530.7"/>
<polygon points="663.0,527.8 660.2,523.6 658.2,523.9 656.6,521.1 654.3,521.9 652.4,519.7 650.4,520.4 648.6,518.8 647.1,519.3 644.4,518.9 646.4,520.8 646.9,522.3 649.3,522.7 650.1,524.7 652.9,524.8 653.8,527.0 656.9,526.5 658.0,528.3"/>
<polygon points="663.3,527.2 663.4,521.3 661.2,520.2 661.4,516.5 658.7,515.7 658.3,512.4 655.9,511.8 655.1,509.0 653.3,508.6 651.0,506.4 651.7,509.5 651.2,511.3 653.3,513.3 652.7,515.7 655.4,517.7 654.8,520.4 658.2,522.0 658.1,524.4"/>
<polygon points="663.8,527.2 665.5,522.5 664.0,521.0 665.3,518.1 663.4,516.7 664.0,513.9 662.2,512.7 662.4,510.2 661.1,509.4 659.8,507.0 659.5,509.7 658.6,511.0 659.7,513.2 658.5,515.0 660.2,517.3 658.9,519.3 661.2,521.5 660.4,523.5"/>
<polygon points="664.3,529.2 662.9,533.4 664.4,534.5 663.4,537.0 665.3,538.0 664.9,540.4 666.6,541.2 666.6,543.3 667.9,543.9 669.2,545.8 669.4,543.4 670.1,542.2 669.0,540.5 669.9,538.9 668.3,537.1 669.3,535.3 667.1,533.7 667.7,531.9"/>
<polygon points="663.7,529.2 659.9,532.1 660.5,533.9 658.1,535.5 659.1,537.5 657.3,539.4 658.3,541.2 656.9,543.0 657.7,544.3 657.8,546.7 659.3,544.8 660.7,544.2 660.8,542.0 662.6,541.2 662.3,538.6 664.3,537.7 663.4,534.9 664.9,533.8"/>
<polygon points="663.4,529.1 658.9,530.7 659.0,532.7 656.1,533.5 656.5,535.8 654.2,537.0 654.6,539.0 652.8,540.4 653.2,541.9 652.4,544.3 654.5,542.9 656.0,542.8 656.8,540.6 658.8,540.4 659.2,537.8 661.5,537.5 661.4,534.5 663.3,533.9"/>
<polygon points="663.0,528.7 658.1,527.6 657.0,529.3 653.9,528.4 653.0,530.7 650.2,530.5 649.5,532.5 647.1,532.7 646.5,534.2 644.5,536.0 647.2,535.9 648.6,536.6 650.5,535.1 652.5,536.1 654.3,534.0 656.5,535.1 658.2,532.3 660.2,532.9"/>
<polygon points="663.1,528.0 660.2,524.3 658.4,525.0 656.8,522.5 654.8,523.6 653.0,521.8 651.3,522.8 649.5,521.5 648.2,522.3 645.8,522.4 647.7,523.9 648.3,525.2 650.5,525.3 651.3,527.1 653.8,526.7 654.8,528.7 657.5,527.7 658.6,529.3"/>
<polygon points="663.3,527.6 662.2,522.9 660.3,522.7 659.8,519.7 657.5,519.8 656.6,517.3 654.5,517.5 653.4,515.5 651.8,515.6 649.5,514.6 650.7,516.9 650.6,518.4 652.6,519.4 652.6,521.5 655.2,522.3 655.2,524.6 658.2,524.9 658.5,526.8"/>
<polygon points="663.7,527.3 665.5,522.5 663.9,521.2 665.2,518.2 663.1,517.0 663.7,514.3 661.8,513.2 661.9,510.8 660.4,510.1 659.0,507.8 658.7,510.5 657.7,511.8 659.0,513.9 657.8,515.7 659.6,517.9 658.3,519.9 660.8,521.9 660.0,523.9"/>
<polygon points="664.0,527.4 666.7,523.8 665.7,522.3 667.6,520.1 666.1,518.6 667.3,516.4 665.9,515.0 666.6,513.0 665.6,512.1 664.9,509.8 664.0,512.0 662.9,512.9 663.4,514.9 661.9,516.1 662.9,518.4 661.3,519.8 662.9,522.1 661.7,523.6"/>
<polygon points="664.6,527.6 668.9,526.6 669.1,524.8 671.9,524.4 671.7,522.2 674.0,521.4 673.8,519.5 675.7,518.4 675.5,517.0 676.4,514.9 674.3,516.0 672.9,515.9 672.0,517.8 670.1,517.8 669.4,520.1 667.3,520.1 667.1,522.9 665.3,523.3"/>
<polygon points="664.8,528.0 668.9,529.2 669.9,527.8 672.3,528.8 673.2,526.9 675.5,527.3 676.3,525.7 678.3,525.6 678.8,524.4 680.6,523.1 678.4,523.0 677.2,522.3 675.6,523.4 674.0,522.5 672.3,524.1 670.6,523.1 669.1,525.3 667.4,524.7"/>
<polygon points="664.9,528.6 667.8,532.2 669.6,531.6 671.3,534.0 673.2,532.9 675.1,534.7 676.8,533.7 678.6,535.0 679.9,534.2 682.3,534.1 680.4,532.6 679.8,531.2 677.6,531.2 676.7,529.4 674.2,529.8 673.2,527.8 670.5,528.8 669.4,527.3"/>
<polygon points="664.8,528.9 666.6,533.3 668.5,533.2 669.5,536.1 671.7,535.6 673.0,537.9 675.0,537.4 676.4,539.2 677.9,538.8 680.3,539.5 678.8,537.4 678.7,535.9 676.5,535.2 676.2,533.2 673.6,532.8 673.2,530.5 670.2,530.7 669.6,528.9"/>
<polygon points="663.8,528.9 660.8,530.7 661.5,532.0 659.5,533.1 660.6,534.5 659.2,535.7 660.1,537.0 659.1,538.2 659.9,539.1 660.1,540.8 661.3,539.5 662.4,539.2 662.3,537.6 663.8,537.1 663.3,535.4 665.0,534.8 664.0,532.8 665.2,532.1"/>
<polygon points="663.5,528.6 660.2,528.2 660.0,529.5 657.9,529.1 657.8,530.8 656.1,530.8 656.0,532.3 654.6,532.6 654.6,533.8 653.8,535.1 655.4,534.9 656.4,535.3 657.3,534.1 658.6,534.7 659.3,533.1 660.9,533.6 661.3,531.6 662.7,531.8"/>
<polygon points="663.4,528.1 661.5,524.9 660.1,525.6 659.1,523.5 657.6,524.5 656.4,523.0 655.0,524.0 653.8,522.9 652.8,523.7 651.0,523.9 652.3,525.2 652.6,526.4 654.3,526.3 654.7,527.9 656.6,527.4 657.2,529.2 659.3,528.1 660.0,529.5"/>
<polygon points="663.5,527.8 663.2,524.1 661.6,524.1 661.6,521.7 659.8,522.1 659.3,520.1 657.6,520.5 657.0,518.9 655.7,519.2 654.0,518.6 654.6,520.3 654.4,521.6 655.9,522.2 655.7,523.9 657.6,524.3 657.4,526.2 659.7,526.1 659.8,527.6"/>
<polygon points="663.9,527.7 665.9,524.9 664.8,524.0 666.2,522.4 664.7,521.5 665.5,519.9 664.2,519.1 664.6,517.7 663.5,517.2 662.7,515.7 662.2,517.3 661.3,518.0 662.0,519.4 660.8,520.4 661.9,521.8 660.6,522.9 662.3,524.3 661.5,525.4"/>
<polygon points="664.5,527.9 668.1,527.9 668.2,526.4 670.5,526.6 670.4,524.8 672.3,524.5 672.1,522.9 673.6,522.4 673.5,521.1 674.2,519.5 672.5,520.0 671.3,519.7 670.6,521.1 669.0,520.7 668.5,522.5 666.7,522.1 666.5,524.4 665.0,524.3"/>
<polygon points="664.6,528.2 667.6,529.9 668.4,528.7 670.2,530.0 670.9,528.4 672.6,529.1 673.2,527.7 674.7,527.9 675.2,526.9 676.5,525.9 674.9,525.5 674.1,524.6 672.8,525.4 671.7,524.4 670.4,525.6 669.1,524.4 667.9,526.3 666.7,525.5"/>
<polygon points="664.5,528.6 665.5,531.7 666.8,531.3 667.3,533.3 668.8,532.7 669.6,534.2 670.9,533.6 671.8,534.7 672.8,534.2 674.4,534.4 673.5,533.1 673.4,532.0 672.0,531.8 671.9,530.3 670.2,530.4 670.0,528.8 668.0,529.3 667.7,528.0"/>
<polygon points="664.1,528.9 662.4,531.6 663.5,532.3 662.3,534.0 663.7,534.7 663.0,536.3 664.3,536.9 664.0,538.3 665.0,538.7 665.9,540.0 666.3,538.5 667.1,537.8 666.4,536.6 667.4,535.6 666.3,534.3 667.4,533.2 665.8,532.0 666.5,530.9"/>
</g>
<g>
<circle cx="583.8" cy="921.4" r="20.9" fill="#fff"/>
<ellipse cx="567.7" cy="926.4" rx="4.0" ry="1.4" fill="#fff" stroke="#222" stroke-width="0.4" transform="rotate(163 567.7 926.4)"/>
<ellipse cx="590.2" cy="936.2" rx="3.3" ry="1.4" fill="#111" stroke="#222" stroke-width="0.4" transform="rotate(34 590.2 936.2)"/>
<ellipse cx="600.8" cy="932.3" rx="3.5" ry="0.9" fill="#fff" stroke="#222" stroke-width="0.4" transform="rotate(71 600.8 932.3)"/>
<ellipse cx="573.8" cy="906.9" rx="2.2" ry="0.6" fill="#111" stroke="#222" stroke-width="0.4" transform="rotate(238 573.8 906.9)"/>
<ellipse cx="587.9" cy="931.7" rx="1.9" ry="0.6" fill="#fff" stroke="#222" stroke-width="0.4" transform="rotate(64 587.9 931.7)"/>
<ellipse cx="565.9" cy="919.2" rx="3.0" ry="1.1" fill="#111" stroke="#222" stroke-width="0.4" transform="rotate(183 565.9 919.2)"/>
<ellipse cx="606.2" cy="921.1" rx="3.8" ry="1.5" fill="#111" stroke="#222" stroke-width="0.4" transform="rotate(344 606.2 921.1)"/>
<ellipse cx="582.4" cy="927.2" rx="3.6" ry="1.2" fill="#111" stroke="#222" stroke-width="0.4" transform="rotate(132 582.4 927.2)"/>
<ellipse cx="603.8" cy="916.0" rx="1.8" ry="0.5" fill="#111" stroke="#222" stroke-width="0.4" transform="rotate(378 603.8 916.0)"/>
<ellipse cx="597.9" cy="919.7" rx="2.0" ry="0.7" fill="#111" stroke="#222" stroke-width="0.4" transform="rotate(375 597.9 919.7)"/>
<ellipse cx="594.9" cy="928.2" rx="4.1" ry="1.7" fill="#111" stroke="#222" stroke-width="0.4" transform="rotate(1 594.9 928.2)"/>
<ellipse cx="588.2" cy="924.7" rx="3.7" ry="1.1" fill="#111" stroke="#222" stroke-width="0.4" transform="rotate(41 588.2 924.7)"/>
<ellipse cx="590.8" cy="939.3" rx="2.1" ry="0.8" fill="#111" stroke="#222" stroke-width="0.4" transform="rotate(38 590.8 939.3)"/>
<ellipse cx="586.5" cy="932.8" rx="4.1" ry="1.7" fill="#fff" stroke="#222" stroke-width="0.4" transform="rotate(61 586.5 932.8)"/>
<ellipse cx="587.3" cy="935.1" rx="3.9" ry="1.5" fill="#fff" stroke="#222" stroke-width="0.4" transform="rotate(44 587.3 935.1)"/>
<ellipse cx="586.4" cy="932.5" rx="3.7" ry="1.2" fill="#111" stroke="#222" stroke-width="0.4" transform="rotate(60 586.4 932.5)"/>
<ellipse cx="598.3" cy="930.6" rx="2.4" ry="0.9" fill="#111" stroke="#222" stroke-width="0.4" transform="rotate(22 598.3 930.6)"/>
<ellipse cx="598.9" cy="917.4" rx="3.2" ry="1.3" fill="#111" stroke="#222" stroke-width="0.4" transform="rotate(320 598.9 917.4)"/>
<ellipse cx="600.9" cy="910.3" rx="2.4" ry="0.7" fill="#fff" stroke="#222" stroke-width="0.4" transform="rotate(346 600.9 910.3)"/>
<ellipse cx="591.0" cy="942.1" rx="3.9" ry="1.5" fill="#111" stroke="#222" stroke-width="0.4" transform="rotate(64 591.0 942.1)"/>
<ellipse cx="605.2" cy="926.7" rx="2.4" ry="0.9" fill="#fff" stroke="#222" stroke-width="0.4" transform="rotate(-6 605.2 926.7)"/>
<ellipse cx="573.8" cy="914.5" rx="2.2" ry="0.9" fill="#111" stroke="#222" stroke-width="0.4" transform="rotate(180 573.8 914.5)"/>
<ellipse cx="564.5" cy="913.8" rx="3.3" ry="1.0" fill="#111" stroke="#222" stroke-width="0.4" transform="rotate(235 564.5 913.8)"/>
<ellipse cx="595.4" cy="922.6" rx="2.9" ry="0.8" fill="#111" stroke="#222" stroke-width="0.4" transform="rotate(-20 595.4 922.6)"/>
<ellipse cx="576.5" cy="917.8" rx="2.7" ry="1.1" fill="#fff" stroke="#222" stroke-width="0.4" transform="rotate(244 576.5 917.8)"/>
<ellipse cx="577.6" cy="905.4" rx="2.1" ry="0.5" fill="#fff" stroke="#222" stroke-width="0.4" transform="rotate(210 577.6 905.4)"/>
<ellipse cx="577.1" cy="900.4" rx="1.9" ry="0.7" fill="#fff" stroke="#222" stroke-width="0.4" transform="rotate(251 577.1 900.4)"/>
<ellipse cx="574.4" cy="941.8" rx="2.0" ry="0.7" fill="#fff" stroke="#222" stroke-width="0.4" transform="rotate(134 574.4 941.8)"/>
<ellipse cx="582.3" cy="902.6" rx="3.7" ry="1.6" fill="#fff" stroke="#222" stroke-width="0.4" transform="rotate(253 582.3 902.6)"/>
<ellipse cx="600.9" cy="909.1" rx="2.8" ry="1.1" fill="#fff" stroke="#222" stroke-width="0.4" transform="rotate(353 600.9 909.1)"/>
<ellipse cx="574.0" cy="911.6" rx="3.2" ry="1.2" fill="#fff" stroke="#222" stroke-width="0.4" transform="rotate(191 574.0 911.6)"/>
<ellipse cx="604.9" cy="920.5" rx="3.5" ry="1.2" fill="#fff" stroke="#222" stroke-width="0.4" transform="rotate(376 604.9 920.5)"/>
<ellipse cx="564.6" cy="928.9" rx="2.0" ry="0.8" fill="#fff" stroke="#222" stroke-width="0.4" transform="rotate(121 564.6 928.9)"/>
<ellipse cx="573.1" cy="922.7" rx="3.5" ry="1.2" fill="#fff" stroke="#222" stroke-width="0.4" transform="rotate(182 573.1 922.7)"/>
<ellipse cx="583.7" cy="923.8" rx="2.5" ry="1.0" fill="#111" stroke="#222" stroke-width="0.4" transform="rotate(68 583.7 923.8)"/>
<ellipse cx="599.0" cy="911.2" rx="2.9" ry="1.2" fill="#fff" stroke="#222" stroke-width="0.4" transform="rotate(312 599.0 911.2)"/>
<ellipse cx="588.5" cy="935.4" rx="3.7" ry="1.6" fill="#111" stroke="#222" stroke-width="0.4" transform="rotate(102 588.5 935.4)"/>
<ellipse cx="572.8" cy="915.1" rx="2.1" ry="0.7" fill="#fff" stroke="#222" stroke-width="0.4" transform="rotate(237 572.8 915.1)"/>
<ellipse cx="578.5" cy="900.1" rx="2.5" ry="0.7" fill="#111" stroke="#222" stroke-width="0.4" transform="rotate(252 578.5 900.1)"/>
<ellipse cx="587.0" cy="935.5" rx="3.3" ry="1.2" fill="#fff" stroke="#222" stroke-width="0.4" transform="rotate(62 587.0 935.5)"/>
<ellipse cx="598.8" cy="919.7" rx="2.0" ry="0.5" fill="#111" stroke="#222" stroke-width="0.4" transform="rotate(383 598.8 919.7)"/>
<ellipse cx="579.4" cy="905.0" rx="2.5" ry="1.0" fill="#111" stroke="#222" stroke-width="0.4" transform="rotate(217 579.4 905.0)"/>
<ellipse cx="580.4" cy="922.4" rx="3.8" ry="1.1" fill="#111" stroke="#222" stroke-width="0.4" transform="rotate(135 580.4 922.4)"/>
<ellipse cx="573.5" cy="910.5" rx="3.3" ry="1.3" fill="#fff" stroke="#222" stroke-width="0.4" transform="rotate(251 573.5 910.5)"/>
<ellipse cx="579.8" cy="912.2" rx="2.9" ry="0.8" fill="#111" stroke="#222" stroke-width="0.4" transform="rotate(207 579.8 912.2)"/>
<ellipse cx="581.7" cy="912.1" rx="2.5" ry="0.8" fill="#111" stroke="#222" stroke-width="0.4" transform="rotate(273 581.7 912.1)"/>
<ellipse cx="569.1" cy="908.5" rx="2.7" ry="1.1" fill="#111" stroke="#222" stroke-width="0.4" transform="rotate(254 569.1 908.5)"/>
<ellipse cx="601.2" cy="913.5" rx="2.1" ry="0.7" fill="#fff" stroke="#222" stroke-width="0.4" transform="rotate(346 601.2 913.5)"/>
<ellipse cx="571.7" cy="933.3" rx="3.9" ry="1.6" fill="#111" stroke="#222" stroke-width="0.4" transform="rotate(171 571.7 933.3)"/>
<ellipse cx="577.9" cy="913.1" rx="3.5" ry="1.5" fill="#fff" stroke="#222" stroke-width="0.4" transform="rotate(246 577.9 913.1)"/>
<ellipse cx="588.7" cy="942.2" rx="4.2" ry="1.9" fill="#fff" stroke="#222" stroke-width="0.4" transform="rotate(80 588.7 942.2)"/>
<ellipse cx="574.6" cy="940.8" rx="3.9" ry="1.2" fill="#111" stroke="#222" stroke-width="0.4" transform="rotate(82 574.6 940.8)"/>
<ellipse cx="565.1" cy="915.3" rx="3.0" ry="0.8" fill="#111" stroke="#222" stroke-width="0.4" transform="rotate(223 565.1 915.3)"/>
<ellipse cx="586.7" cy="912.5" rx="2.6" ry="1.1" fill="#111" stroke="#222" stroke-width="0.4" transform="rotate(259 586.7 912.5)"/>
<ellipse cx="564.8" cy="919.4" rx="3.8" ry="1.5" fill="#111" stroke="#222" stroke-width="0.4" transform="rotate(222 564.8 919.4)"/>
<ellipse cx="590.1" cy="919.3" rx="2.3" ry="0.8" fill="#fff" stroke="#222" stroke-width="0.4" transform="rotate(325 590.1 919.3)"/>
<ellipse cx="573.3" cy="908.9" rx="3.8" ry="1.4" fill="#111" stroke="#222" stroke-width="0.4" transform="rotate(215 573.3 908.9)"/>
<ellipse cx="595.8" cy="903.8" rx="2.3" ry="1.0" fill="#111" stroke="#222" stroke-width="0.4" transform="rotate(342 595.8 903.8)"/>
<ellipse cx="574.8" cy="916.9" rx="3.1" ry="1.1" fill="#111" stroke="#222" stroke-width="0.4" transform="rotate(215 574.8 916.9)"/>
<ellipse cx="599.7" cy="918.3" rx="2.8" ry="1.1" fill="#111" stroke="#222" stroke-width="0.4" transform="rotate(354 599.7 918.3)"/>
<ellipse cx="581.7" cy="916.0" rx="3.1" ry="1.0" fill="#fff" stroke="#222" stroke-width="0.4" transform="rotate(285 581.7 916.0)"/>
<ellipse cx="581.9" cy="936.8" rx="2.1" ry="0.7" fill="#fff" stroke="#222" stroke-width="0.4" transform="rotate(122 581.9 936.8)"/>
<ellipse cx="571.3" cy="923.3" rx="2.3" ry="0.8" fill="#111" stroke="#222" stroke-width="0.4" transform="rotate(206 571.3 923.3)"/>
<ellipse cx="584.4" cy="918.1" rx="2.3" ry="0.7" fill="#111" stroke="#222" stroke-width="0.4" transform="rotate(295 584.4 918.1)"/>
<ellipse cx="572.9" cy="935.4" rx="2.1" ry="0.8" fill="#111" stroke="#222" stroke-width="0.4" transform="rotate(98 572.9 935.4)"/>
<ellipse cx="583.8" cy="931.4" rx="3.1" ry="1.0" fill="#111" stroke="#222" stroke-width="0.4" transform="rotate(80 583.8 931.4)"/>
<ellipse cx="575.0" cy="919.8" rx="2.3" ry="0.9" fill="#111" stroke="#222" stroke-width="0.4" transform="rotate(202 575.0 919.8)"/>
<ellipse cx="594.3" cy="907.2" rx="3.9" ry="1.1" fill="#fff" stroke="#222" stroke-width="0.4" transform="rotate(326 594.3 907.2)"/>
<ellipse cx="594.2" cy="914.1" rx="2.6" ry="1.1" fill="#fff" stroke="#222" stroke-width="0.4" transform="rotate(302 594.2 914.1)"/>
<ellipse cx="590.1" cy="916.1" rx="2.4" ry="0.9" fill="#111" stroke="#222" stroke-width="0.4" transform="rotate(300 590.1 916.1)"/>
<ellipse cx="591.0" cy="908.7" rx="3.7" ry="1.0" fill="#fff" stroke="#222" stroke-width="0.4" transform="rotate(292 591.0 908.7)"/>
<ellipse cx="593.8" cy="922.5" rx="3.4" ry="1.5" fill="#111" stroke="#222" stroke-width="0.4" transform="rotate(44 593.8 922.5)"/>
<ellipse cx="564.2" cy="920.7" rx="3.0" ry="1.2" fill="#111" stroke="#222" stroke-width="0.4" transform="rotate(157 564.2 920.7)"/>
<ellipse cx="587.2" cy="924.1" rx="3.1" ry="1.1" fill="#111" stroke="#222" stroke-width="0.4" transform="rotate(44 587.2 924.1)"/>
<ellipse cx="587.9" cy="930.7" rx="3.8" ry="1.7" fill="#111" stroke="#222" stroke-width="0.4" transform="rotate(101 587.9 930.7)"/>
<ellipse cx="604.1" cy="929.7" rx="2.9" ry="1.2" fill="#111" stroke="#222" stroke-width="0.4" transform="rotate(8 604.1 929.7)"/>
<ellipse cx="569.1" cy="920.0" rx="3.2" ry="0.8" fill="#fff" stroke="#222" stroke-width="0.4" transform="rotate(202 569.1 920.0)"/>
<ellipse cx="590.1" cy="935.2" rx="3.6" ry="1.2" fill="#111" stroke="#222" stroke-width="0.4" transform="rotate(41 590.1 935.2)"/>
<ellipse cx="581.0" cy="921.2" rx="3.9" ry="1.6" fill="#fff" stroke="#222" stroke-width="0.4" transform="rotate(201 581.0 921.2)"/>
<ellipse cx="574.0" cy="911.0" rx="3.2" ry="1.1" fill="#fff" stroke="#222" stroke-width="0.4" transform="rotate(265 574.0 911.0)"/>
<ellipse cx="582.7" cy="942.9" rx="3.6" ry="1.5" fill="#111" stroke="#222" stroke-width="0.4" transform="rotate(118 582.7 942.9)"/>
<ellipse cx="600.6" cy="908.6" rx="3.5" ry="1.4" fill="#111" stroke="#222" stroke-width="0.4" transform="rotate(344 600.6 908.6)"/>
<ellipse cx="582.8" cy="915.5" rx="2.6" ry="0.9" fill="#111" stroke="#222" stroke-width="0.4" transform="rotate(221 582.8 915.5)"/>
<ellipse cx="572.4" cy="907.8" rx="2.4" ry="1.0" fill="#111" stroke="#222" stroke-width="0.4" transform="rotate(243 572.4 907.8)"/>
<ellipse cx="574.7" cy="907.1" rx="3.1" ry="1.0" fill="#fff" stroke="#222" stroke-width="0.4" transform="rotate(277 574.7 907.1)"/>
<ellipse cx="577.9" cy="902.7" rx="4.2" ry="1.1" fill="#fff" stroke="#222" stroke-width="0.4" transform="rotate(262 577.9 902.7)"/>
<ellipse cx="583.2" cy="935.6" rx="1.9" ry="0.6" fill="#111" stroke="#222" stroke-width="0.4" transform="rotate(82 583.2 935.6)"/>
<ellipse cx="583.7" cy="942.8" rx="3.1" ry="1.1" fill="#fff" stroke="#222" stroke-width="0.4" transform="rotate(128 583.7 942.8)"/>
<ellipse cx="601.8" cy="920.8" rx="3.7" ry="1.0" fill="#fff" stroke="#222" stroke-width="0.4" transform="rotate(366 601.8 920.8)"/>
<ellipse cx="604.6" cy="927.5" rx="2.2" ry="0.8" fill="#111" stroke="#222" stroke-width="0.4" transform="rotate(-10 604.6 927.5)"/>
<ellipse cx="579.6" cy="917.9" rx="4.1" ry="1.4" fill="#fff" stroke="#222" stroke-width="0.4" transform="rotate(222 579.6 917.9)"/>
<ellipse cx="575.8" cy="930.4" rx="3.4" ry="1.2" fill="#fff" stroke="#222" stroke-width="0.4" transform="rotate(114 575.8 930.4)"/>
<ellipse cx="583.0" cy="924.0" rx="2.4" ry="0.6" fill="#fff" stroke="#222" stroke-width="0.4" transform="rotate(79 583.0 924.0)"/>
<ellipse cx="567.4" cy="935.0" rx="3.6" ry="0.9" fill="#fff" stroke="#222" stroke-width="0.4" transform="rotate(179 567.4 935.0)"/>
<ellipse cx="603.0" cy="930.9" rx="2.8" ry="1.0" fill="#111" stroke="#222" stroke-width="0.4" transform="rotate(64 603.0 930.9)"/>
<ellipse cx="562.3" cy="918.2" rx="3.5" ry="1.2" fill="#fff" stroke="#222" stroke-width="0.4" transform="rotate(227 562.3 918.2)"/>
<ellipse cx="577.7" cy="916.8" rx="3.3" ry="1.1" fill="#111" stroke="#222" stroke-width="0.4" transform="rotate(194 577.7 916.8)"/>
<ellipse cx="576.0" cy="920.0" rx="2.9" ry="1.1" fill="#111" stroke="#222" stroke-width="0.4" transform="rotate(187 576.0 920.0)"/>
<ellipse cx="571.1" cy="914.2" rx="3.7" ry="1.3" fill="#fff" stroke="#222" stroke-width="0.4" transform="rotate(249 571.1 914.2)"/>
<ellipse cx="582.7" cy="910.5" rx="2.1" ry="0.9" fill="#fff" stroke="#222" stroke-width="0.4" transform="rotate(287 582.7 910.5)"/>
<ellipse cx="576.4" cy="930.5" rx="3.4" ry="1.3" fill="#fff" stroke="#222" stroke-width="0.4" transform="rotate(137 576.4 930.5)"/>
<ellipse cx="584.0" cy="911.6" rx="2.4" ry="1.1" fill="#fff" stroke="#222" stroke-width="0.4" transform="rotate(304 584.0 911.6)"/>
<ellipse cx="589.2" cy="922.8" rx="2.5" ry="0.8" fill="#111" stroke="#222" stroke-width="0.4" transform="rotate(24 589.2 922.8)"/>
<ellipse cx="577.9" cy="919.8" rx="2.0" ry="0.8" fill="#fff" stroke="#222" stroke-width="0.4" transform="rotate(199 577.9 919.8)"/>
<ellipse cx="572.9" cy="932.5" rx="2.3" ry="0.7" fill="#fff" stroke="#222" stroke-width="0.4" transform="rotate(154 572.9 932.5)"/>
<ellipse cx="590.8" cy="924.9" rx="3.7" ry="1.4" fill="#111" stroke="#222" stroke-width="0.4" transform="rotate(48 590.8 924.9)"/>
<ellipse cx="573.6" cy="926.6" rx="3.7" ry="1.2" fill="#fff" stroke="#222" stroke-width="0.4" transform="rotate(165 573.6 926.6)"/>
<ellipse cx="576.2" cy="936.2" rx="3.6" ry="1.6" fill="#111" stroke="#222" stroke-width="0.4" transform="rotate(111 576.2 936.2)"/>
<ellipse cx="601.1" cy="933.5" rx="2.0" ry="0.5" fill="#111" stroke="#222" stroke-width="0.4" transform="rotate(40 601.1 933.5)"/>
<ellipse cx="578.9" cy="910.1" rx="3.7" ry="1.0" fill="#fff" stroke="#222" stroke-width="0.4" transform="rotate(224 578.9 910.1)"/>
<ellipse cx="594.6" cy="927.5" rx="3.5" ry="1.4" fill="#111" stroke="#222" stroke-width="0.4" transform="rotate(12 594.6 927.5)"/>
<ellipse cx="571.8" cy="936.3" rx="2.7" ry="0.7" fill="#fff" stroke="#222" stroke-width="0.4" transform="rotate(146 571.8 936.3)"/>
<ellipse cx="602.8" cy="910.7" rx="4.0" ry="1.3" fill="#111" stroke="#222" stroke-width="0.4" transform="rotate(355 602.8 910.7)"/>
<ellipse cx="577.9" cy="934.4" rx="4.0" ry="1.7" fill="#111" stroke="#222" stroke-width="0.4" transform="rotate(94 577.9 934.4)"/>
<ellipse cx="574.8" cy="931.5" rx="2.7" ry="0.9" fill="#fff" stroke="#222" stroke-width="0.4" transform="rotate(107 574.8 931.5)"/>
<ellipse cx="588.6" cy="905.6" rx="3.8" ry="1.4" fill="#fff" stroke="#222" stroke-width="0.4" transform="rotate(261 588.6 905.6)"/>
<ellipse cx="592.5" cy="913.3" rx="1.9" ry="0.7" fill="#fff" stroke="#222" stroke-width="0.4" transform="rotate(321 592.5 913.3)"/>
<ellipse cx="601.6" cy="917.6" rx="3.7" ry="1.0" fill="#fff" stroke="#222" stroke-width="0.4" transform="rotate(352 601.6 917.6)"/>
<ellipse cx="589.4" cy="924.6" rx="3.6" ry="1.5" fill="#fff" stroke="#222" stroke-width="0.4" transform="rotate(-3 589.4 924.6)"/>
<ellipse cx="595.8" cy="936.7" rx="3.4" ry="1.0" fill="#fff" stroke="#222" stroke-width="0.4" transform="rotate(29 595.8 936.7)"/>
<ellipse cx="564.3" cy="918.7" rx="2.7" ry="0.9" fill="#fff" stroke="#222" stroke-width="0.4" transform="rotate(225 564.3 918.7)"/>
<ellipse cx="567.3" cy="922.1" rx="3.5" ry="1.4" fill="#111" stroke="#222" stroke-width="0.4" transform="rotate(211 567.3 922.1)"/>
<ellipse cx="592.3" cy="905.1" rx="3.8" ry="1.6" fill="#fff" stroke="#222" stroke-width="0.4" transform="rotate(324 592.3 905.1)"/>
<ellipse cx="601.2" cy="916.7" rx="3.1" ry="1.2" fill="#111" stroke="#222" stroke-width="0.4" transform="rotate(369 601.2 916.7)"/>
<ellipse cx="576.2" cy="925.5" rx="3.6" ry="1.6" fill="#111" stroke="#222" stroke-width="0.4" transform="rotate(141 576.2 925.5)"/>
<ellipse cx="587.9" cy="935.5" rx="2.5" ry="1.1" fill="#111" stroke="#222" stroke-width="0.4" transform="rotate(38 587.9 935.5)"/>
<ellipse cx="597.4" cy="933.4" rx="3.7" ry="1.0" fill="#111" stroke="#222" stroke-width="0.4" transform="rotate(6 597.4 933.4)"/>
<ellipse cx="565.3" cy="910.6" rx="1.9" ry="0.5" fill="#111" stroke="#222" stroke-width="0.4" transform="rotate(185 565.3 910.6)"/>
<ellipse cx="585.5" cy="940.4" rx="3.2" ry="1.0" fill="#111" stroke="#222" stroke-width="0.4" transform="rotate(60 585.5 940.4)"/>
<ellipse cx="593.0" cy="938.7" rx="2.5" ry="0.9" fill="#111" stroke="#222" stroke-width="0.4" transform="rotate(87 593.0 938.7)"/>
<ellipse cx="582.4" cy="942.5" rx="4.0" ry="1.3" fill="#fff" stroke="#222" stroke-width="0.4" transform="rotate(98 582.4 942.5)"/>
<ellipse cx="573.3" cy="922.6" rx="1.9" ry="0.8" fill="#111" stroke="#222" stroke-width="0.4" transform="rotate(198 573.3 922.6)"/>
<ellipse cx="567.9" cy="918.6" rx="2.5" ry="1.1" fill="#111" stroke="#222" stroke-width="0.4" transform="rotate(203 567.9 918.6)"/>
<ellipse cx="599.2" cy="922.5" rx="2.7" ry="1.1" fill="#fff" stroke="#222" stroke-width="0.4" transform="rotate(21 599.2 922.5)"/>
<ellipse cx="588.7" cy="928.8" rx="2.6" ry="0.8" fill="#111" stroke="#222" stroke-width="0.4" transform="rotate(86 588.7 928.8)"/>
<ellipse cx="569.2" cy="904.4" rx="2.4" ry="0.9" fill="#fff" stroke="#222" stroke-width="0.4" transform="rotate(201 569.2 904.4)"/>
<ellipse cx="604.2" cy="921.6" rx="3.8" ry="1.6" fill="#111" stroke="#222" stroke-width="0.4" transform="rotate(-33 604.2 921.6)"/>
<ellipse cx="582.3" cy="914.5" rx="3.0" ry="1.0" fill="#fff" stroke="#222" stroke-width="0.4" transform="rotate(294 582.3 914.5)"/>
<ellipse cx="591.5" cy="911.7" rx="3.7" ry="1.2" fill="#111" stroke="#222" stroke-width="0.4" transform="rotate(342 591.5 911.7)"/>
<ellipse cx="588.5" cy="912.3" rx="3.1" ry="1.1" fill="#fff" stroke="#222" stroke-width="0.4" transform="rotate(270 588.5 912.3)"/>
<ellipse cx="579.1" cy="933.0" rx="2.0" ry="0.6" fill="#fff" stroke="#222" stroke-width="0.4" transform="rotate(109 579.1 933.0)"/>
<ellipse cx="571.9" cy="935.8" rx="2.1" ry="0.7" fill="#fff" stroke="#222" stroke-width="0.4" transform="rotate(126 571.9 935.8)"/>
<ellipse cx="592.5" cy="905.4" rx="1.8" ry="0.6" fill="#111" stroke="#222" stroke-width="0.4" transform="rotate(315 592.5 905.4)"/>
<ellipse cx="569.8" cy="915.4" rx="1.8" ry="0.8" fill="#111" stroke="#222" stroke-width="0.4" transform="rotate(227 569.8 915.4)"/>
<ellipse cx="574.8" cy="913.3" rx="2.7" ry="1.0" fill="#111" stroke="#222" stroke-width="0.4" transform="rotate(206 574.8 913.3)"/>
<ellipse cx="569.5" cy="932.9" rx="2.4" ry="0.7" fill="#111" stroke="#222" stroke-width="0.4" transform="rotate(160 569.5 932.9)"/>
<ellipse cx="599.7" cy="915.7" rx="3.5" ry="1.1" fill="#111" stroke="#222" stroke-width="0.4" transform="rotate(366 599.7 915.7)"/>
<ellipse cx="588.2" cy="926.7" rx="3.4" ry="1.3" fill="#111" stroke="#222" stroke-width="0.4" transform="rotate(25 588.2 926.7)"/>
<ellipse cx="592.8" cy="906.6" rx="2.0" ry="0.6" fill="#111" stroke="#222" stroke-width="0.4" transform="rotate(274 592.8 906.6)"/>
<ellipse cx="578.7" cy="924.8" rx="4.0" ry="1.3" fill="#fff" stroke="#222" stroke-width="0.4" transform="rotate(147 578.7 924.8)"/>
<ellipse cx="586.0" cy="901.1" rx="2.7" ry="0.9" fill="#111" stroke="#222" stroke-width="0.4" transform="rotate(269 586.0 901.1)"/>
<ellipse cx="568.5" cy="932.4" rx="4.2" ry="1.7" fill="#fff" stroke="#222" stroke-width="0.4" transform="rotate(157 568.5 932.4)"/>
<ellipse cx="596.7" cy="922.9" rx="2.6" ry="1.0" fill="#111" stroke="#222" stroke-width="0.4" transform="rotate(-25 596.7 922.9)"/>
<ellipse cx="563.9" cy="920.2" rx="3.8" ry="1.4" fill="#fff" stroke="#222" stroke-width="0.4" transform="rotate(156 563.9 920.2)"/>
<ellipse cx="597.5" cy="911.9" rx="2.6" ry="0.9" fill="#fff" stroke="#222" stroke-width="0.4" transform="rotate(296 597.5 911.9)"/>
<ellipse cx="599.9" cy="920.1" rx="3.5" ry="1.5" fill="#fff" stroke="#222" stroke-width="0.4" transform="rotate(331 599.9 920.1)"/>
<ellipse cx="576.8" cy="914.2" rx="2.0" ry="0.6" fill="#fff" stroke="#222" stroke-width="0.4" transform="rotate(232 576.8 914.2)"/>
<ellipse cx="573.5" cy="940.5" rx="2.7" ry="0.9" fill="#fff" stroke="#222" stroke-width="0.4" transform="rotate(88 573.5 940.5)"/>
<ellipse cx="597.9" cy="937.5" rx="3.1" ry="1.1" fill="#111" stroke="#222" stroke-width="0.4" transform="rotate(54 597.9 937.5)"/>
<ellipse cx="602.7" cy="909.3" rx="3.8" ry="1.4" fill="#fff" stroke="#222" stroke-width="0.4" transform="rotate(297 602.7 909.3)"/>
<ellipse cx="578.7" cy="942.1" rx="2.4" ry="0.9" fill="#111" stroke="#222" stroke-width="0.4" transform="rotate(130 578.7 942.1)"/>
<ellipse cx="577.9" cy="919.6" rx="1.9" ry="0.5" fill="#fff" stroke="#222" stroke-width="0.4" transform="rotate(236 577.9 919.6)"/>
<ellipse cx="577.0" cy="910.9" rx="3.4" ry="1.4" fill="#fff" stroke="#222" stroke-width="0.4" transform="rotate(228 577.0 910.9)"/>
<ellipse cx="584.8" cy="918.7" rx="2.3" ry="0.8" fill="#111" stroke="#222" stroke-width="0.4" transform="rotate(261 584.8 918.7)"/>
<ellipse cx="575.3" cy="917.4" rx="3.0" ry="0.9" fill="#111" stroke="#222" stroke-width="0.4" transform="rotate(210 575.3 917.4)"/>
<ellipse cx="581.0" cy="918.0" rx="3.4" ry="1.0" fill="#fff" stroke="#222" stroke-width="0.4" transform="rotate(268 581.0 918.0)"/>
<ellipse cx="569.6" cy="924.1" rx="3.3" ry="1.3" fill="#fff" stroke="#222" stroke-width="0.4" transform="rotate(190 569.6 924.1)"/>
<ellipse cx="561.5" cy="923.4" rx="3.8" ry="1.6" fill="#111" stroke="#222" stroke-width="0.4" transform="rotate(168 561.5 923.4)"/>
<ellipse cx="564.2" cy="912.8" rx="3.1" ry="1.1" fill="#fff" stroke="#222" stroke-width="0.4" transform="rotate(198 564.2 912.8)"/>
<ellipse cx="581.5" cy="926.2" rx="3.5" ry="1.5" fill="#fff" stroke="#222" stroke-width="0.4" transform="rotate(134 581.5 926.2)"/>
<ellipse cx="583.9" cy="909.0" rx="3.2" ry="0.9" fill="#111" stroke="#222" stroke-width="0.4" transform="rotate(241 583.9 909.0)"/>
<ellipse cx="569.6" cy="921.2" rx="1.9" ry="0.7" fill="#111" stroke="#222" stroke-width="0.4" transform="rotate(183 569.6 921.2)"/>
<ellipse cx="578.9" cy="934.7" rx="2.4" ry="0.6" fill="#fff" stroke="#222" stroke-width="0.4" transform="rotate(143 578.9 934.7)"/>
<ellipse cx="573.2" cy="903.3" rx="2.8" ry="1.2" fill="#fff" stroke="#222" stroke-width="0.4" transform="rotate(217 573.2 903.3)"/>
<ellipse cx="564.3" cy="912.7" rx="2.0" ry="0.8" fill="#111" stroke="#222" stroke-width="0.4" transform="rotate(174 564.3 912.7)"/>
<ellipse cx="584.3" cy="921.2" rx="2.4" ry="0.7" fill="#111" stroke="#222" stroke-width="0.4" transform="rotate(328 584.3 921.2)"/>
<ellipse cx="599.9" cy="909.0" rx="2.8" ry="0.9" fill="#111" stroke="#222" stroke-width="0.4" transform="rotate(329 599.9 909.0)"/>
<ellipse cx="604.7" cy="925.5" rx="2.5" ry="0.9" fill="#fff" stroke="#222" stroke-width="0.4" transform="rotate(46 604.7 925.5)"/>
<ellipse cx="573.7" cy="923.1" rx="2.5" ry="1.1" fill="#111" stroke="#222" stroke-width="0.4" transform="rotate(202 573.7 923.1)"/>
<ellipse cx="590.8" cy="910.0" rx="2.9" ry="0.8" fill="#fff" stroke="#222" stroke-width="0.4" transform="rotate(332 590.8 910.0)"/>
<ellipse cx="589.1" cy="938.5" rx="2.3" ry="1.0" fill="#111" stroke="#222" stroke-width="0.4" transform="rotate(37 589.1 938.5)"/>
<ellipse cx="581.9" cy="909.0" rx="4.0" ry="1.7" fill="#111" stroke="#222" stroke-width="0.4" transform="rotate(278 581.9 909.0)"/>
<ellipse cx="576.5" cy="900.9" rx="2.9" ry="0.8" fill="#111" stroke="#222" stroke-width="0.4" transform="rotate(228 576.5 900.9)"/>
<ellipse cx="581.4" cy="911.7" rx="2.2" ry="0.7" fill="#fff" stroke="#222" stroke-width="0.4" transform="rotate(269 581.4 911.7)"/>
<ellipse cx="571.1" cy="934.5" rx="3.9" ry="1.4" fill="#111" stroke="#222" stroke-width="0.4" transform="rotate(112 571.1 934.5)"/>
<ellipse cx="600.3" cy="913.2" rx="2.5" ry="0.9" fill="#fff" stroke="#222" stroke-width="0.4" transform="rotate(301 600.3 913.2)"/>
<ellipse cx="568.6" cy="927.4" rx="3.1" ry="0.8" fill="#111" stroke="#222" stroke-width="0.4" transform="rotate(166 568.6 927.4)"/>
<ellipse cx="583.7" cy="941.6" rx="2.0" ry="0.6" fill="#111" stroke="#222" stroke-width="0.4" transform="rotate(111 583.7 941.6)"/>
<ellipse cx="580.8" cy="937.8" rx="2.2" ry="1.0" fill="#111" stroke="#222" stroke-width="0.4" transform="rotate(139 580.8 937.8)"/>
<ellipse cx="564.9" cy="926.1" rx="2.7" ry="1.2" fill="#111" stroke="#222" stroke-width="0.4" transform="rotate(166 564.9 926.1)"/>
<ellipse cx="566.8" cy="915.2" rx="2.7" ry="1.0" fill="#111" stroke="#222" stroke-width="0.4" transform="rotate(223 566.8 915.2)"/>
<ellipse cx="563.1" cy="920.7" rx="3.4" ry="1.2" fill="#111" stroke="#222" stroke-width="0.4" transform="rotate(218 563.1 920.7)"/>
<ellipse cx="585.5" cy="912.4" rx="3.3" ry="1.0" fill="#fff" stroke="#222" stroke-width="0.4" transform="rotate(276 585.5 912.4)"/>
<ellipse cx="588.4" cy="901.9" rx="2.4" ry="0.8" fill="#fff" stroke="#222" stroke-width="0.4" transform="rotate(261 588.4 901.9)"/>
<ellipse cx="579.6" cy="921.4" rx="3.2" ry="1.3" fill="#fff" stroke="#222" stroke-width="0.4" transform="rotate(185 579.6 921.4)"/>
<ellipse cx="587.5" cy="929.3" rx="1.8" ry="0.6" fill="#111" stroke="#222" stroke-width="0.4" transform="rotate(60 587.5 929.3)"/>
<ellipse cx="582.2" cy="941.4" rx="2.0" ry="0.9" fill="#111" stroke="#222" stroke-width="0.4" transform="rotate(100 582.2 941.4)"/>
<ellipse cx="586.6" cy="910.8" rx="2.2" ry="0.7" fill="#111" stroke="#222" stroke-width="0.4" transform="rotate(248 586.6 910.8)"/>
<ellipse cx="572.0" cy="910.1" rx="2.4" ry="0.9" fill="#fff" stroke="#222" stroke-width="0.4" transform="rotate(191 572.0 910.1)"/>
<ellipse cx="589.2" cy="931.4" rx="2.2" ry="0.8" fill="#fff" stroke="#222" stroke-width="0.4" transform="rotate(88 589.2 931.4)"/>
<ellipse cx="597.2" cy="926.8" rx="2.7" ry="0.8" fill="#111" stroke="#222" stroke-width="0.4" transform="rotate(60 597.2 926.8)"/>
<ellipse cx="564.2" cy="922.7" rx="4.2" ry="1.2" fill="#fff" stroke="#222" stroke-width="0.4" transform="rotate(173 564.2 922.7)"/>
<ellipse cx="594.5" cy="924.1" rx="3.9" ry="1.1" fill="#111" stroke="#222" stroke-width="0.4" transform="rotate(6 594.5 924.1)"/>
<ellipse cx="578.3" cy="924.2" rx="1.9" ry="0.8" fill="#fff" stroke="#222" stroke-width="0.4" transform="rotate(174 578.3 924.2)"/>
<ellipse cx="585.2" cy="932.6" rx="3.1" ry="0.9" fill="#fff" stroke="#222" stroke-width="0.4" transform="rotate(80 585.2 932.6)"/>
<ellipse cx="575.2" cy="931.3" rx="4.2" ry="1.5" fill="#111" stroke="#222" stroke-width="0.4" transform="rotate(94 575.2 931.3)"/>
<ellipse cx="580.6" cy="917.0" rx="2.6" ry="1.0" fill="#fff" stroke="#222" stroke-width="0.4" transform="rotate(263 580.6 917.0)"/>
<ellipse cx="595.4" cy="911.4" rx="2.7" ry="1.1" fill="#fff" stroke="#222" stroke-width="0.4" transform="rotate(310 595.4 911.4)"/>
<ellipse cx="586.7" cy="934.3" rx="2.2" ry="0.8" fill="#111" stroke="#222" stroke-width="0.4" transform="rotate(51 586.7 934.3)"/>
<ellipse cx="587.2" cy="936.4" rx="2.5" ry="0.9" fill="#fff" stroke="#222" stroke-width="0.4" transform="rotate(117 587.2 936.4)"/>
<ellipse cx="590.4" cy="913.7" rx="2.7" ry="0.7" fill="#111" stroke="#222" stroke-width="0.4" transform="rotate(326 590.4 913.7)"/>
<ellipse cx="583.3" cy="924.4" rx="2.2" ry="0.7" fill="#fff" stroke="#222" stroke-width="0.4" transform="rotate(90 583.3 924.4)"/>
<ellipse cx="581.3" cy="910.0" rx="2.7" ry="0.7" fill="#111" stroke="#222" stroke-width="0.4" transform="rotate(292 581.3 910.0)"/>
<ellipse cx="585.7" cy="902.4" rx="4.0" ry="1.0" fill="#111" stroke="#222" stroke-width="0.4" transform="rotate(261 585.7 902.4)"/>
<ellipse cx="602.1" cy="931.9" rx="2.6" ry="1.0" fill="#111" stroke="#222" stroke-width="0.4" transform="rotate(31 602.1 931.9)"/>
<ellipse cx="575.2" cy="928.2" rx="1.9" ry="0.5" fill="#111" stroke="#222" stroke-width="0.4" transform="rotate(149 575.2 928.2)"/>
<ellipse cx="578.2" cy="934.9" rx="3.1" ry="0.9" fill="#111" stroke="#222" stroke-width="0.4" transform="rotate(129 578.2 934.9)"/>
<ellipse cx="581.0" cy="903.3" rx="2.2" ry="0.6" fill="#fff" stroke="#222" stroke-width="0.4" transform="rotate(244 581.0 903.3)"/>
<ellipse cx="572.2" cy="929.2" rx="3.9" ry="1.1" fill="#111" stroke="#222" stroke-width="0.4" transform="rotate(129 572.2 929.2)"/>
<ellipse cx="584.8" cy="925.8" rx="1.9" ry="0.7" fill="#fff" stroke="#222" stroke-width="0.4" transform="rotate(83 584.8 925.8)"/>
<ellipse cx="595.9" cy="919.5" rx="3.4" ry="1.5" fill="#fff" stroke="#222" stroke-width="0.4" transform="rotate(329 595.9 919.5)"/>
<ellipse cx="572.8" cy="902.4" rx="3.9" ry="1.2" fill="#111" stroke="#222" stroke-width="0.4" transform="rotate(251 572.8 902.4)"/>
<ellipse cx="571.1" cy="927.6" rx="1.9" ry="0.6" fill="#111" stroke="#222" stroke-width="0.4" transform="rotate(140 571.1 927.6)"/>
<ellipse cx="582.1" cy="930.2" rx="2.8" ry="1.0" fill="#fff" stroke="#222" stroke-width="0.4" transform="rotate(74 582.1 930.2)"/>
<ellipse cx="584.2" cy="928.2" rx="2.6" ry="0.9" fill="#fff" stroke="#222" stroke-width="0.4" transform="rotate(58 584.2 928.2)"/>
<ellipse cx="578.8" cy="905.4" rx="3.5" ry="0.9" fill="#111" stroke="#222" stroke-width="0.4" transform="rotate(244 578.8 905.4)"/>
<ellipse cx="597.0" cy="926.9" rx="1.9" ry="0.7" fill="#111" stroke="#222" stroke-width="0.4" transform="rotate(30 597.0 926.9)"/>
<ellipse cx="578.6" cy="931.5" rx="1.9" ry="0.6" fill="#fff" stroke="#222" stroke-width="0.4" transform="rotate(149 578.6 931.5)"/>
<ellipse cx="582.4" cy="939.7" rx="2.2" ry="0.8" fill="#fff" stroke="#222" stroke-width="0.4" transform="rotate(104 582.4 939.7)"/>
<ellipse cx="572.7" cy="934.4" rx="4.1" ry="1.6" fill="#fff" stroke="#222" stroke-width="0.4" transform="rotate(141 572.7 934.4)"/>
<ellipse cx="571.5" cy="929.1" rx="2.5" ry="1.0" fill="#111" stroke="#222" stroke-width="0.4" transform="rotate(178 571.5 929.1)"/>
<ellipse cx="587.5" cy="919.0" rx="2.1" ry="0.7" fill="#111" stroke="#222" stroke-width="0.4" transform="rotate(312 587.5 919.0)"/>
<ellipse cx="592.4" cy="920.1" rx="2.3" ry="0.7" fill="#111" stroke="#222" stroke-width="0.4" transform="rotate(366 592.4 920.1)"/>
<ellipse cx="600.4" cy="921.5" rx="2.7" ry="0.8" fill="#fff" stroke="#222" stroke-width="0.4" transform="rotate(-0 600.4 921.5)"/>
<ellipse cx="566.8" cy="916.1" rx="3.1" ry="1.3" fill="#111" stroke="#222" stroke-width="0.4" transform="rotate(235 566.8 916.1)"/>
<ellipse cx="571.7" cy="938.8" rx="2.6" ry="1.0" fill="#fff" stroke="#222" stroke-width="0.4" transform="rotate(140 571.7 938.8)"/>
<ellipse cx="603.7" cy="916.8" rx="2.2" ry="0.8" fill="#fff" stroke="#222" stroke-width="0.4" transform="rotate(346 603.7 916.8)"/>
<ellipse cx="575.6" cy="930.2" rx="3.6" ry="1.3" fill="#111" stroke="#222" stroke-width="0.4" transform="rotate(112 575.6 930.2)"/>
<ellipse cx="579.5" cy="929.9" rx="3.0" ry="0.8" fill="#111" stroke="#222" stroke-width="0.4" transform="rotate(82 579.5 929.9)"/>
<ellipse cx="598.9" cy="932.7" rx="2.1" ry="0.7" fill="#111" stroke="#222" stroke-width="0.4" transform="rotate(59 598.9 932.7)"/>
</g>
<g>
<circle cx="374.4" cy="897.7" r="21.9" fill="#9a9a9a"/>
<ellipse cx="355.6" cy="900.7" rx="2.3" ry="0.6" fill="#111" stroke="#222" stroke-width="0.4" transform="rotate(132 355.6 900.7)"/>
<ellipse cx="371.2" cy="918.6" rx="2.3" ry="0.9" fill="#fff" stroke="#222" stroke-width="0.4" transform="rotate(103 371.2 918.6)"/>
<ellipse cx="383.9" cy="910.0" rx="1.5" ry="0.6" fill="#fff" stroke="#222" stroke-width="0.4" transform="rotate(17 383.9 910.0)"/>
<ellipse cx="391.8" cy="906.5" rx="1.7" ry="0.6" fill="#111" stroke="#222" stroke-width="0.4" transform="rotate(54 391.8 906.5)"/>
<ellipse cx="395.3" cy="906.1" rx="2.0" ry="0.5" fill="#fff" stroke="#222" stroke-width="0.4" transform="rotate(61 395.3 906.1)"/>
<ellipse cx="386.0" cy="907.6" rx="1.4" ry="0.4" fill="#111" stroke="#222" stroke-width="0.4" transform="rotate(50 386.0 907.6)"/>
<ellipse cx="372.7" cy="892.7" rx="1.5" ry="0.6" fill="#fff" stroke="#222" stroke-width="0.4" transform="rotate(243 372.7 892.7)"/>
<ellipse cx="361.0" cy="888.5" rx="1.8" ry="0.5" fill="#fff" stroke="#222" stroke-width="0.4" transform="rotate(233 361.0 888.5)"/>
<ellipse cx="393.3" cy="894.9" rx="1.8" ry="0.6" fill="#fff" stroke="#222" stroke-width="0.4" transform="rotate(367 393.3 894.9)"/>
<ellipse cx="383.0" cy="905.2" rx="1.8" ry="0.6" fill="#fff" stroke="#222" stroke-width="0.4" transform="rotate(66 383.0 905.2)"/>
<ellipse cx="395.4" cy="901.4" rx="1.9" ry="0.7" fill="#fff" stroke="#222" stroke-width="0.4" transform="rotate(-12 395.4 901.4)"/>
<ellipse cx="358.6" cy="911.0" rx="1.4" ry="0.5" fill="#fff" stroke="#222" stroke-width="0.4" transform="rotate(114 358.6 911.0)"/>
<ellipse cx="386.4" cy="900.5" rx="1.8" ry="0.7" fill="#fff" stroke="#222" stroke-width="0.4" transform="rotate(-23 386.4 900.5)"/>
<ellipse cx="377.6" cy="909.8" rx="2.0" ry="0.9" fill="#fff" stroke="#222" stroke-width="0.4" transform="rotate(74 377.6 909.8)"/>
<ellipse cx="385.6" cy="917.3" rx="1.8" ry="0.5" fill="#fff" stroke="#222" stroke-width="0.4" transform="rotate(80 385.6 917.3)"/>
<ellipse cx="386.6" cy="898.2" rx="2.4" ry="0.8" fill="#111" stroke="#222" stroke-width="0.4" transform="rotate(-18 386.6 898.2)"/>
<ellipse cx="392.3" cy="902.3" rx="2.8" ry="1.2" fill="#111" stroke="#222" stroke-width="0.4" transform="rotate(15 392.3 902.3)"/>
<ellipse cx="365.2" cy="916.4" rx="2.5" ry="1.0" fill="#fff" stroke="#222" stroke-width="0.4" transform="rotate(94 365.2 916.4)"/>
<ellipse cx="356.0" cy="900.3" rx="1.6" ry="0.7" fill="#111" stroke="#222" stroke-width="0.4" transform="rotate(203 356.0 900.3)"/>
<ellipse cx="368.8" cy="918.9" rx="1.6" ry="0.7" fill="#fff" stroke="#222" stroke-width="0.4" transform="rotate(106 368.8 918.9)"/>
<ellipse cx="371.3" cy="887.3" rx="1.7" ry="0.5" fill="#fff" stroke="#222" stroke-width="0.4" transform="rotate(268 371.3 887.3)"/>
<ellipse cx="389.4" cy="914.0" rx="1.9" ry="0.6" fill="#fff" stroke="#222" stroke-width="0.4" transform="rotate(42 389.4 914.0)"/>
<ellipse cx="357.1" cy="890.9" rx="2.7" ry="1.2" fill="#fff" stroke="#222" stroke-width="0.4" transform="rotate(222 357.1 890.9)"/>
<ellipse cx="355.4" cy="885.9" rx="2.5" ry="0.9" fill="#111" stroke="#222" stroke-width="0.4" transform="rotate(200 355.4 885.9)"/>
<ellipse cx="372.8" cy="880.1" rx="1.2" ry="0.5" fill="#fff" stroke="#222" stroke-width="0.4" transform="rotate(297 372.8 880.1)"/>
<ellipse cx="392.3" cy="884.2" rx="2.1" ry="0.8" fill="#111" stroke="#222" stroke-width="0.4" transform="rotate(313 392.3 884.2)"/>
<ellipse cx="366.5" cy="908.2" rx="2.7" ry="1.0" fill="#fff" stroke="#222" stroke-width="0.4" transform="rotate(130 366.5 908.2)"/>
<ellipse cx="386.6" cy="909.8" rx="2.3" ry="0.8" fill="#fff" stroke="#222" stroke-width="0.4" transform="rotate(25 386.6 909.8)"/>
<ellipse cx="365.7" cy="915.1" rx="1.4" ry="0.4" fill="#fff" stroke="#222" stroke-width="0.4" transform="rotate(101 365.7 915.1)"/>
<ellipse cx="375.6" cy="878.7" rx="2.7" ry="0.9" fill="#fff" stroke="#222" stroke-width="0.4" transform="rotate(236 375.6 878.7)"/>
<ellipse cx="365.1" cy="901.1" rx="2.3" ry="0.7" fill="#111" stroke="#222" stroke-width="0.4" transform="rotate(139 365.1 901.1)"/>
<ellipse cx="376.3" cy="897.0" rx="1.8" ry="0.5" fill="#fff" stroke="#222" stroke-width="0.4" transform="rotate(316 376.3 897.0)"/>
<ellipse cx="378.6" cy="919.8" rx="2.0" ry="0.8" fill="#fff" stroke="#222" stroke-width="0.4" transform="rotate(52 378.6 919.8)"/>
<ellipse cx="357.5" cy="884.3" rx="1.6" ry="0.5" fill="#fff" stroke="#222" stroke-width="0.4" transform="rotate(247 357.5 884.3)"/>
<ellipse cx="376.8" cy="914.8" rx="2.4" ry="0.8" fill="#fff" stroke="#222" stroke-width="0.4" transform="rotate(96 376.8 914.8)"/>
<ellipse cx="391.6" cy="894.7" rx="2.3" ry="0.7" fill="#111" stroke="#222" stroke-width="0.4" transform="rotate(369 391.6 894.7)"/>
<ellipse cx="360.3" cy="897.7" rx="1.7" ry="0.5" fill="#fff" stroke="#222" stroke-width="0.4" transform="rotate(158 360.3 897.7)"/>
<ellipse cx="374.3" cy="902.7" rx="2.5" ry="0.8" fill="#fff" stroke="#222" stroke-width="0.4" transform="rotate(126 374.3 902.7)"/>
<ellipse cx="357.6" cy="911.8" rx="2.6" ry="0.8" fill="#fff" stroke="#222" stroke-width="0.4" transform="rotate(110 357.6 911.8)"/>
<ellipse cx="384.5" cy="882.4" rx="2.5" ry="0.8" fill="#111" stroke="#222" stroke-width="0.4" transform="rotate(313 384.5 882.4)"/>
<ellipse cx="362.3" cy="905.7" rx="1.8" ry="0.6" fill="#111" stroke="#222" stroke-width="0.4" transform="rotate(171 362.3 905.7)"/>
<ellipse cx="377.7" cy="909.1" rx="2.8" ry="1.0" fill="#fff" stroke="#222" stroke-width="0.4" transform="rotate(38 377.7 909.1)"/>
<ellipse cx="389.3" cy="882.5" rx="1.8" ry="0.7" fill="#111" stroke="#222" stroke-width="0.4" transform="rotate(299 389.3 882.5)"/>
<ellipse cx="388.6" cy="881.6" rx="1.5" ry="0.7" fill="#111" stroke="#222" stroke-width="0.4" transform="rotate(273 388.6 881.6)"/>
<ellipse cx="384.1" cy="898.5" rx="1.5" ry="0.6" fill="#111" stroke="#222" stroke-width="0.4" transform="rotate(-12 384.1 898.5)"/>
<ellipse cx="379.7" cy="909.7" rx="2.6" ry="1.0" fill="#fff" stroke="#222" stroke-width="0.4" transform="rotate(34 379.7 909.7)"/>
<ellipse cx="359.1" cy="894.1" rx="2.0" ry="0.8" fill="#fff" stroke="#222" stroke-width="0.4" transform="rotate(217 359.1 894.1)"/>
<ellipse cx="363.8" cy="885.6" rx="2.2" ry="0.7" fill="#fff" stroke="#222" stroke-width="0.4" transform="rotate(222 363.8 885.6)"/>
<ellipse cx="371.7" cy="885.6" rx="2.7" ry="0.9" fill="#fff" stroke="#222" stroke-width="0.4" transform="rotate(286 371.7 885.6)"/>
<ellipse cx="393.1" cy="892.4" rx="1.9" ry="0.6" fill="#fff" stroke="#222" stroke-width="0.4" transform="rotate(353 393.1 892.4)"/>
<ellipse cx="378.9" cy="890.5" rx="1.3" ry="0.4" fill="#111" stroke="#222" stroke-width="0.4" transform="rotate(269 378.9 890.5)"/>
<ellipse cx="386.1" cy="898.3" rx="1.4" ry="0.5" fill="#fff" stroke="#222" stroke-width="0.4" transform="rotate(12 386.1 898.3)"/>
<ellipse cx="394.1" cy="892.7" rx="2.7" ry="0.7" fill="#fff" stroke="#222" stroke-width="0.4" transform="rotate(324 394.1 892.7)"/>
<ellipse cx="363.8" cy="899.3" rx="2.4" ry="0.8" fill="#111" stroke="#222" stroke-width="0.4" transform="rotate(175 363.8 899.3)"/>
<ellipse cx="374.8" cy="904.6" rx="2.2" ry="1.0" fill="#fff" stroke="#222" stroke-width="0.4" transform="rotate(126 374.8 904.6)"/>
<ellipse cx="387.3" cy="892.0" rx="1.7" ry="0.7" fill="#fff" stroke="#222" stroke-width="0.4" transform="rotate(344 387.3 892.0)"/>
<ellipse cx="385.6" cy="898.6" rx="2.0" ry="0.8" fill="#fff" stroke="#222" stroke-width="0.4" transform="rotate(31 385.6 898.6)"/>
<ellipse cx="366.6" cy="910.0" rx="2.6" ry="1.2" fill="#111" stroke="#222" stroke-width="0.4" transform="rotate(121 366.6 910.0)"/>
<ellipse cx="362.2" cy="885.6" rx="1.8" ry="0.5" fill="#fff" stroke="#222" stroke-width="0.4" transform="rotate(216 362.2 885.6)"/>
<ellipse cx="386.5" cy="910.1" rx="2.7" ry="1.1" fill="#fff" stroke="#222" stroke-width="0.4" transform="rotate(26 386.5 910.1)"/>
<ellipse cx="390.5" cy="909.8" rx="2.2" ry="0.6" fill="#fff" stroke="#222" stroke-width="0.4" transform="rotate(41 390.5 909.8)"/>
<ellipse cx="361.6" cy="891.0" rx="1.7" ry="0.5" fill="#111" stroke="#222" stroke-width="0.4" transform="rotate(248 361.6 891.0)"/>
<ellipse cx="358.5" cy="897.5" rx="1.5" ry="0.5" fill="#111" stroke="#222" stroke-width="0.4" transform="rotate(157 358.5 897.5)"/>
<ellipse cx="365.1" cy="908.0" rx="2.7" ry="0.8" fill="#fff" stroke="#222" stroke-width="0.4" transform="rotate(119 365.1 908.0)"/>
<ellipse cx="360.9" cy="907.9" rx="2.2" ry="0.6" fill="#111" stroke="#222" stroke-width="0.4" transform="rotate(157 360.9 907.9)"/>
<ellipse cx="374.4" cy="918.8" rx="2.8" ry="1.1" fill="#fff" stroke="#222" stroke-width="0.4" transform="rotate(64 374.4 918.8)"/>
<ellipse cx="370.0" cy="918.8" rx="1.6" ry="0.5" fill="#fff" stroke="#222" stroke-width="0.4" transform="rotate(113 370.0 918.8)"/>
<ellipse cx="360.7" cy="889.0" rx="2.7" ry="0.9" fill="#111" stroke="#222" stroke-width="0.4" transform="rotate(247 360.7 889.0)"/>
<ellipse cx="360.6" cy="900.7" rx="2.3" ry="0.9" fill="#fff" stroke="#222" stroke-width="0.4" transform="rotate(147 360.6 900.7)"/>
<ellipse cx="371.9" cy="881.2" rx="2.3" ry="0.8" fill="#111" stroke="#222" stroke-width="0.4" transform="rotate(279 371.9 881.2)"/>
<ellipse cx="373.1" cy="901.2" rx="2.6" ry="1.1" fill="#fff" stroke="#222" stroke-width="0.4" transform="rotate(102 373.1 901.2)"/>
<ellipse cx="381.9" cy="892.4" rx="2.5" ry="0.8" fill="#111" stroke="#222" stroke-width="0.4" transform="rotate(310 381.9 892.4)"/>
<ellipse cx="369.8" cy="900.5" rx="1.3" ry="0.4" fill="#111" stroke="#222" stroke-width="0.4" transform="rotate(134 369.8 900.5)"/>
<ellipse cx="389.9" cy="912.6" rx="1.8" ry="0.6" fill="#fff" stroke="#222" stroke-width="0.4" transform="rotate(52 389.9 912.6)"/>
<ellipse cx="381.2" cy="906.6" rx="2.6" ry="1.1" fill="#fff" stroke="#222" stroke-width="0.4" transform="rotate(87 381.2 906.6)"/>
<ellipse cx="367.6" cy="905.3" rx="2.7" ry="1.1" fill="#fff" stroke="#222" stroke-width="0.4" transform="rotate(136 367.6 905.3)"/>
<ellipse cx="373.2" cy="914.8" rx="2.7" ry="0.7" fill="#111" stroke="#222" stroke-width="0.4" transform="rotate(103 373.2 914.8)"/>
<ellipse cx="385.7" cy="879.4" rx="2.2" ry="0.8" fill="#fff" stroke="#222" stroke-width="0.4" transform="rotate(263 385.7 879.4)"/>
<ellipse cx="365.0" cy="909.2" rx="1.3" ry="0.6" fill="#fff" stroke="#222" stroke-width="0.4" transform="rotate(131 365.0 909.2)"/>
<ellipse cx="386.6" cy="879.1" rx="2.1" ry="0.7" fill="#111" stroke="#222" stroke-width="0.4" transform="rotate(331 386.6 879.1)"/>
<ellipse cx="377.4" cy="895.6" rx="2.5" ry="0.9" fill="#fff" stroke="#222" stroke-width="0.4" transform="rotate(334 377.4 895.6)"/>
<ellipse cx="377.2" cy="912.4" rx="2.5" ry="1.0" fill="#fff" stroke="#222" stroke-width="0.4" transform="rotate(81 377.2 912.4)"/>
<ellipse cx="364.7" cy="878.0" rx="2.2" ry="0.7" fill="#111" stroke="#222" stroke-width="0.4" transform="rotate(227 364.7 878.0)"/>
<ellipse cx="377.9" cy="901.1" rx="2.8" ry="0.8" fill="#111" stroke="#222" stroke-width="0.4" transform="rotate(53 377.9 901.1)"/>
<ellipse cx="391.2" cy="894.1" rx="1.5" ry="0.6" fill="#fff" stroke="#222" stroke-width="0.4" transform="rotate(377 391.2 894.1)"/>
<ellipse cx="376.9" cy="912.4" rx="2.3" ry="0.7" fill="#fff" stroke="#222" stroke-width="0.4" transform="rotate(86 376.9 912.4)"/>
<ellipse cx="374.6" cy="876.4" rx="2.4" ry="0.7" fill="#fff" stroke="#222" stroke-width="0.4" transform="rotate(291 374.6 876.4)"/>
<ellipse cx="376.0" cy="900.7" rx="2.2" ry="0.7" fill="#fff" stroke="#222" stroke-width="0.4" transform="rotate(29 376.0 900.7)"/>
<ellipse cx="362.9" cy="904.5" rx="2.1" ry="0.8" fill="#fff" stroke="#222" stroke-width="0.4" transform="rotate(152 362.9 904.5)"/>
<ellipse cx="385.0" cy="890.5" rx="2.6" ry="0.8" fill="#111" stroke="#222" stroke-width="0.4" transform="rotate(361 385.0 890.5)"/>
<ellipse cx="365.0" cy="918.3" rx="2.3" ry="0.9" fill="#111" stroke="#222" stroke-width="0.4" transform="rotate(91 365.0 918.3)"/>
<ellipse cx="380.2" cy="896.2" rx="1.5" ry="0.5" fill="#fff" stroke="#222" stroke-width="0.4" transform="rotate(371 380.2 896.2)"/>
<ellipse cx="395.1" cy="897.5" rx="1.9" ry="0.8" fill="#111" stroke="#222" stroke-width="0.4" transform="rotate(345 395.1 897.5)"/>
<ellipse cx="395.7" cy="892.1" rx="2.3" ry="0.8" fill="#111" stroke="#222" stroke-width="0.4" transform="rotate(322 395.7 892.1)"/>
<ellipse cx="381.0" cy="900.7" rx="2.0" ry="0.8" fill="#fff" stroke="#222" stroke-width="0.4" transform="rotate(59 381.0 900.7)"/>
<ellipse cx="367.0" cy="883.4" rx="2.4" ry="1.0" fill="#fff" stroke="#222" stroke-width="0.4" transform="rotate(281 367.0 883.4)"/>
<ellipse cx="366.5" cy="881.5" rx="1.5" ry="0.5" fill="#111" stroke="#222" stroke-width="0.4" transform="rotate(240 366.5 881.5)"/>
<ellipse cx="378.9" cy="912.1" rx="1.5" ry="0.6" fill="#fff" stroke="#222" stroke-width="0.4" transform="rotate(59 378.9 912.1)"/>
<ellipse cx="367.6" cy="882.2" rx="1.9" ry="0.6" fill="#fff" stroke="#222" stroke-width="0.4" transform="rotate(222 367.6 882.2)"/>
<ellipse cx="390.6" cy="887.9" rx="2.2" ry="0.6" fill="#111" stroke="#222" stroke-width="0.4" transform="rotate(332 390.6 887.9)"/>
<ellipse cx="366.3" cy="913.8" rx="1.5" ry="0.4" fill="#fff" stroke="#222" stroke-width="0.4" transform="rotate(135 366.3 913.8)"/>
<ellipse cx="381.6" cy="891.7" rx="1.3" ry="0.6" fill="#fff" stroke="#222" stroke-width="0.4" transform="rotate(329 381.6 891.7)"/>
<ellipse cx="365.9" cy="894.6" rx="2.8" ry="1.0" fill="#111" stroke="#222" stroke-width="0.4" transform="rotate(233 365.9 894.6)"/>
<ellipse cx="371.7" cy="914.9" rx="1.6" ry="0.7" fill="#111" stroke="#222" stroke-width="0.4" transform="rotate(80 371.7 914.9)"/>
<ellipse cx="380.8" cy="908.2" rx="2.7" ry="1.2" fill="#fff" stroke="#222" stroke-width="0.4" transform="rotate(72 380.8 908.2)"/>
<ellipse cx="395.1" cy="903.2" rx="1.4" ry="0.4" fill="#fff" stroke="#222" stroke-width="0.4" transform="rotate(10 395.1 903.2)"/>
<ellipse cx="376.8" cy="903.1" rx="2.7" ry="0.7" fill="#111" stroke="#222" stroke-width="0.4" transform="rotate(85 376.8 903.1)"/>
<ellipse cx="371.2" cy="907.9" rx="1.9" ry="0.8" fill="#fff" stroke="#222" stroke-width="0.4" transform="rotate(135 371.2 907.9)"/>
<ellipse cx="382.8" cy="902.9" rx="1.7" ry="0.7" fill="#111" stroke="#222" stroke-width="0.4" transform="rotate(65 382.8 902.9)"/>
<ellipse cx="362.8" cy="917.6" rx="1.4" ry="0.4" fill="#fff" stroke="#222" stroke-width="0.4" transform="rotate(102 362.8 917.6)"/>
<ellipse cx="372.8" cy="917.6" rx="1.4" ry="0.5" fill="#fff" stroke="#222" stroke-width="0.4" transform="rotate(68 372.8 917.6)"/>
<ellipse cx="373.4" cy="875.7" rx="1.9" ry="0.8" fill="#fff" stroke="#222" stroke-width="0.4" transform="rotate(260 373.4 875.7)"/>
<ellipse cx="394.5" cy="885.6" rx="1.4" ry="0.4" fill="#fff" stroke="#222" stroke-width="0.4" transform="rotate(345 394.5 885.6)"/>
<ellipse cx="373.5" cy="918.3" rx="2.0" ry="0.5" fill="#111" stroke="#222" stroke-width="0.4" transform="rotate(59 373.5 918.3)"/>
<ellipse cx="377.5" cy="920.2" rx="2.3" ry="1.0" fill="#111" stroke="#222" stroke-width="0.4" transform="rotate(116 377.5 920.2)"/>
<ellipse cx="368.1" cy="879.8" rx="2.3" ry="0.6" fill="#111" stroke="#222" stroke-width="0.4" transform="rotate(282 368.1 879.8)"/>
<ellipse cx="356.1" cy="904.3" rx="2.4" ry="1.0" fill="#111" stroke="#222" stroke-width="0.4" transform="rotate(145 356.1 904.3)"/>
<ellipse cx="373.7" cy="892.7" rx="2.6" ry="0.8" fill="#111" stroke="#222" stroke-width="0.4" transform="rotate(253 373.7 892.7)"/>
<ellipse cx="372.2" cy="888.2" rx="1.4" ry="0.4" fill="#fff" stroke="#222" stroke-width="0.4" transform="rotate(227 372.2 888.2)"/>
<ellipse cx="376.2" cy="897.6" rx="1.9" ry="0.6" fill="#111" stroke="#222" stroke-width="0.4" transform="rotate(341 376.2 897.6)"/>
<ellipse cx="386.3" cy="907.3" rx="1.6" ry="0.4" fill="#fff" stroke="#222" stroke-width="0.4" transform="rotate(10 386.3 907.3)"/>
<ellipse cx="369.8" cy="874.9" rx="2.5" ry="1.0" fill="#111" stroke="#222" stroke-width="0.4" transform="rotate(237 369.8 874.9)"/>
<ellipse cx="393.7" cy="895.8" rx="2.4" ry="0.7" fill="#fff" stroke="#222" stroke-width="0.4" transform="rotate(378 393.7 895.8)"/>
<ellipse cx="383.6" cy="903.4" rx="2.7" ry="1.0" fill="#111" stroke="#222" stroke-width="0.4" transform="rotate(-1 383.6 903.4)"/>
<ellipse cx="374.4" cy="883.8" rx="2.0" ry="0.5" fill="#fff" stroke="#222" stroke-width="0.4" transform="rotate(244 374.4 883.8)"/>
<ellipse cx="365.3" cy="902.2" rx="1.4" ry="0.5" fill="#111" stroke="#222" stroke-width="0.4" transform="rotate(123 365.3 902.2)"/>
<ellipse cx="369.2" cy="898.6" rx="2.4" ry="1.0" fill="#fff" stroke="#222" stroke-width="0.4" transform="rotate(187 369.2 898.6)"/>
<ellipse cx="382.1" cy="910.9" rx="1.9" ry="0.5" fill="#111" stroke="#222" stroke-width="0.4" transform="rotate(88 382.1 910.9)"/>
<ellipse cx="393.6" cy="895.6" rx="2.8" ry="0.7" fill="#fff" stroke="#222" stroke-width="0.4" transform="rotate(385 393.6 895.6)"/>
<ellipse cx="377.6" cy="880.1" rx="2.2" ry="0.8" fill="#fff" stroke="#222" stroke-width="0.4" transform="rotate(308 377.6 880.1)"/>
<ellipse cx="360.1" cy="893.3" rx="2.2" ry="0.8" fill="#fff" stroke="#222" stroke-width="0.4" transform="rotate(232 360.1 893.3)"/>
<ellipse cx="364.8" cy="915.2" rx="1.6" ry="0.5" fill="#fff" stroke="#222" stroke-width="0.4" transform="rotate(121 364.8 915.2)"/>
<ellipse cx="382.5" cy="901.7" rx="1.5" ry="0.6" fill="#fff" stroke="#222" stroke-width="0.4" transform="rotate(-0 382.5 901.7)"/>
<ellipse cx="385.7" cy="887.3" rx="1.6" ry="0.6" fill="#fff" stroke="#222" stroke-width="0.4" transform="rotate(310 385.7 887.3)"/>
<ellipse cx="382.9" cy="915.2" rx="1.8" ry="0.8" fill="#fff" stroke="#222" stroke-width="0.4" transform="rotate(64 382.9 915.2)"/>
<ellipse cx="395.1" cy="887.0" rx="1.2" ry="0.5" fill="#fff" stroke="#222" stroke-width="0.4" transform="rotate(301 395.1 887.0)"/>
<ellipse cx="377.3" cy="886.2" rx="2.3" ry="0.9" fill="#fff" stroke="#222" stroke-width="0.4" transform="rotate(280 377.3 886.2)"/>
<ellipse cx="356.1" cy="902.8" rx="2.3" ry="0.6" fill="#fff" stroke="#222" stroke-width="0.4" transform="rotate(175 356.1 902.8)"/>
<ellipse cx="385.9" cy="884.9" rx="2.1" ry="0.6" fill="#fff" stroke="#222" stroke-width="0.4" transform="rotate(288 385.9 884.9)"/>
<ellipse cx="395.0" cy="906.2" rx="1.4" ry="0.5" fill="#111" stroke="#222" stroke-width="0.4" transform="rotate(32 395.0 906.2)"/>
<ellipse cx="354.6" cy="904.6" rx="1.8" ry="0.5" fill="#fff" stroke="#222" stroke-width="0.4" transform="rotate(126 354.6 904.6)"/>
<ellipse cx="389.6" cy="909.4" rx="2.2" ry="0.7" fill="#fff" stroke="#222" stroke-width="0.4" transform="rotate(42 389.6 909.4)"/>
<ellipse cx="377.4" cy="908.9" rx="2.7" ry="0.8" fill="#fff" stroke="#222" stroke-width="0.4" transform="rotate(74 377.4 908.9)"/>
<ellipse cx="378.2" cy="876.3" rx="2.4" ry="0.9" fill="#111" stroke="#222" stroke-width="0.4" transform="rotate(283 378.2 876.3)"/>
<ellipse cx="360.6" cy="890.8" rx="2.4" ry="0.8" fill="#111" stroke="#222" stroke-width="0.4" transform="rotate(176 360.6 890.8)"/>
<ellipse cx="382.5" cy="883.2" rx="2.3" ry="0.6" fill="#111" stroke="#222" stroke-width="0.4" transform="rotate(277 382.5 883.2)"/>
<ellipse cx="366.3" cy="898.5" rx="2.7" ry="0.9" fill="#111" stroke="#222" stroke-width="0.4" transform="rotate(134 366.3 898.5)"/>
<ellipse cx="356.0" cy="897.5" rx="2.5" ry="0.7" fill="#fff" stroke="#222" stroke-width="0.4" transform="rotate(218 356.0 897.5)"/>
<ellipse cx="355.6" cy="896.0" rx="1.7" ry="0.5" fill="#fff" stroke="#222" stroke-width="0.4" transform="rotate(146 355.6 896.0)"/>
<ellipse cx="386.5" cy="887.7" rx="2.2" ry="0.7" fill="#111" stroke="#222" stroke-width="0.4" transform="rotate(336 386.5 887.7)"/>
<ellipse cx="374.7" cy="887.9" rx="2.1" ry="0.8" fill="#fff" stroke="#222" stroke-width="0.4" transform="rotate(299 374.7 887.9)"/>
<ellipse cx="383.6" cy="916.8" rx="1.8" ry="0.7" fill="#fff" stroke="#222" stroke-width="0.4" transform="rotate(88 383.6 916.8)"/>
<ellipse cx="387.0" cy="907.3" rx="1.7" ry="0.7" fill="#fff" stroke="#222" stroke-width="0.4" transform="rotate(29 387.0 907.3)"/>
<ellipse cx="378.5" cy="883.1" rx="2.4" ry="0.9" fill="#111" stroke="#222" stroke-width="0.4" transform="rotate(255 378.5 883.1)"/>
<ellipse cx="388.5" cy="913.8" rx="1.8" ry="0.6" fill="#fff" stroke="#222" stroke-width="0.4" transform="rotate(66 388.5 913.8)"/>
<ellipse cx="386.7" cy="912.8" rx="1.6" ry="0.6" fill="#fff" stroke="#222" stroke-width="0.4" transform="rotate(71 386.7 912.8)"/>
<ellipse cx="367.3" cy="893.6" rx="2.6" ry="0.7" fill="#fff" stroke="#222" stroke-width="0.4" transform="rotate(216 367.3 893.6)"/>
<ellipse cx="372.5" cy="913.9" rx="2.3" ry="0.9" fill="#fff" stroke="#222" stroke-width="0.4" transform="rotate(83 372.5 913.9)"/>
<ellipse cx="390.2" cy="885.6" rx="1.5" ry="0.6" fill="#fff" stroke="#222" stroke-width="0.4" transform="rotate(351 390.2 885.6)"/>
<ellipse cx="383.9" cy="890.3" rx="1.7" ry="0.7" fill="#111" stroke="#222" stroke-width="0.4" transform="rotate(303 383.9 890.3)"/>
<ellipse cx="387.6" cy="915.4" rx="2.5" ry="0.7" fill="#111" stroke="#222" stroke-width="0.4" transform="rotate(73 387.6 915.4)"/>
<ellipse cx="372.7" cy="896.0" rx="2.1" ry="0.8" fill="#fff" stroke="#222" stroke-width="0.4" transform="rotate(224 372.7 896.0)"/>
<ellipse cx="386.1" cy="908.4" rx="2.5" ry="0.8" fill="#fff" stroke="#222" stroke-width="0.4" transform="rotate(62 386.1 908.4)"/>
<ellipse cx="381.6" cy="878.8" rx="1.7" ry="0.7" fill="#fff" stroke="#222" stroke-width="0.4" transform="rotate(316 381.6 878.8)"/>
<ellipse cx="371.4" cy="882.9" rx="2.1" ry="0.7" fill="#111" stroke="#222" stroke-width="0.4" transform="rotate(256 371.4 882.9)"/>
<ellipse cx="388.9" cy="886.4" rx="2.2" ry="0.8" fill="#111" stroke="#222" stroke-width="0.4" transform="rotate(319 388.9 886.4)"/>
<ellipse cx="364.9" cy="885.2" rx="1.8" ry="0.6" fill="#fff" stroke="#222" stroke-width="0.4" transform="rotate(203 364.9 885.2)"/>
<ellipse cx="377.3" cy="883.8" rx="1.5" ry="0.6" fill="#111" stroke="#222" stroke-width="0.4" transform="rotate(291 377.3 883.8)"/>
<ellipse cx="389.4" cy="907.3" rx="1.6" ry="0.7" fill="#111" stroke="#222" stroke-width="0.4" transform="rotate(50 389.4 907.3)"/>
<ellipse cx="368.6" cy="901.5" rx="1.6" ry="0.6" fill="#fff" stroke="#222" stroke-width="0.4" transform="rotate(177 368.6 901.5)"/>
<ellipse cx="386.0" cy="894.9" rx="1.4" ry="0.6" fill="#111" stroke="#222" stroke-width="0.4" transform="rotate(337 386.0 894.9)"/>
<ellipse cx="357.1" cy="904.0" rx="1.6" ry="0.4" fill="#fff" stroke="#222" stroke-width="0.4" transform="rotate(168 357.1 904.0)"/>
<ellipse cx="365.7" cy="894.2" rx="2.6" ry="0.9" fill="#fff" stroke="#222" stroke-width="0.4" transform="rotate(205 365.7 894.2)"/>
<ellipse cx="385.4" cy="910.0" rx="1.9" ry="0.7" fill="#111" stroke="#222" stroke-width="0.4" transform="rotate(26 385.4 910.0)"/>
<ellipse cx="376.9" cy="915.1" rx="1.7" ry="0.7" fill="#fff" stroke="#222" stroke-width="0.4" transform="rotate(111 376.9 915.1)"/>
<ellipse cx="356.6" cy="909.5" rx="2.1" ry="0.9" fill="#111" stroke="#222" stroke-width="0.4" transform="rotate(183 356.6 909.5)"/>
<ellipse cx="376.0" cy="875.4" rx="1.8" ry="0.6" fill="#fff" stroke="#222" stroke-width="0.4" transform="rotate(237 376.0 875.4)"/>
<ellipse cx="375.0" cy="899.8" rx="1.3" ry="0.5" fill="#fff" stroke="#222" stroke-width="0.4" transform="rotate(89 375.0 899.8)"/>
<ellipse cx="370.5" cy="891.3" rx="2.7" ry="1.1" fill="#fff" stroke="#222" stroke-width="0.4" transform="rotate(264 370.5 891.3)"/>
<ellipse cx="384.3" cy="881.0" rx="2.4" ry="0.6" fill="#111" stroke="#222" stroke-width="0.4" transform="rotate(340 384.3 881.0)"/>
<ellipse cx="358.6" cy="905.7" rx="2.0" ry="0.6" fill="#111" stroke="#222" stroke-width="0.4" transform="rotate(154 358.6 905.7)"/>
<ellipse cx="372.3" cy="894.2" rx="1.8" ry="0.7" fill="#111" stroke="#222" stroke-width="0.4" transform="rotate(235 372.3 894.2)"/>
<ellipse cx="352.5" cy="903.4" rx="2.0" ry="0.8" fill="#fff" stroke="#222" stroke-width="0.4" transform="rotate(156 352.5 903.4)"/>
<ellipse cx="353.5" cy="894.4" rx="2.2" ry="0.9" fill="#fff" stroke="#222" stroke-width="0.4" transform="rotate(180 353.5 894.4)"/>
<ellipse cx="396.6" cy="896.0" rx="2.7" ry="0.9" fill="#fff" stroke="#222" stroke-width="0.4" transform="rotate(343 396.6 896.0)"/>
<ellipse cx="382.7" cy="881.6" rx="2.1" ry="0.5" fill="#111" stroke="#222" stroke-width="0.4" transform="rotate(302 382.7 881.6)"/>
<ellipse cx="363.4" cy="895.9" rx="2.2" ry="0.6" fill="#fff" stroke="#222" stroke-width="0.4" transform="rotate(176 363.4 895.9)"/>
<ellipse cx="366.9" cy="893.6" rx="2.8" ry="0.7" fill="#fff" stroke="#222" stroke-width="0.4" transform="rotate(202 366.9 893.6)"/>
<ellipse cx="357.8" cy="888.4" rx="2.6" ry="0.7" fill="#111" stroke="#222" stroke-width="0.4" transform="rotate(210 357.8 888.4)"/>
<ellipse cx="361.4" cy="888.3" rx="2.2" ry="0.9" fill="#fff" stroke="#222" stroke-width="0.4" transform="rotate(216 361.4 888.3)"/>
<ellipse cx="365.4" cy="894.4" rx="2.7" ry="0.9" fill="#fff" stroke="#222" stroke-width="0.4" transform="rotate(200 365.4 894.4)"/>
<ellipse cx="386.1" cy="877.4" rx="2.3" ry="0.8" fill="#fff" stroke="#222" stroke-width="0.4" transform="rotate(294 386.1 877.4)"/>
<ellipse cx="372.7" cy="896.0" rx="2.1" ry="0.8" fill="#fff" stroke="#222" stroke-width="0.4" transform="rotate(212 372.7 896.0)"/>
<ellipse cx="373.2" cy="875.6" rx="1.7" ry="0.6" fill="#111" stroke="#222" stroke-width="0.4" transform="rotate(272 373.2 875.6)"/>
<ellipse cx="372.3" cy="904.4" rx="2.5" ry="0.8" fill="#111" stroke="#222" stroke-width="0.4" transform="rotate(95 372.3 904.4)"/>
<ellipse cx="358.9" cy="891.9" rx="2.6" ry="0.7" fill="#fff" stroke="#222" stroke-width="0.4" transform="rotate(188 358.9 891.9)"/>
<ellipse cx="376.0" cy="892.0" rx="1.9" ry="0.9" fill="#111" stroke="#222" stroke-width="0.4" transform="rotate(324 376.0 892.0)"/>
<ellipse cx="373.9" cy="884.2" rx="1.3" ry="0.6" fill="#fff" stroke="#222" stroke-width="0.4" transform="rotate(238 373.9 884.2)"/>
<ellipse cx="353.7" cy="904.2" rx="2.0" ry="0.8" fill="#111" stroke="#222" stroke-width="0.4" transform="rotate(182 353.7 904.2)"/>
<ellipse cx="384.0" cy="899.2" rx="2.2" ry="0.6" fill="#111" stroke="#222" stroke-width="0.4" transform="rotate(-25 384.0 899.2)"/>
<ellipse cx="386.7" cy="902.0" rx="2.2" ry="0.7" fill="#111" stroke="#222" stroke-width="0.4" transform="rotate(43 386.7 902.0)"/>
<ellipse cx="364.5" cy="908.9" rx="2.6" ry="0.7" fill="#111" stroke="#222" stroke-width="0.4" transform="rotate(156 364.5 908.9)"/>
<ellipse cx="391.6" cy="894.5" rx="2.4" ry="0.8" fill="#fff" stroke="#222" stroke-width="0.4" transform="rotate(363 391.6 894.5)"/>
<ellipse cx="380.7" cy="905.9" rx="2.7" ry="0.8" fill="#111" stroke="#222" stroke-width="0.4" transform="rotate(32 380.7 905.9)"/>
<ellipse cx="369.6" cy="877.4" rx="1.3" ry="0.5" fill="#fff" stroke="#222" stroke-width="0.4" transform="rotate(226 369.6 877.4)"/>
<ellipse cx="362.6" cy="896.7" rx="1.7" ry="0.6" fill="#111" stroke="#222" stroke-width="0.4" transform="rotate(208 362.6 896.7)"/>
<ellipse cx="376.9" cy="920.8" rx="1.6" ry="0.4" fill="#fff" stroke="#222" stroke-width="0.4" transform="rotate(118 376.9 920.8)"/>
<ellipse cx="378.2" cy="914.4" rx="2.6" ry="0.8" fill="#111" stroke="#222" stroke-width="0.4" transform="rotate(64 378.2 914.4)"/>
<ellipse cx="387.0" cy="911.0" rx="2.0" ry="0.8" fill="#111" stroke="#222" stroke-width="0.4" transform="rotate(42 387.0 911.0)"/>
<ellipse cx="367.5" cy="903.2" rx="2.0" ry="0.8" fill="#fff" stroke="#222" stroke-width="0.4" transform="rotate(116 367.5 903.2)"/>
<ellipse cx="394.0" cy="897.4" rx="1.7" ry="0.6" fill="#111" stroke="#222" stroke-width="0.4" transform="rotate(328 394.0 897.4)"/>
<ellipse cx="381.5" cy="879.3" rx="2.2" ry="0.8" fill="#fff" stroke="#222" stroke-width="0.4" transform="rotate(279 381.5 879.3)"/>
<ellipse cx="353.1" cy="895.7" rx="2.4" ry="0.8" fill="#111" stroke="#222" stroke-width="0.4" transform="rotate(211 353.1 895.7)"/>
<ellipse cx="358.3" cy="883.3" rx="2.7" ry="1.0" fill="#111" stroke="#222" stroke-width="0.4" transform="rotate(198 358.3 883.3)"/>
<ellipse cx="380.7" cy="886.3" rx="1.4" ry="0.5" fill="#fff" stroke="#222" stroke-width="0.4" transform="rotate(292 380.7 886.3)"/>
<ellipse cx="381.6" cy="912.9" rx="2.7" ry="0.8" fill="#111" stroke="#222" stroke-width="0.4" transform="rotate(56 381.6 912.9)"/>
<ellipse cx="380.5" cy="904.2" rx="1.7" ry="0.6" fill="#fff" stroke="#222" stroke-width="0.4" transform="rotate(18 380.5 904.2)"/>
<ellipse cx="365.3" cy="906.9" rx="2.6" ry="1.0" fill="#111" stroke="#222" stroke-width="0.4" transform="rotate(130 365.3 906.9)"/>
<ellipse cx="355.5" cy="896.5" rx="2.4" ry="0.9" fill="#111" stroke="#222" stroke-width="0.4" transform="rotate(144 355.5 896.5)"/>
<ellipse cx="391.8" cy="897.3" rx="2.0" ry="0.6" fill="#fff" stroke="#222" stroke-width="0.4" transform="rotate(382 391.8 897.3)"/>
<ellipse cx="369.9" cy="909.1" rx="1.3" ry="0.4" fill="#fff" stroke="#222" stroke-width="0.4" transform="rotate(113 369.9 909.1)"/>
<ellipse cx="381.7" cy="898.1" rx="1.6" ry="0.7" fill="#fff" stroke="#222" stroke-width="0.4" transform="rotate(40 381.7 898.1)"/>
<ellipse cx="360.3" cy="898.3" rx="2.6" ry="1.1" fill="#fff" stroke="#222" stroke-width="0.4" transform="rotate(189 360.3 898.3)"/>
<ellipse cx="390.2" cy="891.2" rx="1.6" ry="0.6" fill="#111" stroke="#222" stroke-width="0.4" transform="rotate(372 390.2 891.2)"/>
<ellipse cx="359.0" cy="911.3" rx="2.5" ry="0.6" fill="#111" stroke="#222" stroke-width="0.4" transform="rotate(163 359.0 911.3)"/>
<ellipse cx="378.0" cy="901.4" rx="1.9" ry="0.7" fill="#fff" stroke="#222" stroke-width="0.4" transform="rotate(20 378.0 901.4)"/>
<ellipse cx="383.3" cy="918.5" rx="2.8" ry="0.9" fill="#111" stroke="#222" stroke-width="0.4" transform="rotate(29 383.3 918.5)"/>
<ellipse cx="360.7" cy="894.7" rx="2.4" ry="0.8" fill="#111" stroke="#222" stroke-width="0.4" transform="rotate(173 360.7 894.7)"/>
<ellipse cx="394.9" cy="896.6" rx="2.3" ry="0.7" fill="#fff" stroke="#222" stroke-width="0.4" transform="rotate(353 394.9 896.6)"/>
<ellipse cx="366.9" cy="887.8" rx="1.8" ry="0.7" fill="#fff" stroke="#222" stroke-width="0.4" transform="rotate(197 366.9 887.8)"/>
<ellipse cx="369.8" cy="881.5" rx="2.1" ry="0.9" fill="#fff" stroke="#222" stroke-width="0.4" transform="rotate(240 369.8 881.5)"/>
<ellipse cx="371.0" cy="877.8" rx="1.3" ry="0.5" fill="#111" stroke="#222" stroke-width="0.4" transform="rotate(250 371.0 877.8)"/>
<ellipse cx="384.5" cy="891.1" rx="1.9" ry="0.6" fill="#111" stroke="#222" stroke-width="0.4" transform="rotate(296 384.5 891.1)"/>
<ellipse cx="360.1" cy="885.5" rx="2.4" ry="0.7" fill="#fff" stroke="#222" stroke-width="0.4" transform="rotate(202 360.1 885.5)"/>
<ellipse cx="354.4" cy="894.6" rx="1.9" ry="0.6" fill="#fff" stroke="#222" stroke-width="0.4" transform="rotate(151 354.4 894.6)"/>
<ellipse cx="390.8" cy="886.5" rx="1.5" ry="0.6" fill="#111" stroke="#222" stroke-width="0.4" transform="rotate(340 390.8 886.5)"/>
<ellipse cx="358.6" cy="913.2" rx="1.6" ry="0.6" fill="#111" stroke="#222" stroke-width="0.4" transform="rotate(99 358.6 913.2)"/>
<ellipse cx="386.9" cy="901.2" rx="2.7" ry="1.0" fill="#111" stroke="#222" stroke-width="0.4" transform="rotate(14 386.9 901.2)"/>
<ellipse cx="366.5" cy="894.7" rx="1.3" ry="0.4" fill="#fff" stroke="#222" stroke-width="0.4" transform="rotate(181 366.5 894.7)"/>
<ellipse cx="357.1" cy="890.3" rx="1.6" ry="0.5" fill="#111" stroke="#222" stroke-width="0.4" transform="rotate(172 357.1 890.3)"/>
<ellipse cx="393.6" cy="896.9" rx="1.7" ry="0.7" fill="#fff" stroke="#222" stroke-width="0.4" transform="rotate(390 393.6 896.9)"/>
<ellipse cx="365.2" cy="896.2" rx="1.3" ry="0.3" fill="#fff" stroke="#222" stroke-width="0.4" transform="rotate(215 365.2 896.2)"/>
<ellipse cx="368.3" cy="878.7" rx="1.4" ry="0.5" fill="#111" stroke="#222" stroke-width="0.4" transform="rotate(213 368.3 878.7)"/>
<ellipse cx="372.9" cy="896.3" rx="1.9" ry="0.6" fill="#111" stroke="#222" stroke-width="0.4" transform="rotate(253 372.9 896.3)"/>
<ellipse cx="379.8" cy="916.3" rx="1.4" ry="0.6" fill="#fff" stroke="#222" stroke-width="0.4" transform="rotate(108 379.8 916.3)"/>
<ellipse cx="367.0" cy="890.9" rx="1.5" ry="0.6" fill="#fff" stroke="#222" stroke-width="0.4" transform="rotate(218 367.0 890.9)"/>
<ellipse cx="378.9" cy="914.8" rx="2.6" ry="0.8" fill="#111" stroke="#222" stroke-width="0.4" transform="rotate(102 378.9 914.8)"/>
<ellipse cx="372.0" cy="893.6" rx="1.6" ry="0.4" fill="#fff" stroke="#222" stroke-width="0.4" transform="rotate(215 372.0 893.6)"/>
<ellipse cx="382.4" cy="878.1" rx="2.7" ry="0.8" fill="#fff" stroke="#222" stroke-width="0.4" transform="rotate(327 382.4 878.1)"/>
<ellipse cx="364.4" cy="880.4" rx="1.6" ry="0.5" fill="#111" stroke="#222" stroke-width="0.4" transform="rotate(235 364.4 880.4)"/>
<ellipse cx="371.5" cy="876.0" rx="2.3" ry="0.6" fill="#fff" stroke="#222" stroke-width="0.4" transform="rotate(286 371.5 876.0)"/>
<ellipse cx="384.5" cy="896.7" rx="2.7" ry="0.9" fill="#111" stroke="#222" stroke-width="0.4" transform="rotate(359 384.5 896.7)"/>
<ellipse cx="374.3" cy="913.0" rx="2.1" ry="0.6" fill="#fff" stroke="#222" stroke-width="0.4" transform="rotate(95 374.3 913.0)"/>
<ellipse cx="378.0" cy="916.2" rx="1.7" ry="0.4" fill="#fff" stroke="#222" stroke-width="0.4" transform="rotate(58 378.0 916.2)"/>
<ellipse cx="369.8" cy="893.6" rx="2.6" ry="0.7" fill="#111" stroke="#222" stroke-width="0.4" transform="rotate(258 369.8 893.6)"/>
<ellipse cx="369.6" cy="910.4" rx="2.3" ry="0.6" fill="#fff" stroke="#222" stroke-width="0.4" transform="rotate(87 369.6 910.4)"/>
<ellipse cx="379.2" cy="895.0" rx="1.4" ry="0.4" fill="#fff" stroke="#222" stroke-width="0.4" transform="rotate(320 379.2 895.0)"/>
<ellipse cx="391.9" cy="891.0" rx="1.7" ry="0.5" fill="#111" stroke="#222" stroke-width="0.4" transform="rotate(304 391.9 891.0)"/>
<ellipse cx="388.6" cy="881.1" rx="1.8" ry="0.5" fill="#111" stroke="#222" stroke-width="0.4" transform="rotate(340 388.6 881.1)"/>
<ellipse cx="356.1" cy="910.1" rx="1.2" ry="0.4" fill="#fff" stroke="#222" stroke-width="0.4" transform="rotate(122 356.1 910.1)"/>
<ellipse cx="395.5" cy="888.6" rx="2.4" ry="1.0" fill="#fff" stroke="#222" stroke-width="0.4" transform="rotate(327 395.5 888.6)"/>
<ellipse cx="371.6" cy="875.5" rx="1.8" ry="0.7" fill="#fff" stroke="#222" stroke-width="0.4" transform="rotate(238 371.6 875.5)"/>
<ellipse cx="393.6" cy="891.2" rx="2.4" ry="0.7" fill="#fff" stroke="#222" stroke-width="0.4" transform="rotate(331 393.6 891.2)"/>
<ellipse cx="378.3" cy="886.9" rx="2.1" ry="0.8" fill="#111" stroke="#222" stroke-width="0.4" transform="rotate(305 378.3 886.9)"/>
<ellipse cx="385.8" cy="905.9" rx="1.5" ry="0.5" fill="#111" stroke="#222" stroke-width="0.4" transform="rotate(38 385.8 905.9)"/>
<ellipse cx="395.1" cy="889.0" rx="1.5" ry="0.5" fill="#111" stroke="#222" stroke-width="0.4" transform="rotate(374 395.1 889.0)"/>
<ellipse cx="382.0" cy="909.7" rx="2.5" ry="0.7" fill="#fff" stroke="#222" stroke-width="0.4" transform="rotate(60 382.0 909.7)"/>
<ellipse cx="363.5" cy="886.5" rx="2.2" ry="0.9" fill="#111" stroke="#222" stroke-width="0.4" transform="rotate(224 363.5 886.5)"/>
<ellipse cx="360.1" cy="882.2" rx="1.4" ry="0.5" fill="#111" stroke="#222" stroke-width="0.4" transform="rotate(221 360.1 882.2)"/>
<ellipse cx="371.5" cy="903.2" rx="2.5" ry="0.9" fill="#fff" stroke="#222" stroke-width="0.4" transform="rotate(113 371.5 903.2)"/>
<ellipse cx="381.4" cy="884.7" rx="1.3" ry="0.5" fill="#fff" stroke="#222" stroke-width="0.4" transform="rotate(277 381.4 884.7)"/>
<ellipse cx="391.4" cy="910.0" rx="2.6" ry="0.7" fill="#111" stroke="#222" stroke-width="0.4" transform="rotate(61 391.4 910.0)"/>
<ellipse cx="385.3" cy="911.5" rx="1.6" ry="0.5" fill="#fff" stroke="#222" stroke-width="0.4" transform="rotate(41 385.3 911.5)"/>
<ellipse cx="377.9" cy="875.9" rx="1.6" ry="0.5" fill="#fff" stroke="#222" stroke-width="0.4" transform="rotate(306 377.9 875.9)"/>
<ellipse cx="386.9" cy="908.7" rx="1.6" ry="0.6" fill="#111" stroke="#222" stroke-width="0.4" transform="rotate(34 386.9 908.7)"/>
<ellipse cx="374.6" cy="875.5" rx="1.4" ry="0.4" fill="#111" stroke="#222" stroke-width="0.4" transform="rotate(270 374.6 875.5)"/>
<ellipse cx="389.5" cy="894.0" rx="1.3" ry="0.4" fill="#111" stroke="#222" stroke-width="0.4" transform="rotate(324 389.5 894.0)"/>
<ellipse cx="357.3" cy="883.8" rx="1.8" ry="0.7" fill="#fff" stroke="#222" stroke-width="0.4" transform="rotate(256 357.3 883.8)"/>
<ellipse cx="358.4" cy="912.7" rx="2.3" ry="0.8" fill="#111" stroke="#222" stroke-width="0.4" transform="rotate(162 358.4 912.7)"/>
<ellipse cx="383.6" cy="904.4" rx="1.7" ry="0.7" fill="#111" stroke="#222" stroke-width="0.4" transform="rotate(16 383.6 904.4)"/>
<ellipse cx="390.7" cy="911.0" rx="2.0" ry="0.9" fill="#111" stroke="#222" stroke-width="0.4" transform="rotate(26 390.7 911.0)"/>
<ellipse cx="382.8" cy="916.2" rx="2.0" ry="0.8" fill="#fff" stroke="#222" stroke-width="0.4" transform="rotate(101 382.8 916.2)"/>
<ellipse cx="392.6" cy="909.4" rx="2.6" ry="1.0" fill="#fff" stroke="#222" stroke-width="0.4" transform="rotate(35 392.6 909.4)"/>
<ellipse cx="372.3" cy="900.3" rx="2.7" ry="0.9" fill="#fff" stroke="#222" stroke-width="0.4" transform="rotate(116 372.3 900.3)"/>
<ellipse cx="387.3" cy="889.0" rx="2.4" ry="1.1" fill="#fff" stroke="#222" stroke-width="0.4" transform="rotate(328 387.3 889.0)"/>
<ellipse cx="382.4" cy="894.5" rx="2.3" ry="0.7" fill="#fff" stroke="#222" stroke-width="0.4" transform="rotate(324 382.4 894.5)"/>
<ellipse cx="394.3" cy="908.1" rx="2.3" ry="1.0" fill="#fff" stroke="#222" stroke-width="0.4" transform="rotate(55 394.3 908.1)"/>
<ellipse cx="368.5" cy="901.9" rx="2.7" ry="1.1" fill="#111" stroke="#222" stroke-width="0.4" transform="rotate(130 368.5 901.9)"/>
<ellipse cx="387.6" cy="894.8" rx="1.5" ry="0.4" fill="#fff" stroke="#222" stroke-width="0.4" transform="rotate(364 387.6 894.8)"/>
<ellipse cx="372.2" cy="916.9" rx="2.2" ry="0.8" fill="#fff" stroke="#222" stroke-width="0.4" transform="rotate(69 372.2 916.9)"/>
<ellipse cx="380.5" cy="902.3" rx="2.2" ry="0.9" fill="#fff" stroke="#222" stroke-width="0.4" transform="rotate(52 380.5 902.3)"/>
<ellipse cx="386.2" cy="882.5" rx="2.7" ry="1.2" fill="#111" stroke="#222" stroke-width="0.4" transform="rotate(335 386.2 882.5)"/>
<ellipse cx="370.7" cy="913.0" rx="2.1" ry="0.7" fill="#fff" stroke="#222" stroke-width="0.4" transform="rotate(135 370.7 913.0)"/>
<ellipse cx="395.1" cy="886.8" rx="1.3" ry="0.4" fill="#111" stroke="#222" stroke-width="0.4" transform="rotate(371 395.1 886.8)"/>
<ellipse cx="367.2" cy="904.4" rx="2.3" ry="0.8" fill="#fff" stroke="#222" stroke-width="0.4" transform="rotate(166 367.2 904.4)"/>
<ellipse cx="384.2" cy="889.0" rx="2.2" ry="1.0" fill="#fff" stroke="#222" stroke-width="0.4" transform="rotate(312 384.2 889.0)"/>
<ellipse cx="392.1" cy="896.6" rx="1.2" ry="0.4" fill="#111" stroke="#222" stroke-width="0.4" transform="rotate(327 392.1 896.6)"/>
<ellipse cx="389.1" cy="883.5" rx="1.8" ry="0.8" fill="#111" stroke="#222" stroke-width="0.4" transform="rotate(294 389.1 883.5)"/>
<ellipse cx="389.8" cy="903.5" rx="1.6" ry="0.6" fill="#fff" stroke="#222" stroke-width="0.4" transform="rotate(58 389.8 903.5)"/>
<ellipse cx="378.4" cy="890.8" rx="2.4" ry="0.7" fill="#fff" stroke="#222" stroke-width="0.4" transform="rotate(329 378.4 890.8)"/>
<ellipse cx="365.0" cy="909.0" rx="1.6" ry="0.6" fill="#111" stroke="#222" stroke-width="0.4" transform="rotate(129 365.0 909.0)"/>
<ellipse cx="371.8" cy="911.9" rx="1.6" ry="0.5" fill="#fff" stroke="#222" stroke-width="0.4" transform="rotate(104 371.8 911.9)"/>
<ellipse cx="393.9" cy="898.2" rx="1.5" ry="0.5" fill="#111" stroke="#222" stroke-width="0.4" transform="rotate(26 393.9 898.2)"/>
<ellipse cx="378.2" cy="891.8" rx="1.7" ry="0.4" fill="#fff" stroke="#222" stroke-width="0.4" transform="rotate(275 378.2 891.8)"/>
<ellipse cx="392.8" cy="888.4" rx="1.5" ry="0.6" fill="#111" stroke="#222" stroke-width="0.4" transform="rotate(344 392.8 888.4)"/>
<ellipse cx="394.4" cy="906.3" rx="2.7" ry="0.9" fill="#fff" stroke="#222" stroke-width="0.4" transform="rotate(-8 394.4 906.3)"/>
<ellipse cx="376.2" cy="902.6" rx="2.8" ry="0.8" fill="#fff" stroke="#222" stroke-width="0.4" transform="rotate(49 376.2 902.6)"/>
<ellipse cx="370.9" cy="879.1" rx="1.5" ry="0.6" fill="#111" stroke="#222" stroke-width="0.4" transform="rotate(249 370.9 879.1)"/>
<ellipse cx="377.1" cy="886.8" rx="1.9" ry="0.6" fill="#fff" stroke="#222" stroke-width="0.4" transform="rotate(282 377.1 886.8)"/>
<ellipse cx="391.0" cy="914.4" rx="2.0" ry="0.8" fill="#111" stroke="#222" stroke-width="0.4" transform="rotate(41 391.0 914.4)"/>
<ellipse cx="368.7" cy="895.2" rx="1.5" ry="0.4" fill="#111" stroke="#222" stroke-width="0.4" transform="rotate(178 368.7 895.2)"/>
<ellipse cx="385.1" cy="917.5" rx="1.3" ry="0.4" fill="#fff" stroke="#222" stroke-width="0.4" transform="rotate(27 385.1 917.5)"/>
<ellipse cx="387.5" cy="886.2" rx="1.8" ry="0.7" fill="#fff" stroke="#222" stroke-width="0.4" transform="rotate(326 387.5 886.2)"/>
<ellipse cx="372.5" cy="885.9" rx="1.3" ry="0.4" fill="#fff" stroke="#222" stroke-width="0.4" transform="rotate(238 372.5 885.9)"/>
<ellipse cx="377.7" cy="892.7" rx="2.1" ry="0.8" fill="#111" stroke="#222" stroke-width="0.4" transform="rotate(300 377.7 892.7)"/>
<ellipse cx="395.4" cy="897.0" rx="2.4" ry="1.0" fill="#fff" stroke="#222" stroke-width="0.4" transform="rotate(392 395.4 897.0)"/>
<ellipse cx="378.3" cy="878.9" rx="1.2" ry="0.4" fill="#fff" stroke="#222" stroke-width="0.4" transform="rotate(268 378.3 878.9)"/>
<ellipse cx="394.1" cy="901.6" rx="1.9" ry="0.5" fill="#111" stroke="#222" stroke-width="0.4" transform="rotate(1 394.1 901.6)"/>
<ellipse cx="368.7" cy="887.2" rx="1.6" ry="0.7" fill="#fff" stroke="#222" stroke-width="0.4" transform="rotate(233 368.7 887.2)"/>
<ellipse cx="383.8" cy="908.6" rx="1.5" ry="0.4" fill="#fff" stroke="#222" stroke-width="0.4" transform="rotate(50 383.8 908.6)"/>
<ellipse cx="352.4" cy="897.2" rx="1.7" ry="0.5" fill="#111" stroke="#222" stroke-width="0.4" transform="rotate(208 352.4 897.2)"/>
<ellipse cx="369.2" cy="916.4" rx="2.8" ry="1.0" fill="#111" stroke="#222" stroke-width="0.4" transform="rotate(107 369.2 916.4)"/>
<ellipse cx="387.3" cy="903.3" rx="1.5" ry="0.6" fill="#111" stroke="#222" stroke-width="0.4" transform="rotate(-6 387.3 903.3)"/>
<ellipse cx="373.8" cy="901.4" rx="2.5" ry="0.8" fill="#fff" stroke="#222" stroke-width="0.4" transform="rotate(115 373.8 901.4)"/>
<ellipse cx="371.2" cy="881.0" rx="1.5" ry="0.6" fill="#111" stroke="#222" stroke-width="0.4" transform="rotate(246 371.2 881.0)"/>
<ellipse cx="385.3" cy="878.5" rx="2.6" ry="1.1" fill="#fff" stroke="#222" stroke-width="0.4" transform="rotate(308 385.3 878.5)"/>
<ellipse cx="358.8" cy="881.8" rx="1.5" ry="0.4" fill="#111" stroke="#222" stroke-width="0.4" transform="rotate(193 358.8 881.8)"/>
<ellipse cx="392.0" cy="895.9" rx="1.7" ry="0.6" fill="#fff" stroke="#222" stroke-width="0.4" transform="rotate(340 392.0 895.9)"/>
<ellipse cx="371.9" cy="878.0" rx="2.1" ry="0.7" fill="#111" stroke="#222" stroke-width="0.4" transform="rotate(237 371.9 878.0)"/>
<ellipse cx="385.7" cy="906.0" rx="2.6" ry="1.1" fill="#fff" stroke="#222" stroke-width="0.4" transform="rotate(12 385.7 906.0)"/>
</g>
<polygon points="847.5,605.0 881.3,593.8 938.5,772.0 905.0,783.5" fill="#fff" stroke="#222" stroke-width="0.8" />
<line x1="857.9" y1="637.4" x2="891.7" y2="626.1" stroke="#222" stroke-width="0.7" />
<line x1="866.8" y1="665.0" x2="900.5" y2="653.7" stroke="#222" stroke-width="0.7" />
<line x1="878.2" y1="700.2" x2="911.8" y2="688.8" stroke="#222" stroke-width="0.7" />
<line x1="886.4" y1="725.9" x2="920.0" y2="714.5" stroke="#222" stroke-width="0.7" />
<line x1="850.2" y1="604.1" x2="860.6" y2="636.5" stroke="#222" stroke-width="0.6" />
<g transform="translate(868.5 616) rotate(-18)" stroke="#222" stroke-width="0.9"><line x1="-3" y1="-3" x2="3" y2="3"/><line x1="-3" y1="3" x2="3" y2="-3"/></g>
<g transform="translate(889.5 676.5) rotate(-18)" fill="none" stroke="#222" stroke-width="0.8"><rect x="-15" y="-15.5" width="30" height="31"/><circle cx="-7" cy="-7" r="3.4"/><circle cx="6.5" cy="-7.5" r="4.6"/><circle cx="6.5" cy="-7.5" r="2.8"/><circle cx="7" cy="7" r="3.8"/><rect x="-10.5" y="3" width="8" height="9"/><circle cx="-6.5" cy="7.5" r="2.4"/></g>
<g transform="translate(915.5 746) rotate(-18)" fill="none" stroke="#222" stroke-width="0.8"><rect x="-16" y="-17" width="31" height="34"/><rect x="-13" y="-14" width="25" height="28"/><circle cx="-2" cy="0" r="1.5"/><line x1="-0.5" y1="0" x2="13" y2="0" stroke-width="1.4"/></g>
<polygon points="905.0,783.5 938.5,772.0 954.5,820.5 922.8,832.0" fill="url(#pCab)" stroke="#333" stroke-width="2" />
<polygon points="1238.0,343.0 1281.0,329.0 1304.5,415.0 1262.7,429.0" fill="#fff" stroke="#333" stroke-width="0.9" />
<line x1="1239.7" y1="342.4" x2="1264.4" y2="428.4" stroke="#555" stroke-width="0.6" />
<line x1="1279.3" y1="329.6" x2="1302.8" y2="415.6" stroke="#555" stroke-width="0.6" />
<line x1="1235.0" y1="344.0" x2="1284.0" y2="328.0" stroke="#111" stroke-width="3" />
<line x1="1259.7" y1="430.0" x2="1307.5" y2="414.0" stroke="#111" stroke-width="3" />
<line x1="1251.6" y1="390.3" x2="1293.9" y2="376.3" stroke="#666" stroke-width="0.8" stroke-dasharray="14 6"/>
<circle cx="899.6" cy="553.2" r="3.4" fill="#d41111" stroke="#300" stroke-width="0.8"/>
<circle cx="1343.6" cy="422.0" r="3.4" fill="#d41111" stroke="#300" stroke-width="0.8"/>
<path d="M210.3 695.8 C214.4 700.5 226.1 711.8 235.0 724.0 C243.9 736.2 256.0 756.3 264.0 769.0 C272.0 781.7 275.0 787.1 283.0 800.0 C291.0 812.9 303.0 828.3 312.0 846.5 C321.0 864.7 329.3 890.4 337.0 909.0 C344.7 927.6 352.2 941.3 358.0 958.0 C363.8 974.7 368.8 995.6 372.0 1009.0 C375.2 1022.4 376.6 1033.5 377.5 1038.4" fill="none" stroke="#3f63e6" stroke-width="3.2" stroke-linecap="round"/>
<path d="M210.3 695.8 C214.4 700.5 226.1 711.8 235.0 724.0 C243.9 736.2 256.0 756.3 264.0 769.0 C272.0 781.7 275.0 787.1 283.0 800.0 C291.0 812.9 303.0 828.3 312.0 846.5 C321.0 864.7 329.3 890.4 337.0 909.0 C344.7 927.6 352.2 941.3 358.0 958.0 C363.8 974.7 368.8 995.6 372.0 1009.0 C375.2 1022.4 376.6 1033.5 377.5 1038.4" fill="none" stroke="#555" stroke-width="0.6" transform="translate(-2.2 0.8)"/>
<polygon points="210.3,695.8 344.7,627.2 343.0,622.5 208.5,691.0" fill="#fff" stroke="none" stroke-width="1" />
<line x1="210.2" y1="696.4" x2="345.0" y2="627.6" stroke="#3f63e6" stroke-width="3" />
<polygon points="343.8,626.0 863.9,420.6 911.5,495.0 906.0,498.0 861.2,427.0 346.2,631.2" fill="#8b8e99" stroke="#2e2e30" stroke-width="0.6" />
<polyline points="345.0,628.6 862.6,423.9 908.6,496.6" fill="none" stroke="#3f63e6" stroke-width="2.0" />
<line x1="910.6" y1="493.6" x2="865.2" y2="421.6" stroke="#8a3a1a" stroke-width="0.7" />
<path d="M911.5 494.0 C916.2 493.1 929.8 491.0 940.0 488.5 C950.2 486.0 959.0 484.1 973.0 479.0 C987.0 473.9 1007.9 465.7 1024.2 458.1 C1040.5 450.6 1055.2 442.2 1070.7 433.7 C1086.2 425.2 1102.5 416.1 1117.2 407.0 C1131.9 397.9 1146.2 387.9 1159.0 379.0 C1171.8 370.1 1183.2 361.6 1194.0 353.5 C1204.8 345.4 1218.6 334.1 1223.5 330.2" fill="none" stroke="#3f63e6" stroke-width="3"/>
<path d="M909.5 487.5 C914.0 486.4 926.4 483.4 936.4 480.7 C946.4 478.0 955.4 476.3 969.4 471.2 C983.4 466.1 1004.3 457.9 1020.6 450.3 C1036.9 442.8 1051.6 434.4 1067.1 425.9 C1082.6 417.4 1098.9 408.3 1113.6 399.2 C1128.3 390.1 1142.6 380.1 1155.4 371.2 C1168.2 362.3 1179.7 353.8 1190.4 345.7 C1201.2 337.6 1215.0 326.3 1219.9 322.4" fill="none" stroke="#222" stroke-width="0.8"/>
<path d="M938.2 484.3 C943.7 482.7 957.2 479.9 971.2 474.8 C985.2 469.7 1006.1 461.5 1022.4 453.9 C1038.7 446.4 1053.4 438.0 1068.9 429.5 C1084.4 421.0 1100.7 411.9 1115.4 402.8 C1130.1 393.7 1144.4 383.7 1157.2 374.8 C1170.0 365.9 1181.5 357.4 1192.2 349.3 C1203.0 341.2 1216.8 329.9 1221.7 326.0" fill="none" stroke="#333" stroke-width="1" stroke-dasharray="11 5"/>
<line x1="208.5" y1="689.5" x2="343.0" y2="620.5" stroke="#222" stroke-width="0.7" />
<line x1="206.2" y1="688.8" x2="210.8" y2="690.2" stroke="#111" stroke-width="0.9" />
<line x1="340.7" y1="619.8" x2="345.3" y2="621.2" stroke="#111" stroke-width="0.9" />
<line x1="430.0" y1="652.0" x2="480.0" y2="754.0" stroke="#222" stroke-width="0.7" />
<line x1="430.8" y1="649.7" x2="429.2" y2="654.3" stroke="#111" stroke-width="0.9" />
<line x1="480.8" y1="751.7" x2="479.2" y2="756.3" stroke="#111" stroke-width="0.9" />
<line x1="468.0" y1="757.0" x2="577.0" y2="711.0" stroke="#222" stroke-width="0.7" />
<line x1="465.8" y1="756.1" x2="470.2" y2="757.9" stroke="#111" stroke-width="0.9" />
<line x1="574.8" y1="710.1" x2="579.2" y2="711.9" stroke="#111" stroke-width="0.9" />
<line x1="555.0" y1="544.5" x2="684.5" y2="916.0" stroke="#222" stroke-width="0.7" />
<line x1="556.0" y1="542.3" x2="554.0" y2="546.7" stroke="#111" stroke-width="0.9" />
<line x1="685.5" y1="913.8" x2="683.5" y2="918.2" stroke="#111" stroke-width="0.9" />
<line x1="596.0" y1="553.0" x2="520.0" y2="380.0" stroke="#222" stroke-width="0.0" />
<line x1="575.0" y1="713.0" x2="631.0" y2="692.0" stroke="#222" stroke-width="0.7" />
<line x1="572.8" y1="712.0" x2="577.2" y2="714.0" stroke="#111" stroke-width="0.9" />
<line x1="628.8" y1="691.0" x2="633.2" y2="693.0" stroke="#111" stroke-width="0.9" />
<line x1="574.0" y1="727.0" x2="626.0" y2="846.0" stroke="#222" stroke-width="0.7" />
<line x1="574.9" y1="724.8" x2="573.1" y2="729.2" stroke="#111" stroke-width="0.9" />
<line x1="626.9" y1="843.8" x2="625.1" y2="848.2" stroke="#111" stroke-width="0.9" />
<line x1="478.0" y1="767.0" x2="512.0" y2="754.0" stroke="#222" stroke-width="0.7" />
<line x1="475.8" y1="766.0" x2="480.2" y2="768.0" stroke="#111" stroke-width="0.9" />
<line x1="509.8" y1="753.0" x2="514.2" y2="755.0" stroke="#111" stroke-width="0.9" />
<line x1="512.0" y1="754.0" x2="541.0" y2="742.0" stroke="#222" stroke-width="0.7" />
<line x1="509.8" y1="753.1" x2="514.2" y2="754.9" stroke="#111" stroke-width="0.9" />
<line x1="538.8" y1="741.1" x2="543.2" y2="742.9" stroke="#111" stroke-width="0.9" />
<line x1="541.0" y1="742.0" x2="583.0" y2="725.0" stroke="#222" stroke-width="0.7" />
<line x1="538.8" y1="741.1" x2="543.2" y2="742.9" stroke="#111" stroke-width="0.9" />
<line x1="580.8" y1="724.1" x2="585.2" y2="725.9" stroke="#111" stroke-width="0.9" />
<line x1="545.0" y1="769.0" x2="566.0" y2="823.0" stroke="#222" stroke-width="0.7" />
<line x1="546.0" y1="766.8" x2="544.0" y2="771.2" stroke="#111" stroke-width="0.9" />
<line x1="567.0" y1="820.8" x2="565.0" y2="825.2" stroke="#111" stroke-width="0.9" />
<line x1="582.4" y1="882.2" x2="617.5" y2="844.4" stroke="#222" stroke-width="0.7" />
<line x1="580.0" y1="882.3" x2="584.8" y2="882.1" stroke="#111" stroke-width="0.9" />
<line x1="615.1" y1="844.5" x2="619.9" y2="844.3" stroke="#111" stroke-width="0.9" />
<line x1="499.0" y1="781.0" x2="522.0" y2="838.0" stroke="#222" stroke-width="0.7" />
<line x1="499.9" y1="778.8" x2="498.1" y2="783.2" stroke="#111" stroke-width="0.9" />
<line x1="522.9" y1="835.8" x2="521.1" y2="840.2" stroke="#111" stroke-width="0.9" />
<line x1="702.0" y1="613.0" x2="754.0" y2="594.0" stroke="#222" stroke-width="0.7" />
<line x1="699.8" y1="612.0" x2="704.2" y2="614.0" stroke="#111" stroke-width="0.9" />
<line x1="751.8" y1="593.0" x2="756.2" y2="595.0" stroke="#111" stroke-width="0.9" />
<line x1="754.0" y1="594.0" x2="812.0" y2="572.0" stroke="#222" stroke-width="0.7" />
<line x1="751.8" y1="593.0" x2="756.2" y2="595.0" stroke="#111" stroke-width="0.9" />
<line x1="809.8" y1="571.0" x2="814.2" y2="573.0" stroke="#111" stroke-width="0.9" />
<line x1="812.0" y1="572.0" x2="820.0" y2="596.0" stroke="#222" stroke-width="0.7" />
<line x1="813.1" y1="569.8" x2="810.9" y2="574.2" stroke="#111" stroke-width="0.9" />
<line x1="821.1" y1="593.8" x2="818.9" y2="598.2" stroke="#111" stroke-width="0.9" />
<line x1="716.0" y1="499.0" x2="728.0" y2="530.0" stroke="#222" stroke-width="0.7" />
<line x1="717.0" y1="496.8" x2="715.0" y2="501.2" stroke="#111" stroke-width="0.9" />
<line x1="729.0" y1="527.8" x2="727.0" y2="532.2" stroke="#111" stroke-width="0.9" />
<line x1="728.0" y1="530.0" x2="822.0" y2="495.0" stroke="#222" stroke-width="0.7" />
<line x1="725.8" y1="529.0" x2="730.2" y2="531.0" stroke="#111" stroke-width="0.9" />
<line x1="819.8" y1="494.0" x2="824.2" y2="496.0" stroke="#111" stroke-width="0.9" />
<line x1="800.0" y1="452.0" x2="838.0" y2="560.0" stroke="#222" stroke-width="0.7" />
<line x1="801.0" y1="449.8" x2="799.0" y2="454.2" stroke="#111" stroke-width="0.9" />
<line x1="839.0" y1="557.8" x2="837.0" y2="562.2" stroke="#111" stroke-width="0.9" />
<line x1="664.0" y1="690.0" x2="690.0" y2="618.0" stroke="#222" stroke-width="0.7" />
<line x1="661.8" y1="691.0" x2="666.2" y2="689.0" stroke="#111" stroke-width="0.9" />
<line x1="687.8" y1="619.0" x2="692.2" y2="617.0" stroke="#111" stroke-width="0.9" />
<line x1="783.0" y1="600.0" x2="798.0" y2="648.0" stroke="#222" stroke-width="0.7" />
<line x1="784.1" y1="597.9" x2="781.9" y2="602.1" stroke="#111" stroke-width="0.9" />
<line x1="799.1" y1="645.9" x2="796.9" y2="650.1" stroke="#111" stroke-width="0.9" />
<line x1="790.0" y1="652.0" x2="848.0" y2="633.0" stroke="#222" stroke-width="0.7" />
<line x1="787.9" y1="650.9" x2="792.1" y2="653.1" stroke="#111" stroke-width="0.9" />
<line x1="845.9" y1="631.9" x2="850.1" y2="634.1" stroke="#111" stroke-width="0.9" />
<line x1="694.0" y1="632.0" x2="706.0" y2="662.0" stroke="#222" stroke-width="0.7" />
<line x1="694.9" y1="629.8" x2="693.1" y2="634.2" stroke="#111" stroke-width="0.9" />
<line x1="706.9" y1="659.8" x2="705.1" y2="664.2" stroke="#111" stroke-width="0.9" />
<line x1="705.0" y1="664.0" x2="717.0" y2="698.0" stroke="#222" stroke-width="0.7" />
<line x1="706.0" y1="661.8" x2="704.0" y2="666.2" stroke="#111" stroke-width="0.9" />
<line x1="718.0" y1="695.8" x2="716.0" y2="700.2" stroke="#111" stroke-width="0.9" />
<line x1="726.0" y1="680.0" x2="760.0" y2="668.0" stroke="#222" stroke-width="0.7" />
<line x1="723.8" y1="679.0" x2="728.2" y2="681.0" stroke="#111" stroke-width="0.9" />
<line x1="757.8" y1="667.0" x2="762.2" y2="669.0" stroke="#111" stroke-width="0.9" />
<line x1="760.0" y1="668.0" x2="777.0" y2="662.0" stroke="#222" stroke-width="0.7" />
<line x1="757.8" y1="667.0" x2="762.2" y2="669.0" stroke="#111" stroke-width="0.9" />
<line x1="774.8" y1="661.0" x2="779.2" y2="663.0" stroke="#111" stroke-width="0.9" />
<line x1="690.0" y1="728.0" x2="757.0" y2="704.0" stroke="#222" stroke-width="0.7" />
<line x1="687.8" y1="727.0" x2="692.2" y2="729.0" stroke="#111" stroke-width="0.9" />
<line x1="754.8" y1="703.0" x2="759.2" y2="705.0" stroke="#111" stroke-width="0.9" />
<line x1="842.0" y1="607.0" x2="904.0" y2="786.0" stroke="#222" stroke-width="0.7" />
<line x1="843.0" y1="604.8" x2="841.0" y2="609.2" stroke="#111" stroke-width="0.9" />
<line x1="905.0" y1="783.8" x2="903.0" y2="788.2" stroke="#111" stroke-width="0.9" />
<line x1="896.0" y1="784.0" x2="912.0" y2="832.0" stroke="#222" stroke-width="0.7" />
<line x1="897.1" y1="781.8" x2="894.9" y2="786.2" stroke="#111" stroke-width="0.9" />
<line x1="913.1" y1="829.8" x2="910.9" y2="834.2" stroke="#111" stroke-width="0.9" />
<line x1="974.0" y1="566.0" x2="977.0" y2="557.0" stroke="#222" stroke-width="0.7" />
<line x1="911.0" y1="603.0" x2="974.0" y2="582.0" stroke="#222" stroke-width="0.7" />
<line x1="908.8" y1="601.9" x2="913.2" y2="604.1" stroke="#111" stroke-width="0.9" />
<line x1="971.8" y1="580.9" x2="976.2" y2="583.1" stroke="#111" stroke-width="0.9" />
<line x1="974.0" y1="582.0" x2="1110.0" y2="541.0" stroke="#222" stroke-width="0.7" />
<line x1="971.9" y1="580.9" x2="976.1" y2="583.1" stroke="#111" stroke-width="0.9" />
<line x1="1107.9" y1="539.9" x2="1112.1" y2="542.1" stroke="#111" stroke-width="0.9" />
<line x1="1110.0" y1="541.0" x2="1163.0" y2="526.0" stroke="#222" stroke-width="0.7" />
<line x1="1107.9" y1="539.8" x2="1112.1" y2="542.2" stroke="#111" stroke-width="0.9" />
<line x1="1160.9" y1="524.8" x2="1165.1" y2="527.2" stroke="#111" stroke-width="0.9" />
<line x1="1163.0" y1="526.0" x2="1262.0" y2="498.0" stroke="#222" stroke-width="0.7" />
<line x1="1160.9" y1="524.8" x2="1165.1" y2="527.2" stroke="#111" stroke-width="0.9" />
<line x1="1259.9" y1="496.8" x2="1264.1" y2="499.2" stroke="#111" stroke-width="0.9" />
<line x1="1262.0" y1="498.0" x2="1351.0" y2="472.0" stroke="#222" stroke-width="0.7" />
<line x1="1259.9" y1="496.8" x2="1264.1" y2="499.2" stroke="#111" stroke-width="0.9" />
<line x1="1348.9" y1="470.8" x2="1353.1" y2="473.2" stroke="#111" stroke-width="0.9" />
<line x1="972.0" y1="560.0" x2="1047.0" y2="537.0" stroke="#222" stroke-width="0.7" />
<line x1="969.9" y1="558.9" x2="974.1" y2="561.1" stroke="#111" stroke-width="0.9" />
<line x1="1044.9" y1="535.9" x2="1049.1" y2="538.1" stroke="#111" stroke-width="0.9" />
<line x1="1047.0" y1="537.0" x2="1108.0" y2="518.0" stroke="#222" stroke-width="0.7" />
<line x1="1044.9" y1="535.9" x2="1049.1" y2="538.1" stroke="#111" stroke-width="0.9" />
<line x1="1105.9" y1="516.9" x2="1110.1" y2="519.1" stroke="#111" stroke-width="0.9" />
<line x1="1158.0" y1="497.0" x2="1222.0" y2="478.0" stroke="#222" stroke-width="0.7" />
<line x1="1155.9" y1="495.9" x2="1160.1" y2="498.1" stroke="#111" stroke-width="0.9" />
<line x1="1219.9" y1="476.9" x2="1224.1" y2="479.1" stroke="#111" stroke-width="0.9" />
<line x1="1222.0" y1="478.0" x2="1262.0" y2="467.0" stroke="#222" stroke-width="0.7" />
<line x1="1219.9" y1="476.8" x2="1224.1" y2="479.2" stroke="#111" stroke-width="0.9" />
<line x1="1259.9" y1="465.8" x2="1264.1" y2="468.2" stroke="#111" stroke-width="0.9" />
<line x1="974.0" y1="560.0" x2="980.0" y2="590.0" stroke="#222" stroke-width="0.6" />
<line x1="1107.0" y1="514.0" x2="1113.0" y2="548.0" stroke="#222" stroke-width="0.6" />
<line x1="1157.0" y1="499.0" x2="1165.0" y2="533.0" stroke="#222" stroke-width="0.6" />
<line x1="1260.0" y1="469.0" x2="1266.0" y2="504.0" stroke="#222" stroke-width="0.6" />
<line x1="1349.0" y1="446.0" x2="1354.0" y2="479.0" stroke="#222" stroke-width="0.6" />
<line x1="908.0" y1="582.0" x2="914.0" y2="610.0" stroke="#222" stroke-width="0.6" />
<line x1="872.0" y1="417.0" x2="911.5" y2="487.0" stroke="#222" stroke-width="0.7" />
<line x1="872.6" y1="414.7" x2="871.4" y2="419.3" stroke="#111" stroke-width="0.9" />
<line x1="912.1" y1="484.7" x2="910.9" y2="489.3" stroke="#111" stroke-width="0.9" />
<line x1="879.0" y1="424.0" x2="891.0" y2="443.0" stroke="#222" stroke-width="0.9" stroke-dasharray="8 4"/>
<line x1="906.0" y1="468.0" x2="909.0" y2="473.0" stroke="#222" stroke-width="0.9" />
<line x1="922.0" y1="494.0" x2="946.0" y2="540.0" stroke="#222" stroke-width="0.7" />
<line x1="922.7" y1="491.7" x2="921.3" y2="496.3" stroke="#111" stroke-width="0.9" />
<line x1="946.7" y1="537.7" x2="945.3" y2="542.3" stroke="#111" stroke-width="0.9" />
<line x1="1222.0" y1="323.0" x2="1304.0" y2="290.0" stroke="#222" stroke-width="0.7" />
<line x1="1219.8" y1="322.1" x2="1224.2" y2="323.9" stroke="#111" stroke-width="0.9" />
<line x1="1301.8" y1="289.1" x2="1306.2" y2="290.9" stroke="#111" stroke-width="0.9" />
<line x1="1312.0" y1="322.5" x2="1367.3" y2="421.0" stroke="#222" stroke-width="0.7" />
<line x1="1312.7" y1="320.2" x2="1311.3" y2="324.8" stroke="#111" stroke-width="0.9" />
<line x1="1368.0" y1="418.7" x2="1366.6" y2="423.3" stroke="#111" stroke-width="0.9" />
<g transform="translate(273.5 651.0) rotate(-27.0)">
<text x="0" y="3.6" text-anchor="middle" font-size="10.1" fill="#303030">2 430</text></g>
<g transform="translate(439.0 697.0) rotate(66.5)">
<rect x="-14.2" y="-5.3" width="28.5" height="10.6" fill="#fff"/>
<text x="0" y="3.6" text-anchor="middle" font-size="10.1" fill="#303030">1 850</text></g>
<g transform="translate(511.0 710.0) rotate(-23.0)">
<rect x="-14.2" y="-5.3" width="28.5" height="10.6" fill="#fff"/>
<text x="0" y="3.6" text-anchor="middle" font-size="10.1" fill="#303030">1 850</text></g>
<g transform="translate(516.0 741.0) rotate(-21.0)">
<rect x="-9.1" y="-5.3" width="18.1" height="10.6" fill="#fff"/>
<text x="0" y="3.6" text-anchor="middle" font-size="10.1" fill="#303030">300</text></g>
<g transform="translate(555.0 735.0) rotate(-21.0)">
<rect x="-9.1" y="-5.3" width="18.1" height="10.6" fill="#fff"/>
<text x="0" y="3.6" text-anchor="middle" font-size="10.1" fill="#303030">900</text></g>
<g transform="translate(494.0 760.0) rotate(-21.0)">
<rect x="-9.1" y="-5.3" width="18.1" height="10.6" fill="#fff"/>
<text x="0" y="3.6" text-anchor="middle" font-size="10.1" fill="#303030">600</text></g>
<g transform="translate(525.0 788.0) rotate(-21.0)">
<rect x="-9.1" y="-5.3" width="18.1" height="10.6" fill="#fff"/>
<text x="0" y="3.6" text-anchor="middle" font-size="10.1" fill="#303030">600</text></g>
<g transform="translate(556.0 793.0) rotate(69.0)">
<rect x="-14.2" y="-5.3" width="28.5" height="10.6" fill="#fff"/>
<text x="0" y="3.6" text-anchor="middle" font-size="10.1" fill="#303030">1 000</text></g>
<g transform="translate(507.0 808.0) rotate(69.0)">
<rect x="-14.2" y="-5.3" width="28.5" height="10.6" fill="#fff"/>
<text x="0" y="3.6" text-anchor="middle" font-size="10.1" fill="#303030">1 600</text></g>
<g transform="translate(598.0 703.0) rotate(-21.0)">
<rect x="-9.1" y="-5.3" width="18.1" height="10.6" fill="#fff"/>
<text x="0" y="3.6" text-anchor="middle" font-size="10.1" fill="#303030">860</text></g>
<g transform="translate(590.0 785.0) rotate(69.0)">
<rect x="-14.2" y="-5.3" width="28.5" height="10.6" fill="#fff"/>
<text x="0" y="3.6" text-anchor="middle" font-size="10.1" fill="#303030">1 980</text></g>
<g transform="translate(600.0 663.0) rotate(66.0)">
<rect x="-14.2" y="-5.3" width="28.5" height="10.6" fill="#fff"/>
<text x="0" y="3.6" text-anchor="middle" font-size="10.1" fill="#303030">6 430</text></g>
<g transform="translate(596.0 860.5) rotate(-45.0)">
<rect x="-9.1" y="-5.3" width="18.1" height="10.6" fill="#fff"/>
<text x="0" y="3.6" text-anchor="middle" font-size="10.1" fill="#303030">850</text></g>
<g transform="translate(634.0 870.0) rotate(45.0)">
<rect x="-9.1" y="-5.3" width="18.1" height="10.6" fill="#fff"/>
<text x="0" y="3.6" text-anchor="middle" font-size="10.1" fill="#303030">850</text></g>
<g transform="translate(524.0 894.0) rotate(-4.0)">
<rect x="-9.1" y="-5.3" width="18.1" height="10.6" fill="#fff"/>
<text x="0" y="3.6" text-anchor="middle" font-size="10.1" fill="#303030">850</text></g>
<g transform="translate(531.0 941.0) rotate(86.0)">
<rect x="-9.1" y="-5.3" width="18.1" height="10.6" fill="#fff"/>
<text x="0" y="3.6" text-anchor="middle" font-size="10.1" fill="#303030">850</text></g>
<g transform="translate(373.0 899.0) rotate(-10.0)">
<rect x="-9.1" y="-5.3" width="18.1" height="10.6" fill="#fff"/>
<text x="0" y="3.6" text-anchor="middle" font-size="10.1" fill="#303030">860</text></g>
<g transform="translate(393.0 928.0) rotate(76.0)">
<text x="0" y="3.6" text-anchor="middle" font-size="10.1" fill="#303030">2 200</text></g>
<g transform="translate(712.0 509.0) rotate(69.0)">
<rect x="-9.1" y="-5.3" width="18.1" height="10.6" fill="#fff"/>
<text x="0" y="3.6" text-anchor="middle" font-size="10.1" fill="#303030">610</text></g>
<g transform="translate(769.0 512.0) rotate(-20.0)">
<rect x="-14.2" y="-5.3" width="28.5" height="10.6" fill="#fff"/>
<text x="0" y="3.6" text-anchor="middle" font-size="10.1" fill="#303030">1 600</text></g>
<g transform="translate(818.0 513.0) rotate(69.0)">
<rect x="-14.2" y="-5.3" width="28.5" height="10.6" fill="#fff"/>
<text x="0" y="3.6" text-anchor="middle" font-size="10.1" fill="#303030">2 170</text></g>
<g transform="translate(777.0 582.0) rotate(-20.0)">
<rect x="-14.2" y="-5.3" width="28.5" height="10.6" fill="#fff"/>
<text x="0" y="3.6" text-anchor="middle" font-size="10.1" fill="#303030">1 000</text></g>
<g transform="translate(723.0 602.0) rotate(-20.0)">
<rect x="-9.1" y="-5.3" width="18.1" height="10.6" fill="#fff"/>
<text x="0" y="3.6" text-anchor="middle" font-size="10.1" fill="#303030">900</text></g>
<g transform="translate(803.0 601.0) rotate(69.0)">
<rect x="-9.1" y="-5.3" width="18.1" height="10.6" fill="#fff"/>
<text x="0" y="3.6" text-anchor="middle" font-size="10.1" fill="#303030">350</text></g>
<g transform="translate(673.0 657.0) rotate(-70.0)">
<rect x="-14.2" y="-5.3" width="28.5" height="10.6" fill="#fff"/>
<text x="0" y="3.6" text-anchor="middle" font-size="10.1" fill="#303030">1 500</text></g>
<g transform="translate(699.0 641.0) rotate(69.0)">
<rect x="-9.1" y="-5.3" width="18.1" height="10.6" fill="#fff"/>
<text x="0" y="3.6" text-anchor="middle" font-size="10.1" fill="#303030">600</text></g>
<g transform="translate(778.0 632.0) rotate(69.0)">
<rect x="-14.2" y="-5.3" width="28.5" height="10.6" fill="#fff"/>
<text x="0" y="3.6" text-anchor="middle" font-size="10.1" fill="#303030">1 200</text></g>
<g transform="translate(812.0 643.0) rotate(-19.0)">
<rect x="-14.2" y="-5.3" width="28.5" height="10.6" fill="#fff"/>
<text x="0" y="3.6" text-anchor="middle" font-size="10.1" fill="#303030">1 500</text></g>
<g transform="translate(759.0 657.0) rotate(-19.0)">
<rect x="-9.1" y="-5.3" width="18.1" height="10.6" fill="#fff"/>
<text x="0" y="3.6" text-anchor="middle" font-size="10.1" fill="#303030">300</text></g>
<g transform="translate(737.0 670.0) rotate(-19.0)">
<rect x="-9.1" y="-5.3" width="18.1" height="10.6" fill="#fff"/>
<text x="0" y="3.6" text-anchor="middle" font-size="10.1" fill="#303030">600</text></g>
<g transform="translate(711.0 675.0) rotate(69.0)">
<rect x="-9.1" y="-5.3" width="18.1" height="10.6" fill="#fff"/>
<text x="0" y="3.6" text-anchor="middle" font-size="10.1" fill="#303030">600</text></g>
<g transform="translate(732.0 708.0) rotate(-19.0)">
<rect x="-14.2" y="-5.3" width="28.5" height="10.6" fill="#fff"/>
<text x="0" y="3.6" text-anchor="middle" font-size="10.1" fill="#303030">1 200</text></g>
<g transform="translate(719.0 752.0) rotate(71.0)">
<rect x="-14.2" y="-5.3" width="28.5" height="10.6" fill="#fff"/>
<text x="0" y="3.6" text-anchor="middle" font-size="10.1" fill="#303030">2 700</text></g>
<g transform="translate(772.0 742.0) rotate(71.0)">
<rect x="-14.2" y="-5.3" width="28.5" height="10.6" fill="#fff"/>
<text x="0" y="3.6" text-anchor="middle" font-size="10.1" fill="#303030">2 100</text></g>
<g transform="translate(839.0 627.0) rotate(72.0)">
<rect x="-9.1" y="-5.3" width="18.1" height="10.6" fill="#fff"/>
<text x="0" y="3.6" text-anchor="middle" font-size="10.1" fill="#303030">600</text></g>
<g transform="translate(849.0 657.0) rotate(72.0)">
<rect x="-9.1" y="-5.3" width="18.1" height="10.6" fill="#fff"/>
<text x="0" y="3.6" text-anchor="middle" font-size="10.1" fill="#303030">450</text></g>
<g transform="translate(859.0 689.0) rotate(72.0)">
<rect x="-9.1" y="-5.3" width="18.1" height="10.6" fill="#fff"/>
<text x="0" y="3.6" text-anchor="middle" font-size="10.1" fill="#303030">600</text></g>
<g transform="translate(870.0 719.0) rotate(72.0)">
<rect x="-9.1" y="-5.3" width="18.1" height="10.6" fill="#fff"/>
<text x="0" y="3.6" text-anchor="middle" font-size="10.1" fill="#303030">450</text></g>
<g transform="translate(883.0 755.0) rotate(72.0)">
<rect x="-9.1" y="-5.3" width="18.1" height="10.6" fill="#fff"/>
<text x="0" y="3.6" text-anchor="middle" font-size="10.1" fill="#303030">900</text></g>
<g transform="translate(890.0 812.0) rotate(72.0)">
<rect x="-9.1" y="-5.3" width="18.1" height="10.6" fill="#fff"/>
<text x="0" y="3.6" text-anchor="middle" font-size="10.1" fill="#303030">900</text></g>
<g transform="translate(901.0 710.0) rotate(-18.0)">
<text x="0" y="3.6" text-anchor="middle" font-size="10.1" fill="#303030">600</text></g>
<g transform="translate(928.0 793.0) rotate(-18.0)">
<text x="0" y="3.6" text-anchor="middle" font-size="10.1" fill="#303030">600</text></g>
<g transform="translate(932.0 517.0) rotate(58.0)">
<rect x="-9.1" y="-5.3" width="18.1" height="10.6" fill="#fff"/>
<text x="0" y="3.6" text-anchor="middle" font-size="10.1" fill="#303030">970</text></g>
<g transform="translate(898.5 456.0) rotate(58.0)">
<text x="0" y="3.6" text-anchor="middle" font-size="10.1" fill="#303030">1 320</text></g>
<g transform="translate(1070.0 417.0) rotate(-28.0)">
<text x="0" y="3.6" text-anchor="middle" font-size="10.1" fill="#303030">5 838</text></g>
<g transform="translate(998.5 536.5) rotate(-17.0)">
<text x="0" y="3.6" text-anchor="middle" font-size="10.1" fill="#303030">1 040</text></g>
<g transform="translate(1066.0 519.0) rotate(-17.0)">
<text x="0" y="3.6" text-anchor="middle" font-size="10.1" fill="#303030">1 300</text></g>
<g transform="translate(1057.0 551.0) rotate(-17.0)">
<text x="0" y="3.6" text-anchor="middle" font-size="10.1" fill="#303030">2 340</text></g>
<g transform="translate(944.0 587.0) rotate(-18.0)">
<text x="0" y="3.6" text-anchor="middle" font-size="10.1" fill="#303030">1 185</text></g>
<g transform="translate(1137.0 527.0) rotate(-16.0)">
<text x="0" y="3.6" text-anchor="middle" font-size="10.1" fill="#303030">850</text></g>
<g transform="translate(1213.0 505.0) rotate(-15.0)">
<text x="0" y="3.6" text-anchor="middle" font-size="10.1" fill="#303030">1 742</text></g>
<g transform="translate(1308.0 478.0) rotate(-15.0)">
<text x="0" y="3.6" text-anchor="middle" font-size="10.1" fill="#303030">1 488</text></g>
<g transform="translate(1183.0 480.0) rotate(-15.0)">
<text x="0" y="3.6" text-anchor="middle" font-size="10.1" fill="#303030">1 030</text></g>
<g transform="translate(1235.0 464.0) rotate(-15.0)">
<text x="0" y="3.6" text-anchor="middle" font-size="10.1" fill="#303030">710</text></g>
<g transform="translate(1123.0 478.0) rotate(-16.0)">
<rect x="-9.1" y="-5.3" width="18.1" height="10.6" fill="#fff"/>
<text x="0" y="3.6" text-anchor="middle" font-size="10.1" fill="#303030">800</text></g>
<g transform="translate(1178.0 461.0) rotate(-15.0)">
<rect x="-9.1" y="-5.3" width="18.1" height="10.6" fill="#fff"/>
<text x="0" y="3.6" text-anchor="middle" font-size="10.1" fill="#303030">900</text></g>
<g transform="translate(1093.0 487.0) rotate(73.0)">
<rect x="-6.5" y="-5.3" width="12.9" height="10.6" fill="#fff"/>
<text x="0" y="3.6" text-anchor="middle" font-size="10.1" fill="#303030">50</text></g>
<g transform="translate(1244.0 441.0) rotate(75.0)">
<rect x="-6.5" y="-5.3" width="12.9" height="10.6" fill="#fff"/>
<text x="0" y="3.6" text-anchor="middle" font-size="10.1" fill="#303030">50</text></g>
<g transform="translate(1100.0 524.0) rotate(73.0)">
<text x="0" y="3.6" text-anchor="middle" font-size="10.1" fill="#303030">170</text></g>
<g transform="translate(1250.0 485.0) rotate(75.0)">
<text x="0" y="3.6" text-anchor="middle" font-size="10.1" fill="#303030">170</text></g>
<g transform="translate(1264.0 301.0) rotate(-22.0)">
<rect x="-11.7" y="-5.3" width="23.3" height="10.6" fill="#fff"/>
<text x="0" y="3.6" text-anchor="middle" font-size="10.1" fill="#303030">1590</text></g>
<g transform="translate(1340.0 358.5) rotate(61.0)">
<text x="0" y="3.6" text-anchor="middle" font-size="10.1" fill="#303030">2 250</text></g>
<text x="250.0" y="914.0" font-size="8.6" fill="#333" text-anchor="start">Стекл.ограждение</text>
<polyline points="250.0,916.5 327.0,916.5 337.0,908.0" fill="none" stroke="#333" stroke-width="0.7" />
<text x="1100.0" y="357.0" font-size="8.6" fill="#333" text-anchor="end">Стекл.ограждение</text>
<text x="1100.0" y="369.0" font-size="8.6" fill="#333" text-anchor="end">h=1200</text>
<polyline points="1028.0,371.5 1103.0,371.5 1116.0,405.0" fill="none" stroke="#333" stroke-width="0.7" />
<text x="937.0" y="456.0" font-size="8.6" fill="#333" text-anchor="start">Ступень</text>
<text x="937.0" y="468.0" font-size="8.6" fill="#333" text-anchor="start">h=150</text>
<polyline points="978.0,471.0 931.0,471.0 925.0,490.0" fill="none" stroke="#333" stroke-width="0.7" />
<text x="890.0" y="529.0" font-size="8.6" fill="#333" text-anchor="start">Водосток</text>
<polyline points="890.0,532.0 930.0,532.0 904.0,550.0" fill="none" stroke="#333" stroke-width="0.7" />
<text x="1375.0" y="464.0" font-size="8.6" fill="#333" text-anchor="start">Водосток</text>
<polyline points="1412.0,467.0 1372.0,467.0 1346.0,424.0" fill="none" stroke="#333" stroke-width="0.7" />
<text x="1266.9" y="271.5" font-size="8.4" fill="#333" text-anchor="start">Стеллаж</text>
<polyline points="1266.0,274.5 1305.0,274.5 1316.0,308.0" fill="none" stroke="#333" stroke-width="0.7" />
<text x="1040.0" y="586.0" font-size="9" fill="#333">h<tspan font-size="5.5" dy="2">до окна</tspan><tspan dy="-2">=170</tspan></text>
<text x="1040.0" y="598.0" font-size="9" fill="#333">h<tspan font-size="5.5" dy="2">окна</tspan><tspan dy="-2">=2520</tspan></text>
<polyline points="1083.0,600.5 1035.0,600.5 1035.0,516.0" fill="none" stroke="#333" stroke-width="0.7" />
<text x="1193.0" y="530.0" font-size="9" fill="#333">h<tspan font-size="5.5" dy="2">до окна</tspan><tspan dy="-2">=170</tspan></text>
<text x="1193.0" y="542.0" font-size="9" fill="#333">h<tspan font-size="5.5" dy="2">окна</tspan><tspan dy="-2">=2520</tspan></text>
<polyline points="1193.0,544.5 1240.0,544.5 1240.0,460.0" fill="none" stroke="#333" stroke-width="0.7" />
<text x="818.0" y="891.0" font-size="9" fill="#333">h<tspan font-size="5.5" dy="2">до окна</tspan><tspan dy="-2">=280</tspan></text>
<text x="818.0" y="903.0" font-size="9" fill="#333">h<tspan font-size="5.5" dy="2">окна</tspan><tspan dy="-2">=2726</tspan></text>
<polyline points="862.0,905.5 815.0,905.5 805.0,880.0" fill="none" stroke="#333" stroke-width="0.7" />
<text x="1232.5" y="251" font-size="17.7" font-family="DejaVu Sans, Liberation Sans, sans-serif" font-weight="200" fill="#222" stroke="#222" stroke-width="0.42" textLength="172.5" lengthAdjust="spacingAndGlyphs">Схема мебели М 1:70</text>
</svg>
<div id="topbar" class="abs"></div>
<div id="status" class="abs">
<span style="left:22px;letter-spacing:0.59px">14:20</span><span style="left:79px;letter-spacing:0.65px">Сб 9 дек.</span><span style="left:1502px;letter-spacing:0.38px">36 %</span>
</div>
<div id="acttab" class="abs"><span>Аннотировать</span></div>
<div class="abs navt" style="left:585px;letter-spacing:0.64px">Редактировать PDF</div>
<div class="abs navt" style="left:820px;letter-spacing:1.16px">Формы и подписи</div>
<div class="abs navt" style="left:1041.5px;letter-spacing:1.1px">Экспорт</div>
<div id="toolbar" class="abs"></div>
<div id="tabs" class="abs">
<div class="tab" style="left:0;width:6px"></div><div class="tab" style="left:6px;width:7px"></div><div class="tab" style="left:13px;width:7px"></div>
<div class="tab" style="left:20px;width:302px"><span class="t" style="left:150px;letter-spacing:0.67px">кп</span></div>
<div class="tab" style="left:322px;width:320px"><span class="t" style="left:43px;letter-spacing:0.51px">РОСТОВ,чер...и,проверка-1</span></div>
<div class="tab" style="left:642px;width:320px"><span class="t" style="left:87px;letter-spacing:0.47px">схема мебели (1)</span></div>
<div class="tab" style="left:962px;width:320px"><span class="t" style="left:83px;letter-spacing:0.32px">КП НА ПРОВЕРКУ</span></div>
<div class="tab" style="left:1282px;width:318px;background:#fff;border-right:none;height:42px"><span class="t" style="left:125px;letter-spacing:0.66px;color:#2e2d33">терраса</span></div>
</div>
<svg id="icons" width="1600" height="200" viewBox="0 0 1600 200" font-family="Liberation Sans, sans-serif">
<!-- status icons -->
<g>
<rect x="1416.9" y="17.5" width="3.8" height="5.2" rx="0.8" fill="#fff"/>
<rect x="1422.6" y="14.4" width="3.8" height="8.3" rx="0.8" fill="#75747a"/>
<rect x="1428.5" y="11.9" width="3.8" height="10.8" rx="0.8" fill="#75747a"/>
<rect x="1434.4" y="9.4" width="3.8" height="13.3" rx="0.8" fill="#75747a"/>
<g fill="none" stroke-linecap="round">
<path d="M1445.6 14.2 A11.5 11.5 0 0 1 1461.9 14.2" stroke="#8b8a90" stroke-width="2.3"/>
<path d="M1448.4 17 A7.5 7.5 0 0 1 1459.1 17" stroke="#fff" stroke-width="2.3"/>
<path d="M1451.2 19.7 A3.6 3.6 0 0 1 1456.3 19.7" stroke="#fff" stroke-width="2.3"/>
</g>
<circle cx="1453.75" cy="21.8" r="1.2" fill="#fff"/>
<path d="M1481.2 19.5 V16 A5.3 5.3 0 0 1 1491.8 16 V19.5" fill="none" stroke="#fff" stroke-width="1.7"/>
<rect x="1480.3" y="16.2" width="3.4" height="5.2" rx="1.2" fill="#fff"/>
<rect x="1489.3" y="16.2" width="3.4" height="5.2" rx="1.2" fill="#fff"/>
<rect x="1545.2" y="8.4" width="31.2" height="15" rx="4.2" fill="none" stroke="#85848a" stroke-width="1.2"/>
<rect x="1547.4" y="10.6" width="9" height="10.6" rx="2" fill="#fff"/>
<path d="M1578.3 13.4 Q1580.3 14.4 1580.3 16 Q1580.3 17.6 1578.3 18.6 Z" fill="#85848a"/>
</g>
<!-- nav left -->
<path d="M34.4 50.6 L23.2 60.2 L34.4 69.9" fill="none" stroke="#fff" stroke-width="2.2" stroke-linecap="round" stroke-linejoin="round"/>
<g fill="none" stroke="#fff" stroke-width="1.8">
<rect x="89" y="49.6" width="7.2" height="7.4" rx="0.8"/><rect x="102.1" y="49.6" width="7.2" height="7.4" rx="0.8"/>
<rect x="89" y="63.4" width="7.2" height="7.4" rx="0.8"/><rect x="102.1" y="63.4" width="7.2" height="7.4" rx="0.8"/>
</g>
<!-- plus -->
<circle cx="1190" cy="61" r="21" fill="#2a292e"/>
<path d="M1182 61 H1198 M1190 53 V69" stroke="#fff" stroke-width="2.3" stroke-linecap="round"/>
<!-- right nav icons -->
<circle cx="1391.6" cy="57.4" r="8.3" fill="none" stroke="#fff" stroke-width="2.1"/>
<path d="M1397.8 63.8 L1404.3 70.6" stroke="#fff" stroke-width="3" stroke-linecap="round"/>
<path d="M1452.6 51.5 C1448.5 49.6 1443 49.6 1439.1 50.6 V69.6 C1443 68.6 1448.5 68.7 1452.6 70.6 C1456.7 68.7 1462.2 68.6 1466.1 69.6 V50.6 C1462.2 49.6 1456.7 49.6 1452.6 51.5 Z M1452.6 51.5 V70.6" fill="none" stroke="#fff" stroke-width="1.9" stroke-linejoin="round"/>
<text x="1497" y="72" font-size="14.5" fill="#fff" font-weight="bold">A</text>
<text transform="translate(1509.6 72) scale(0.84 1)" font-size="31.5" fill="#fff">A</text>
<circle cx="1560.9" cy="60.5" r="2.6" fill="#fff"/><circle cx="1570.5" cy="60.5" r="2.6" fill="#fff"/><circle cx="1580" cy="60.5" r="2.6" fill="#fff"/>
<!-- toolbar -->
<rect x="27.8" y="110.3" width="25" height="24.6" rx="3" fill="none" stroke="#2c2c30" stroke-width="2" stroke-dasharray="3.1 2.5"/>
<rect x="452.9" y="109.2" width="27" height="27" rx="3.5" fill="#f7ed62"/>
<text x="466.4" y="131.7" font-size="26" fill="#2d2d31" text-anchor="middle">A</text>
<text x="525.2" y="131.7" font-size="26" fill="#2d2d31" text-anchor="middle">A</text>
<path d="M512 134.5 H538.8" stroke="#ef431d" stroke-width="1.9"/>
<text x="584.3" y="131.7" font-size="26" fill="#2d2d31" text-anchor="middle">A</text>
<path d="M571 121.7 H597.6" stroke="#ef431d" stroke-width="1.8"/>
<!-- text box -->
<rect x="688.2" y="109.8" width="25.4" height="25.6" rx="2.2" fill="none" stroke="#636368" stroke-width="1.6"/>
<circle cx="688.2" cy="122.6" r="2.4" fill="#3a3a3e"/><circle cx="713.7" cy="122.6" r="2.4" fill="#3a3a3e"/>
<path d="M695.6 117.9 H706.2 M700.9 117.9 V129.3" stroke="#f0421b" stroke-width="2.7" fill="none"/>
<!-- pen -->
<g transform="translate(750.3 131.9) rotate(45)" fill="none" stroke="#26262a" stroke-width="1.6" stroke-linecap="round" stroke-linejoin="round">
<circle cx="0" cy="0" r="2" fill="#111" stroke="none"/>
<rect x="-2.2" y="-5.4" width="4.4" height="3" fill="#fff"/>
<path d="M-9.3 -24.4 Q0 -22.2 9.3 -24.4"/>
<path d="M-8.4 -23.4 C-8.6 -13 -6 -8 -2.4 -5.6 M8.4 -23.4 C8.6 -13 6 -8 2.4 -5.6"/>
<path d="M-7.8 -18.3 H7.8" stroke="#000" stroke-width="3.8" stroke-linecap="butt"/>
</g>
<!-- highlighter -->
<g transform="translate(809.6 132.4) rotate(45)" stroke-linejoin="round" stroke-linecap="round">
<polygon points="-5,-6 5,-6 5,-2.6 -5,0.9" fill="#f1e61f"/>
<rect x="-7.9" y="-22" width="15.8" height="11" fill="#f1e61f"/>
<path d="M-8.7 -24.8 V-13 L-6.4 -10.6 M8.7 -24.8 V-13 L6.4 -10.6" fill="none" stroke="#26262a" stroke-width="1.6"/>
<rect x="-6.4" y="-10.8" width="12.8" height="5.6" rx="0.8" fill="#fff" stroke="#26262a" stroke-width="1.4"/>
<path d="M-6.4 -8 H6.4" stroke="#26262a" stroke-width="1.1"/>
</g>
<!-- eraser -->
<g transform="translate(877.6 122.5) rotate(-38)">
<rect x="-14" y="-6.6" width="28" height="13.2" rx="2.4" fill="#fff"/>
<path d="M4.2 -6.6 H11.6 A2.4 2.4 0 0 1 14 -4.2 V4.2 A2.4 2.4 0 0 1 11.6 6.6 H4.2 Z" fill="#b9b9bc"/>
<path d="M-11.6 -6.6 H11.6 A2.4 2.4 0 0 1 14 -4.2 V4.2 A2.4 2.4 0 0 1 11.6 6.6 H-9.5 L-14 2.6 V-4.2 A2.4 2.4 0 0 1 -11.6 -6.6 Z" fill="none" stroke="#333337" stroke-width="1.7" stroke-linejoin="round"/>
</g>
<!-- note -->
<path d="M983.5 112.9 H1005 A2.2 2.2 0 0 1 1007.2 115.1 V127.3 A2.2 2.2 0 0 1 1005 129.5 H997.5 L994.2 133.6 L990.9 129.5 H983.5 A2.2 2.2 0 0 1 981.3 127.3 V115.1 A2.2 2.2 0 0 1 983.5 112.9 Z" fill="#f9f59c" stroke="#b3ae68" stroke-width="1.3" stroke-linejoin="round"/>
<circle cx="989.2" cy="121.3" r="1.35" fill="#222"/><circle cx="994.2" cy="121.3" r="1.35" fill="#222"/><circle cx="999.2" cy="121.3" r="1.35" fill="#222"/>
<!-- shapes -->
<rect x="1042.3" y="110.4" width="16.4" height="16.4" fill="none" stroke="#333337" stroke-width="1.7"/>
<circle cx="1057.8" cy="125.4" r="8.9" fill="#fff" stroke="#333337" stroke-width="1.7"/>
<!-- sticker -->
<path d="M1110.1 110 A12.6 12.6 0 1 0 1124.5 124.2 Z" fill="none" stroke="#2b2b2f" stroke-width="1.8" stroke-linejoin="round"/>
<path d="M1110.1 110 Q1108.6 123.4 1124.5 124.2" fill="none" stroke="#2b2b2f" stroke-width="1.8"/>
<!-- undo -->
<path d="M1532.5 111.2 L1527.4 115.7 L1532.5 120.3 M1527.8 115.7 H1543 A8.1 8.1 0 0 1 1543 131.9 H1527.4" fill="none" stroke="#8e8e93" stroke-width="1.8" stroke-linecap="round" stroke-linejoin="round"/>
<path d="M1581.1 112.8 V133.4 M1586.8 112.8 V133.4" stroke="#c3c3c8" stroke-width="1.8"/>
<!-- tab close -->
<g stroke="#b4b4b9" stroke-width="1.5" stroke-linecap="round">
<path d="M312.5 169.5 L321.5 178.5 M321.5 169.5 L312.5 178.5"/>
<path d="M615.5 169.5 L624.5 178.5 M624.5 169.5 L615.5 178.5"/>
<path d="M935.5 169.5 L944.5 178.5 M944.5 169.5 L935.5 178.5"/>
<path d="M1255.5 169.5 L1264.5 178.5 M1264.5 169.5 L1255.5 178.5"/>
<path d="M1575.5 169.5 L1584.5 178.5 M1584.5 169.5 L1575.5 178.5"/>
</g>
</svg>
<svg id="orb" width="1600" height="1118" viewBox="0 0 1600 1118" style="pointer-events:none">
<defs>
<radialGradient id="oShadow" cx="0.5" cy="0.5" r="0.5"><stop offset="0.55" stop-color="#5a5f70" stop-opacity="0.2"/><stop offset="0.8" stop-color="#7a8090" stop-opacity="0.07"/><stop offset="1" stop-color="#8a8f9c" stop-opacity="0"/></radialGradient>
<linearGradient id="oBase" x1="0.85" y1="0.1" x2="0.15" y2="0.9"><stop offset="0" stop-color="#1b6f7d"/><stop offset="0.45" stop-color="#22a9b0"/><stop offset="1" stop-color="#2fe9ee"/></linearGradient>
<linearGradient id="oGreen" x1="0" y1="0" x2="1" y2="1"><stop offset="0" stop-color="#42f2cc"/><stop offset="1" stop-color="#23b99a" stop-opacity="0.2"/></linearGradient>
<linearGradient id="oBlue" x1="0" y1="0" x2="1" y2="0.4"><stop offset="0" stop-color="#2ff0f6"/><stop offset="1" stop-color="#2c9df0"/></linearGradient>
<clipPath id="oClip"><circle cx="1497.3" cy="1015.1" r="36.7"/></clipPath>
<filter id="oB1" x="-30%" y="-30%" width="160%" height="160%"><feGaussianBlur stdDeviation="1.6"/></filter>
<filter id="oB3" x="-30%" y="-30%" width="160%" height="160%"><feGaussianBlur stdDeviation="3"/></filter>
</defs>
<circle cx="1499" cy="1018" r="64" fill="url(#oShadow)"/>
<ellipse cx="1494.2" cy="1056.5" rx="9.5" ry="15.5" fill="#c9f3fb" transform="rotate(14 1494.2 1058)" filter="url(#oB1)"/>
<ellipse cx="1487.5" cy="977" rx="5" ry="11" fill="#c4e4f6" opacity="0.75" transform="rotate(-25 1487.5 977)" filter="url(#oB1)"/>
<circle cx="1497.3" cy="1015.1" r="36.7" fill="url(#oBase)"/>
<g clip-path="url(#oClip)">
<ellipse cx="1478" cy="1003" rx="24" ry="30" fill="url(#oGreen)" transform="rotate(35 1478 1003)" filter="url(#oB1)"/>
<ellipse cx="1496" cy="1000" rx="8" ry="26" fill="#2aa7c2" opacity="0.8" transform="rotate(-18 1496 1000)" filter="url(#oB1)"/>
<ellipse cx="1512" cy="1008" rx="22" ry="13" fill="#3fe0a6" opacity="0.85" transform="rotate(-32 1512 1008)" filter="url(#oB1)"/>
<ellipse cx="1520" cy="1016" rx="12" ry="22" fill="#1f7d8a" opacity="0.55" transform="rotate(-10 1520 1016)" filter="url(#oB3)"/>
<ellipse cx="1494" cy="1034" rx="36" ry="19" fill="url(#oBlue)" transform="rotate(-14 1494 1034)" filter="url(#oB1)"/>
<ellipse cx="1483" cy="1030" rx="20" ry="16" fill="#30f4f8" opacity="0.8" filter="url(#oB3)"/>
<ellipse cx="1503.5" cy="1010" rx="3" ry="5.5" fill="#fff" transform="rotate(35 1503.5 1010)" filter="url(#oB1)"/>
</g>
<circle cx="1497.3" cy="1015.1" r="36.2" fill="none" stroke="#1c8f96" stroke-opacity="0.45" stroke-width="1.2"/>
</svg>

<div id="homebar" class="abs"></div>
</body>
</html>
